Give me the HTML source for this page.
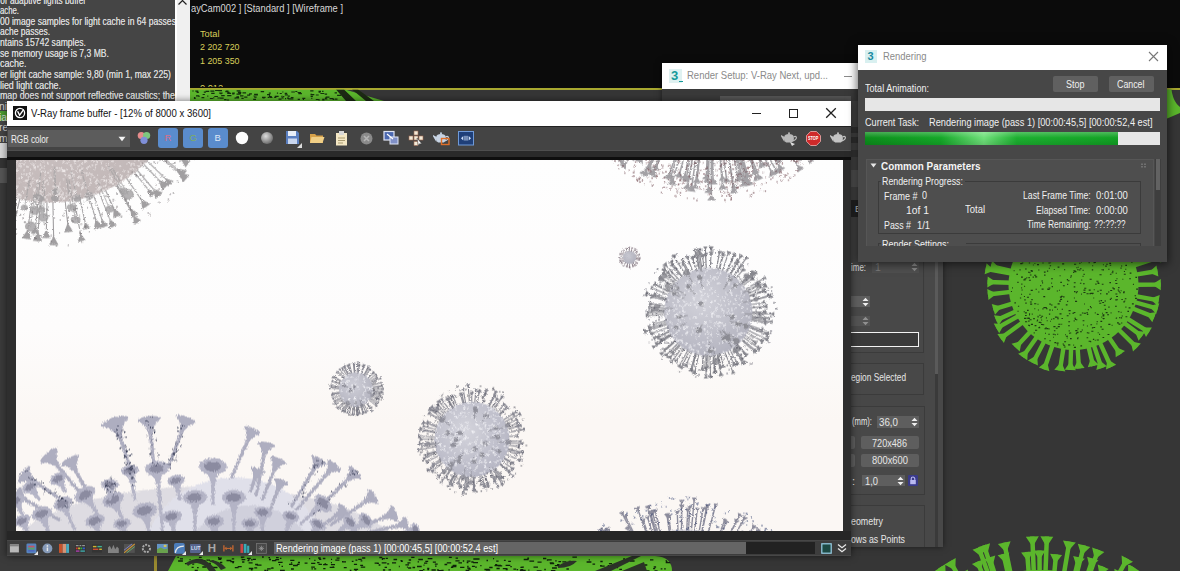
<!DOCTYPE html>
<html><head><meta charset="utf-8"><title>V-Ray frame buffer</title>
<style>
html,body{margin:0;padding:0}
body{width:1180px;height:571px;overflow:hidden;position:relative;background:#363636;font-family:"Liberation Sans",sans-serif}
.r{position:absolute}
.t{position:absolute;white-space:nowrap}
svg{position:absolute;overflow:hidden}
</style></head><body>
<div class="r" style="left:190px;top:0px;width:990px;height:88px;background:#0b0b0b;"></div>
<div class="r" style="left:190px;top:88px;width:990px;height:1.5px;background:#a8a830;"></div>
<div class="r" style="left:190px;top:89.5px;width:990px;height:481.5px;background:#363636;"></div>
<div class="r" style="left:0px;top:100px;width:157px;height:471px;background:#3b3b3b;"></div>
<div class="r" style="left:154px;top:556px;width:2.5px;height:15px;background:#9a8a30;"></div>
<div class="t" style="left:190.5px;top:2.2px;font-size:10px;line-height:13px;color:#d8d8d8;transform:scaleX(0.9333);transform-origin:0 50%;">ayCam002 ] [Standard ] [Wireframe ]</div>
<div class="t" style="left:200.0px;top:28.0px;font-size:9.5px;line-height:12px;color:#d9cf5a;transform:scaleX(0.9718);transform-origin:0 50%;">Total</div>
<div class="t" style="left:200.0px;top:41.3px;font-size:9.5px;line-height:12px;color:#d9cf5a;transform:scaleX(0.9347);transform-origin:0 50%;">2 202 720</div>
<div class="t" style="left:200.0px;top:54.5px;font-size:9.5px;line-height:12px;color:#d9cf5a;transform:scaleX(0.9347);transform-origin:0 50%;">1 205 350</div>
<div class="t" style="left:200.0px;top:82.3px;font-size:9.5px;line-height:12px;color:#d9cf5a;transform:scaleX(0.9675);transform-origin:0 50%;clip-path:inset(0 0 7.3px 0);">0,012</div>
<svg style="left:0;top:0" width="1180" height="571" viewBox="0 0 1180 571"><g><circle cx="1073.5" cy="285" r="65" fill="#5bb62c"/><path d="M1136.5 284.7L1160.8 284.6M1135.5 296.2L1158.7 300.4M1134.2 302.0L1157.7 308.7M1132.0 308.3L1154.3 317.1M1126.9 318.4L1148.9 332.2M1123.9 322.7L1141.9 336.2M1118.3 329.2L1136.9 347.6M1108.8 337.2L1120.4 354.2M1099.8 342.3L1111.1 367.0M1093.7 344.7L1101.6 368.1M1088.4 346.2L1093.2 366.0M1077.6 347.9L1079.0 368.5M1071.1 348.0L1070.3 370.0M1063.6 347.2L1059.9 370.5M1052.8 344.5L1044.1 369.4M1044.4 340.9L1032.9 363.0M1037.2 336.5L1022.7 356.9M1030.7 331.2L1015.6 347.6M1022.7 322.3L1000.6 338.5M1018.6 315.9L996.5 328.3M1016.2 311.2L996.2 320.3M1013.2 303.3L993.3 309.3M1010.9 291.9L987.9 294.5M1010.5 282.8L987.5 282.0M1011.5 273.6L985.6 268.8M1012.1 271.1L990.8 266.2M1016.8 257.6L995.5 247.2M1021.3 249.7L1002.1 236.8M1023.0 247.4L1003.1 232.5M1031.8 237.8L1017.1 221.1M1035.1 235.1L1021.3 217.1M1047.1 227.8L1036.4 204.4M1050.2 226.5L1042.0 206.0M1058.2 223.9L1053.2 203.8M1071.1 222.0L1070.2 200.5M1078.2 222.2L1079.9 198.7M1084.4 223.0L1088.8 197.8M1092.4 224.9L1099.9 201.1M1100.3 228.0L1110.2 206.9M1108.3 232.5L1120.6 214.0M1118.6 241.0L1137.3 222.8M1121.6 244.3L1141.9 227.1M1126.4 250.7L1145.8 238.1M1132.1 262.0L1155.3 252.9M1133.4 265.6L1159.5 257.1M1135.6 274.6L1157.5 271.0" stroke="#5bb62c" stroke-width="4.4" fill="none"/><path d="M1151.9 284.6L1160.8 290.2L1160.8 279.0ZM1149.9 298.8L1157.7 305.9L1159.7 294.9ZM1149.1 306.3L1156.2 314.1L1159.3 303.3ZM1146.0 313.8L1152.3 322.3L1156.4 311.9ZM1141.3 327.5L1146.0 337.0L1151.9 327.5ZM1134.7 330.8L1138.6 340.7L1145.3 331.7ZM1130.6 341.3L1133.0 351.6L1140.9 343.6ZM1115.3 346.8L1115.7 357.3L1125.0 351.0ZM1107.4 358.9L1106.0 369.4L1116.2 364.7ZM1098.7 359.6L1096.3 369.9L1106.9 366.3ZM1091.1 357.3L1087.8 367.3L1098.7 364.7ZM1078.4 359.6L1073.4 368.9L1084.6 368.1ZM1070.7 361.0L1064.7 369.7L1075.9 370.2ZM1061.3 361.7L1054.3 369.7L1065.4 371.4ZM1047.0 360.9L1038.8 367.5L1049.4 371.2ZM1037.1 355.0L1027.9 360.4L1037.9 365.5ZM1027.9 349.6L1018.1 353.7L1027.3 360.2ZM1021.7 341.0L1011.5 343.8L1019.7 351.4ZM1007.8 333.2L997.3 334.0L1003.9 343.0ZM1004.3 323.9L993.7 323.4L999.2 333.2ZM1004.4 316.5L993.9 315.2L998.6 325.4ZM1001.9 306.7L991.7 303.9L995.0 314.7ZM996.8 293.5L987.2 288.9L988.5 300.0ZM996.4 282.3L987.7 276.4L987.3 287.6ZM994.4 270.4L986.6 263.3L984.6 274.3ZM999.6 268.2L992.1 260.8L989.6 271.7ZM1003.6 251.1L997.9 242.2L993.1 252.3ZM1009.6 241.8L1005.3 232.1L999.0 241.4ZM1010.3 237.9L1006.4 228.0L999.7 237.0ZM1023.0 227.8L1021.3 217.4L1012.9 224.8ZM1026.7 224.2L1025.7 213.7L1016.8 220.5ZM1040.1 212.5L1041.5 202.0L1031.3 206.7ZM1045.3 214.3L1047.2 203.9L1036.8 208.1ZM1055.4 212.5L1058.7 202.4L1047.8 205.2ZM1070.6 209.5L1075.8 200.3L1064.6 200.7ZM1079.3 207.7L1085.5 199.2L1074.3 198.3ZM1087.3 206.6L1094.3 198.7L1083.3 196.8ZM1097.2 209.7L1105.2 202.8L1094.5 199.4ZM1106.4 215.0L1115.3 209.3L1105.2 204.5ZM1115.7 221.5L1125.3 217.1L1116.0 210.9ZM1130.9 229.1L1141.2 226.8L1133.4 218.8ZM1135.1 232.9L1145.6 231.3L1138.3 222.8ZM1138.2 243.0L1148.8 242.8L1142.7 233.4ZM1147.0 256.1L1157.4 258.1L1153.3 247.6ZM1151.0 259.9L1161.3 262.5L1157.8 251.8ZM1148.6 272.5L1158.4 276.5L1156.5 265.5Z" fill="#5bb62c"/><path d="M1078.6 249.2h1.2M1090.4 293.4h1.6M1075.6 333.8h1.3M1014.4 302.9h1.5M1021.1 258.5h1.1M1107.5 334.5h1.9M1073.6 312.5h1.8M1099.5 274.8h2.1M1109.7 252.0h1.4M1083.4 292.5h2.1M1077.4 337.8h1.2M1095.3 241.4h1.2M1097.7 332.7h0.9M1079.9 331.7h2.0M1048.4 263.0h2.1M1075.8 292.8h1.2M1058.9 290.2h1.0M1041.1 320.0h1.0M1035.0 330.3h2.2M1044.6 241.3h1.6M1081.0 294.1h0.8M1118.1 256.8h2.1M1123.3 291.7h1.5M1069.1 249.7h2.2M1115.0 306.2h1.8M1117.3 253.2h1.8M1089.7 226.9h1.3M1049.8 230.1h2.0M1024.9 312.9h2.0M1028.8 263.0h1.3M1030.8 260.6h0.9M1033.3 236.7h2.0M1068.1 246.1h1.8M1037.0 264.6h2.0M1120.7 312.4h0.8M1038.3 259.0h1.1M1059.3 242.9h1.7M1101.5 269.7h0.8M1057.1 334.3h1.1M1102.5 337.5h1.7M1017.9 306.2h1.3M1059.3 260.7h1.4M1094.3 228.4h2.0M1037.5 317.0h1.2M1102.6 318.5h2.0M1104.4 241.7h2.1M1069.2 310.6h1.4M1068.9 313.8h1.4M1042.3 253.5h1.2M1106.7 232.1h1.4M1083.5 290.1h2.0M1124.8 298.7h1.6M1053.2 337.3h0.8M1101.4 317.1h0.8M1088.2 258.0h1.0M1121.4 299.5h1.4M1038.6 247.8h1.9M1123.9 271.5h1.1M1047.2 289.1h0.8M1021.0 294.3h1.1M1068.3 321.7h1.8M1024.5 278.7h1.9M1029.5 319.8h2.1M1125.5 316.7h1.8M1102.6 315.9h1.7M1106.2 264.3h1.6M1114.4 246.3h2.1M1023.9 296.5h1.1M1063.5 228.8h1.7M1067.6 256.5h2.1M1135.4 277.4h1.6M1082.5 250.5h2.1M1096.5 255.7h0.9M1029.9 302.0h1.9M1062.9 285.8h1.9M1125.4 307.1h1.0M1045.0 333.2h1.0M1100.4 321.4h1.8M1101.5 240.8h2.1M1012.1 287.9h0.9M1081.7 330.0h1.2M1066.8 235.0h1.5M1099.7 245.7h1.2M1030.9 324.4h2.1M1088.6 341.2h2.2M1026.3 277.8h1.1M1029.9 275.0h1.6M1134.6 295.8h1.5M1027.7 318.0h1.6M1021.2 287.9h0.9M1034.1 275.2h2.1M1102.5 269.9h1.5M1102.5 314.7h1.9M1108.8 259.5h1.2M1091.3 331.2h2.1M1111.7 325.4h0.8M1083.8 313.2h1.8M1057.1 318.8h1.7M1116.1 318.0h1.0M1042.0 282.9h1.1M1032.6 277.1h1.3M1034.3 308.7h1.0M1087.7 333.0h1.7M1016.3 274.2h1.7M1092.4 261.2h1.8M1095.7 229.4h1.2M1049.5 340.6h1.1M1132.9 284.4h1.0M1077.1 338.6h1.2M1120.7 317.9h1.4M1079.1 263.3h1.4M1070.2 277.3h1.1M1048.7 230.2h2.2M1107.1 314.7h1.9M1021.3 284.1h1.1M1092.1 293.8h0.9M1030.6 270.6h1.6M1089.9 306.6h1.1M1107.2 232.1h2.1M1086.5 293.8h2.1M1019.9 298.0h1.3M1029.2 294.3h1.4M1067.7 280.7h1.8M1088.5 262.7h1.4M1070.8 245.0h1.1M1096.5 323.9h0.8M1117.7 249.9h1.8M1105.6 246.6h1.4M1037.2 258.8h2.2M1084.3 254.8h2.1M1071.6 229.4h1.9M1024.0 318.4h2.0M1054.7 233.1h1.9M1029.0 314.9h0.9M1050.0 321.2h0.8M1042.5 324.7h1.7M1080.4 345.9h1.7M1046.7 328.6h1.6M1035.0 276.9h2.2M1040.4 243.8h1.9M1083.0 283.8h1.7M1071.3 253.1h1.4M1100.0 293.7h1.3M1099.2 303.3h2.1M1030.8 271.1h2.2M1016.3 258.9h1.7M1079.9 268.8h1.6M1074.3 271.6h2.1M1096.7 321.6h1.0M1024.2 286.4h0.9M1112.0 271.2h1.5M1042.4 263.0h1.2M1047.0 245.9h1.2M1066.4 251.4h0.8M1073.9 298.0h1.0M1074.6 245.6h2.1M1073.4 270.9h2.2M1089.6 279.2h2.1M1034.1 303.7h2.2M1075.3 330.6h2.1M1066.1 242.5h2.2M1093.4 240.3h1.0M1043.3 255.0h1.1M1116.9 299.7h1.0M1025.3 303.1h1.4M1069.8 333.0h1.4M1081.5 239.8h2.2M1125.2 269.2h1.1M1118.5 324.1h1.9M1046.8 258.3h1.2M1054.7 241.5h1.6M1036.8 244.4h1.1M1073.9 347.4h2.1M1082.6 276.4h0.9M1068.1 325.8h1.7M1110.6 312.9h0.9M1117.9 311.8h1.6M1047.3 256.7h1.5M1082.6 320.8h1.8M1082.6 270.4h1.0M1091.6 238.6h1.9M1082.9 325.0h1.2M1087.6 249.4h1.7M1109.4 282.6h1.6M1072.0 224.5h1.4M1060.1 299.4h2.0M1089.5 293.6h1.6M1021.5 290.0h1.2M1076.3 267.8h1.1M1064.0 269.7h1.2M1065.3 233.1h1.2M1097.0 314.5h1.8M1059.1 301.1h1.8M1018.7 259.5h2.1M1109.2 263.4h1.9M1061.5 318.5h1.4M1128.2 261.2h1.1M1048.9 314.1h1.3M1042.4 308.9h1.1M1021.7 263.0h1.6M1097.9 244.5h1.0M1076.8 225.9h1.2M1118.3 291.3h1.6M1017.0 259.5h1.7M1078.8 270.0h1.6M1077.8 267.2h0.9M1068.6 225.4h0.9M1057.6 267.1h1.8M1055.0 259.8h1.1M1077.9 239.7h1.9M1044.6 307.6h2.2M1052.7 245.9h1.6M1063.9 232.8h2.1M1025.0 315.5h1.7M1107.8 240.0h2.0M1120.7 245.3h1.7M1021.0 277.1h1.9M1037.5 304.3h1.0M1070.0 222.3h1.3M1087.6 309.8h1.4M1057.3 344.9h0.9M1065.8 304.9h1.7M1077.8 258.6h0.9M1026.9 297.3h2.1M1093.7 289.7h1.1M1079.7 315.0h1.8M1048.8 268.3h1.1M1068.4 310.7h1.9M1055.8 328.2h1.9M1041.6 289.1h2.0M1105.2 266.1h1.6M1115.7 273.3h1.1M1131.9 303.9h1.9M1039.2 315.3h1.5M1063.9 347.0h1.7M1074.0 291.6h1.5M1034.6 325.6h1.8M1053.8 269.5h1.0M1059.5 313.9h2.0M1023.4 279.9h2.2M1068.7 330.9h1.0M1073.8 282.7h1.9M1106.0 238.0h0.9M1066.8 338.0h0.9M1030.7 290.4h2.1M1023.6 254.8h1.2M1083.5 245.5h2.1M1121.7 316.0h1.1M1029.5 272.7h1.0M1090.8 254.4h1.2M1104.5 301.0h1.5M1065.3 248.1h1.8M1104.7 309.4h1.4M1129.7 273.1h1.7M1112.1 288.0h1.8M1077.2 332.2h1.4M1136.1 289.1h1.9M1086.8 332.7h1.2M1040.5 317.6h1.2M1052.9 318.7h1.7M1072.4 313.2h1.8M1044.2 338.8h1.6M1067.5 249.2h2.0M1093.3 298.0h0.9M1050.2 237.3h1.1M1026.4 318.2h1.6M1098.8 301.1h1.0M1102.1 313.3h0.9M1109.7 265.3h1.5M1040.3 240.9h1.9M1046.1 308.8h1.4M1113.2 288.9h1.8M1129.2 278.7h1.7M1066.8 279.6h1.3M1045.6 327.6h0.9M1041.2 316.3h1.9M1095.9 241.1h1.0M1079.7 225.4h1.6M1046.7 320.7h1.0M1059.2 224.0h1.5M1061.1 228.7h1.1M1120.5 268.1h1.1M1100.5 300.6h1.6M1061.7 250.8h2.1M1045.9 317.9h1.0M1096.4 281.2h2.1M1028.0 272.3h1.6M1068.1 344.9h2.2M1093.6 240.4h1.0M1088.8 254.8h2.1M1076.2 332.7h2.0M1091.9 327.9h0.9M1099.7 290.3h2.2M1121.0 266.0h1.2M1047.8 237.3h1.3M1026.1 254.1h0.8M1086.9 326.0h1.0M1037.5 316.2h1.0M1041.4 281.0h1.6M1048.6 328.9h0.9M1062.1 263.9h2.1M1038.5 259.6h1.4M1036.2 248.3h1.9M1074.0 241.1h2.2M1104.2 235.4h1.4M1030.1 304.1h2.1M1028.4 277.6h1.4M1102.9 264.8h0.9M1064.4 225.9h1.8M1028.8 253.6h1.2M1059.6 275.8h1.0M1031.3 299.6h1.4M1123.3 301.9h1.5M1075.9 319.8h1.4M1075.0 301.4h2.1M1123.8 274.2h2.0M1023.7 311.8h1.1M1072.5 237.5h2.1M1119.2 317.6h1.0M1013.7 270.6h0.8M1074.8 319.5h1.3M1128.6 307.9h1.9M1043.4 307.6h1.6M1084.2 288.2h2.1M1057.7 326.6h2.1M1116.4 278.8h1.1M1056.5 343.1h2.1M1092.9 339.4h1.3M1047.7 289.5h2.0M1101.8 284.2h1.7M1094.8 340.2h0.9M1115.7 318.2h1.2M1121.1 250.5h1.8M1108.3 324.4h2.1M1056.8 291.0h1.1M1054.8 334.8h1.1M1086.3 312.8h1.7M1083.2 247.8h1.7M1109.7 252.8h1.1M1054.4 342.6h1.7M1065.0 334.7h0.9M1115.1 280.5h1.5M1060.3 282.4h1.6M1066.7 315.8h1.9M1102.2 302.5h1.9M1074.4 318.3h1.6M1096.7 340.0h2.2M1115.4 294.0h1.9M1028.0 325.3h1.5M1093.5 327.5h1.7M1041.0 324.5h1.9M1028.9 280.3h2.0M1055.2 243.3h2.1M1099.1 334.4h1.0M1049.7 265.8h1.4M1081.6 229.7h1.9M1077.4 328.9h1.1M1034.5 263.5h0.8M1029.8 254.5h1.6M1092.2 265.8h1.0M1117.6 290.0h1.4M1043.3 296.6h1.9M1127.4 311.4h1.6M1019.5 269.9h1.1M1094.8 312.9h0.9M1053.9 330.7h1.5M1069.0 333.2h0.9M1084.7 261.4h1.2M1101.6 329.2h2.0M1077.1 269.8h1.4M1054.2 307.1h2.2M1116.1 296.5h1.9M1097.4 282.9h1.4M1073.1 272.5h1.1M1091.8 269.9h1.4M1061.3 324.2h0.9M1135.0 298.4h1.9M1070.5 254.9h1.2M1044.1 275.1h1.4M1108.2 269.3h1.3M1122.4 279.2h0.9M1031.8 314.1h0.9M1044.5 328.8h2.0M1023.5 253.0h1.4M1028.2 321.1h1.3M1079.2 256.3h1.3M1092.4 327.7h1.0M1081.9 313.0h1.5M1058.3 324.3h2.2M1048.3 232.1h1.1M1060.9 296.4h1.8M1052.0 310.1h0.8M1086.9 314.4h1.4M1120.8 260.4h1.2M1057.6 303.9h2.1M1038.4 327.6h1.8M1081.0 280.0h1.3M1059.9 297.1h2.0M1048.3 334.3h1.5M1110.7 298.4h1.1M1097.2 291.2h1.6M1108.0 292.0h1.4M1051.1 278.7h1.8M1070.0 338.6h1.7M1090.7 307.8h1.2M1064.2 246.0h1.3M1093.5 262.6h1.2M1057.0 309.2h0.9M1123.0 292.7h1.6M1096.0 226.9h1.2M1044.5 231.9h1.1M1054.3 237.2h2.1M1094.2 262.5h1.7M1108.3 307.1h1.3M1109.8 299.4h1.3M1040.2 285.6h1.0M1037.9 310.0h1.0M1057.8 258.4h0.9M1051.1 319.3h1.0M1027.7 258.8h1.6M1070.6 275.9h1.3M1063.1 296.9h1.4M1115.3 299.9h1.6M1038.2 292.0h1.2M1110.2 290.5h2.0M1043.9 272.1h1.7M1090.4 324.7h1.7M1109.9 274.3h1.6M1125.3 265.4h1.7M1044.2 257.2h1.4M1064.1 341.7h2.0M1029.2 325.6h0.9M1103.0 318.8h1.2M1033.7 332.9h1.0M1084.2 313.2h1.8M1073.7 286.9h1.6M1049.3 304.1h1.5M1046.1 247.2h1.7M1020.2 263.6h2.2M1054.9 317.1h2.0M1052.8 334.2h1.8M1049.5 228.0h2.0M1100.3 326.9h1.5M1038.2 270.0h1.2M1073.2 238.9h1.1M1073.7 320.9h1.0M1051.2 283.1h0.9M1091.8 293.4h1.8M1105.7 312.6h1.9M1048.3 288.1h2.0M1083.5 274.4h1.2M1017.3 282.4h1.3M1066.8 254.1h1.8M1056.6 317.3h1.9M1105.1 237.1h1.6M1027.0 310.4h1.7M1101.0 235.7h1.0M1036.6 321.0h1.1M1076.4 291.8h1.6M1131.4 262.5h1.0M1057.9 247.3h1.7M1025.0 321.8h2.2M1124.3 301.0h1.0M1106.0 293.9h1.8M1095.3 284.1h1.3M1119.3 292.7h1.5M1049.0 310.0h1.9M1091.3 256.5h1.3M1032.8 247.8h2.2M1033.2 318.6h1.6M1081.0 262.0h1.0M1121.1 323.0h1.2M1051.7 286.6h1.3M1120.6 290.7h1.0M1050.2 261.6h1.1M1035.6 289.3h1.2M1088.7 290.1h2.0M1067.1 301.4h1.1M1010.9 291.5h1.1M1103.0 252.5h1.4M1087.4 247.8h0.9M1025.0 269.0h1.7M1063.1 345.2h2.0M1115.4 283.5h2.0M1069.4 258.9h0.8M1084.1 304.0h0.9M1038.9 327.4h1.2M1067.1 284.4h1.1M1079.9 283.3h1.5M1094.2 232.8h1.8M1027.9 318.4h2.0M1080.5 222.8h0.9M1111.6 272.7h1.8M1073.3 345.1h0.8M1046.9 271.1h1.3M1038.7 322.4h1.9M1040.3 322.8h1.3M1062.6 344.0h1.3M1103.8 305.3h1.8M1086.6 337.8h1.6M1062.2 261.0h0.9M1096.8 314.2h1.4M1118.1 287.6h1.4M1053.4 326.6h2.1M1090.1 341.8h1.2M1074.0 264.3h2.2M1017.5 311.3h1.1M1029.1 313.9h1.0M1065.9 336.3h2.1M1061.7 309.3h1.3M1097.7 283.4h1.7M1037.0 320.1h1.1M1029.3 245.4h2.0M1042.6 252.6h1.6M1117.0 322.9h1.8M1024.3 299.9h1.4M1050.9 305.0h1.6M1032.9 265.0h0.8M1044.1 254.8h1.6M1023.1 250.9h1.0" stroke="#1d3a12" stroke-width="1.1" fill="none"/></g><clipPath id="cbr"><rect x="920" y="530" width="260" height="41"/></clipPath><g clip-path="url(#cbr)"><g><circle cx="1040" cy="716" r="146" fill="#5bb62c"/><path d="M1184.0 717.8L1218.8 718.2M1182.6 735.8L1218.0 740.7M1179.9 750.3L1214.5 758.8M1178.5 755.5L1210.8 764.7M1167.9 782.2L1198.5 798.0M1160.3 795.1L1187.1 812.7M1154.9 802.8L1180.9 822.4M1144.1 815.5L1168.8 839.0M1138.5 821.1L1160.7 844.8M1123.4 833.4L1144.1 862.4M1104.0 845.0L1118.4 873.8M1089.3 851.3L1100.3 881.5M1076.9 855.2L1085.1 886.2M1070.3 856.8L1077.8 891.4M1052.0 859.5L1054.7 891.9M1025.3 859.2L1021.7 894.5M1019.7 858.6L1014.7 894.0M1000.9 854.6L991.6 887.9M990.7 851.3L978.4 884.9M970.1 841.9L952.7 873.3M954.6 831.9L935.1 858.4M948.3 827.0L927.8 851.9M939.0 818.7L916.7 841.3M927.1 805.4L900.3 826.6M920.5 796.3L891.8 815.5M910.3 778.6L880.7 792.9M902.1 757.6L869.9 767.3M900.0 749.5L867.2 757.4M896.6 728.6L864.9 731.4M896.2 709.2L864.6 707.7M897.3 696.9L862.3 692.2M898.0 691.9L863.5 686.0M902.9 671.9L870.5 661.4M906.5 662.0L877.1 650.1M914.3 645.7L883.1 628.3M922.8 632.4L894.4 612.1M939.8 612.6L914.9 586.9M945.1 607.7L923.3 582.8M959.5 596.6L939.9 567.6M967.6 591.5L950.1 561.4M990.7 580.7L978.6 547.5M995.1 579.2L983.9 545.2M1010.9 575.0L1004.2 542.6M1033.8 572.1L1032.3 536.5M1045.5 572.1L1046.9 536.5M1063.9 574.0L1069.4 541.6M1076.0 576.6L1084.0 545.3M1087.6 580.1L1098.2 549.7M1109.8 590.1L1127.3 558.6M1116.7 594.1L1133.6 567.3M1138.5 610.9L1161.6 586.2M1143.6 616.0L1167.0 593.4M1155.5 629.9L1183.7 608.9M1163.1 641.2L1191.6 623.9M1167.9 649.8L1199.5 633.4M1174.2 663.7L1205.6 651.4M1181.6 689.8L1213.2 684.0M1183.5 703.8L1219.1 700.7" stroke="#5bb62c" stroke-width="4.5" fill="none"/><path d="M1208.4 718.1L1218.7 724.7L1218.9 711.7ZM1207.7 739.3L1217.1 747.1L1218.9 734.3ZM1204.4 756.3L1212.9 765.1L1216.0 752.5ZM1200.8 761.9L1209.0 771.0L1212.6 758.5ZM1189.2 793.2L1195.5 803.8L1201.4 792.2ZM1178.4 807.0L1183.5 818.1L1190.6 807.3ZM1172.6 816.2L1177.0 827.6L1184.8 817.3ZM1161.2 831.8L1164.3 843.7L1173.2 834.3ZM1153.5 837.2L1155.9 849.2L1165.4 840.3ZM1138.0 853.9L1138.8 866.2L1149.4 858.6ZM1113.8 864.5L1112.6 876.7L1124.2 870.9ZM1096.7 871.7L1094.2 883.7L1106.4 879.3ZM1082.4 876.1L1078.8 887.9L1091.4 884.5ZM1075.6 881.2L1071.5 892.8L1084.2 890.0ZM1053.8 881.5L1048.2 892.4L1061.1 891.3ZM1022.7 884.1L1015.2 893.8L1028.1 895.2ZM1016.1 883.7L1008.2 893.1L1021.1 894.9ZM994.4 877.8L985.3 886.1L997.8 889.6ZM982.0 875.1L972.3 882.6L984.5 887.1ZM957.8 864.2L947.1 870.1L958.4 876.4ZM941.2 850.0L929.8 854.5L940.3 862.2ZM934.4 843.9L922.8 847.8L932.8 856.0ZM924.0 833.9L912.1 836.8L921.4 845.9ZM908.4 820.2L896.3 821.6L904.3 831.7ZM900.4 809.7L888.1 810.1L895.4 820.9ZM890.0 788.3L877.9 787.0L883.5 798.7ZM879.9 764.3L868.0 761.1L871.8 773.6ZM877.3 755.0L865.7 751.1L868.7 763.7ZM875.3 730.5L864.4 724.9L865.5 737.9ZM875.0 708.2L864.9 701.2L864.3 714.2ZM872.6 693.6L863.2 685.7L861.4 698.6ZM873.7 687.7L864.6 679.6L862.4 692.4ZM880.4 664.6L872.5 655.2L868.5 667.6ZM886.7 654.0L879.5 644.1L874.7 656.2ZM892.1 633.3L886.2 622.6L879.9 633.9ZM902.8 618.1L898.1 606.8L890.6 617.4ZM922.2 594.4L919.6 582.4L910.3 591.4ZM930.1 590.6L928.2 578.5L918.4 587.1ZM945.7 576.2L945.3 564.0L934.5 571.2ZM955.3 570.4L955.7 558.1L944.5 564.6ZM982.2 557.2L984.7 545.2L972.5 549.7ZM987.2 555.1L990.1 543.2L977.8 547.2ZM1006.3 552.8L1010.6 541.3L997.9 543.9ZM1032.7 546.9L1038.8 536.3L1025.8 536.8ZM1046.5 546.9L1053.3 536.7L1040.4 536.2ZM1067.7 551.8L1075.8 542.6L1063.0 540.5ZM1081.4 555.4L1090.3 546.9L1077.8 543.7ZM1094.8 559.6L1104.4 551.9L1092.1 547.6ZM1122.3 567.7L1133.0 561.8L1121.6 555.5ZM1128.1 576.1L1139.1 570.8L1128.1 563.8ZM1154.5 593.8L1166.4 590.6L1156.9 581.7ZM1159.6 600.6L1171.6 598.0L1162.5 588.7ZM1175.3 615.1L1187.6 614.1L1179.8 603.7ZM1182.7 629.3L1195.0 629.4L1188.2 618.3ZM1190.3 638.2L1202.5 639.2L1196.5 627.6ZM1195.9 655.2L1207.9 657.5L1203.2 645.4ZM1202.9 685.9L1214.3 690.4L1212.0 677.6ZM1208.8 701.6L1219.7 707.2L1218.6 694.2Z" fill="#5bb62c"/><path d="" stroke="#1d3a12" stroke-width="1.1" fill="none"/></g><g><circle cx="1040" cy="716" r="146" fill="#5bb62c"/><path d="M1183.5 728.0L1205.5 729.9M1182.1 739.1L1201.2 742.2M1180.5 747.5L1201.3 752.2M1173.9 768.9L1194.2 776.9M1168.1 781.8L1187.5 791.8M1161.0 794.1L1179.5 806.0M1147.6 811.7L1162.6 825.1M1138.6 820.9L1153.3 836.5M1130.6 827.9L1143.7 844.0M1110.4 841.6L1119.9 858.4M1096.5 848.5L1104.9 868.2M1081.3 854.0L1086.9 872.8M1076.7 855.3L1082.2 876.5M1051.2 859.6L1052.8 879.7M1045.8 859.9L1046.6 878.8M1022.5 858.9L1020.1 878.2M1002.7 855.1L997.3 875.3M998.1 853.8L991.9 874.1M981.4 847.5L972.1 868.2M960.8 836.2L949.5 853.4M951.2 829.4L938.0 846.3M937.8 817.5L921.6 833.6M934.8 814.3L920.3 827.8M920.0 795.6L903.7 806.4M912.2 782.3L895.8 790.8M904.3 764.2L884.9 771.1M902.8 759.8L882.5 766.3M898.4 742.0L879.7 745.4M896.2 724.0L877.6 725.1M896.0 712.4L873.7 711.8M898.4 689.9L880.6 686.6M902.4 673.6L885.1 668.3M905.4 664.9L884.3 657.0M913.6 647.0L896.5 637.7M919.8 636.7L903.2 625.7M926.8 626.9L908.8 612.7M936.4 616.0L921.9 602.0M955.7 599.3L944.0 583.0M971.8 589.2L962.7 572.3M985.9 582.6L977.4 561.7M996.3 578.8L989.5 557.4M1008.3 575.5L1003.4 553.9M1028.7 572.4L1027.1 551.9M1039.6 572.0L1039.5 550.5M1054.3 572.7L1056.1 554.4M1074.4 576.2L1079.0 557.4M1085.8 579.5L1092.8 558.7M1096.1 583.4L1103.2 566.7M1109.5 589.9L1119.7 571.6M1125.5 600.2L1137.0 584.7M1138.5 611.0L1154.0 594.5M1147.4 620.1L1162.4 606.8M1162.2 639.8L1180.0 628.6M1165.6 645.6L1183.4 635.7M1173.7 662.4L1191.0 655.5M1178.3 675.8L1197.0 670.3M1182.7 697.0L1202.2 694.5M1183.9 710.5L1206.7 709.6" stroke="#5bb62c" stroke-width="4.5" fill="none"/><path d="M1196.0 729.1L1205.0 735.8L1206.0 723.9ZM1191.7 740.6L1200.2 748.1L1202.2 736.3ZM1191.9 750.1L1200.0 758.1L1202.6 746.4ZM1185.3 773.4L1192.0 782.5L1196.4 771.3ZM1179.0 787.4L1184.8 797.2L1190.2 786.5ZM1171.4 800.8L1176.2 811.1L1182.7 801.0ZM1155.4 818.7L1158.6 829.5L1166.6 820.6ZM1146.7 829.5L1148.9 840.6L1157.7 832.4ZM1137.6 836.6L1139.0 847.8L1148.4 840.3ZM1115.2 850.1L1114.7 861.4L1125.1 855.5ZM1101.1 859.3L1099.4 870.5L1110.4 865.8ZM1084.1 863.6L1081.1 874.5L1092.6 871.1ZM1079.8 867.2L1076.4 878.1L1088.1 875.0ZM1052.0 870.2L1046.8 880.2L1058.8 879.3ZM1046.2 869.3L1040.6 879.1L1052.6 878.6ZM1021.3 868.7L1014.2 877.5L1026.1 879.0ZM999.8 866.0L991.5 873.8L1003.1 876.9ZM994.7 864.9L986.2 872.4L997.7 875.9ZM976.0 859.5L966.7 865.8L977.6 870.7ZM954.7 845.4L944.4 850.1L954.5 856.7ZM943.9 838.7L933.2 842.6L942.7 850.0ZM928.4 826.8L917.4 829.3L925.8 837.9ZM927.3 821.3L916.2 823.4L924.4 832.2ZM911.7 801.1L900.4 801.4L907.1 811.4ZM904.3 786.4L893.0 785.5L898.6 796.1ZM893.9 767.9L882.9 765.4L886.9 776.7ZM891.7 763.4L880.7 760.6L884.4 772.0ZM889.1 743.6L878.6 739.5L880.8 751.3ZM887.2 724.5L877.2 719.1L877.9 731.1ZM883.3 712.1L873.9 705.8L873.6 717.8ZM890.1 688.4L881.7 680.7L879.5 692.5ZM894.3 671.1L886.9 662.6L883.3 674.0ZM893.3 660.4L886.4 651.3L882.2 662.6ZM904.9 642.3L899.3 632.4L893.6 642.9ZM911.2 631.0L906.5 620.7L899.9 630.7ZM916.3 618.6L912.5 608.0L905.1 617.4ZM928.8 608.7L926.1 597.7L917.8 606.3ZM949.6 590.8L948.9 579.5L939.1 586.6ZM967.2 580.7L968.0 569.4L957.4 575.1ZM981.0 570.6L983.0 559.5L971.9 564.0ZM992.5 566.5L995.3 555.6L983.8 559.2ZM1005.5 563.3L1009.3 552.6L997.6 555.2ZM1027.8 561.5L1033.0 551.5L1021.1 552.4ZM1039.5 560.1L1045.5 550.5L1033.5 550.5ZM1055.1 563.9L1062.1 555.0L1050.1 553.8ZM1076.7 566.7L1084.9 558.8L1073.2 556.0ZM1089.7 567.8L1098.5 560.6L1087.1 556.8ZM1099.5 575.6L1108.7 569.1L1097.7 564.4ZM1115.0 580.0L1124.9 574.5L1114.4 568.7ZM1131.3 592.4L1141.8 588.2L1132.2 581.1ZM1147.4 601.5L1158.4 598.6L1149.6 590.4ZM1155.2 613.2L1166.4 611.2L1158.4 602.3ZM1171.9 633.7L1183.2 633.7L1176.9 623.5ZM1175.0 640.4L1186.3 640.9L1180.5 630.4ZM1182.1 659.0L1193.2 661.0L1188.8 649.9ZM1187.8 673.0L1198.7 676.1L1195.3 664.6ZM1192.7 695.7L1203.0 700.4L1201.4 688.5ZM1197.1 710.0L1207.0 715.6L1206.5 703.6Z" fill="#5bb62c"/><path d="" stroke="#1d3a12" stroke-width="1.1" fill="none"/></g></g><clipPath id="ctl"><rect x="190" y="89.5" width="472" height="12"/></clipPath><g clip-path="url(#ctl)"><path d="M190 89.5H345L384 101H190Z" fill="#5bb62c"/><path d="M336 89.5l8 0 12 11.5-10 0zM352 89.5l6 0 16 11.5-8 0z" fill="#1d2a14"/><path d="M227.2 95.7h2.1M281.4 96.4h1.2M193.9 98.5h1.8M226.7 100.0h2.4M315.8 95.0h2.9M214.3 96.5h3.6M269.4 97.5h3.0M201.5 97.7h2.8M236.6 90.8h3.6M262.0 97.3h3.6M297.7 99.3h2.2M310.5 94.7h3.8M322.1 91.4h1.4M224.1 99.7h2.3M284.7 93.4h2.5M249.1 93.8h2.8M278.5 99.1h3.0M329.5 98.6h4.0M291.3 92.0h3.6M334.8 99.1h2.7M297.6 92.5h3.5M276.9 93.2h1.2M318.4 99.9h1.3M310.5 94.4h1.5M235.5 97.8h3.6M198.5 96.3h1.1M298.3 93.6h3.6M337.1 95.3h4.0M237.8 91.2h2.8M196.6 92.4h2.2M282.3 92.0h1.1M320.4 93.5h3.9M324.7 94.1h2.4M269.0 96.6h2.8M274.8 96.4h3.8M267.0 94.6h3.2M227.2 93.4h3.9M269.1 95.7h1.0M253.5 96.0h1.1M283.1 96.5h1.2M284.8 94.9h3.0M244.2 97.2h3.2M195.3 91.1h3.0M334.6 92.9h2.4M279.7 93.5h2.1M238.3 94.0h2.8M236.5 94.1h3.3M196.0 95.9h3.2M237.9 92.6h3.4M227.3 92.3h2.3M295.3 91.5h2.0M241.4 98.4h2.3M318.6 92.1h2.0M288.2 98.9h2.4M225.3 91.6h2.6M220.2 98.2h3.5M219.2 93.1h3.4M287.0 98.2h2.0M211.2 93.3h3.4M232.1 93.8h2.3M254.1 94.4h3.8M215.1 90.5h3.8M322.2 99.9h2.3M332.6 99.3h1.7M302.3 98.4h3.0M268.8 93.2h2.0M225.7 91.1h2.8M234.5 98.2h1.1M325.7 97.1h3.8M324.7 99.0h2.7M193.9 97.6h1.5M236.4 96.8h2.6M253.2 99.4h2.8M242.5 92.9h3.6M262.6 97.9h2.1M221.2 95.6h3.5M217.4 98.0h3.8M311.3 98.3h1.0M285.0 98.7h1.1M232.2 93.1h2.6M254.6 95.0h3.3M192.3 91.0h1.4M210.4 91.1h3.9M318.5 91.3h2.5M238.8 93.5h2.1M287.7 96.1h2.1M220.3 93.6h1.4M274.2 97.3h2.1M203.8 92.2h2.1M281.5 97.9h2.1M310.6 96.4h2.3M247.1 95.2h3.1M254.2 97.1h2.4M228.3 95.6h3.1M202.6 94.5h2.3M322.2 99.4h2.1M324.9 98.0h1.8M260.7 91.7h3.4M290.0 98.9h3.4M290.8 97.5h2.7M207.3 96.1h1.0M213.2 97.9h1.1M205.6 91.4h3.6M218.5 90.7h3.5M209.9 98.5h3.0M315.8 99.5h2.7M310.2 90.8h3.3M267.7 97.3h1.3M302.8 99.4h1.2M240.0 95.9h3.5" stroke="#14300c" stroke-width="1.2" fill="none"/></g><clipPath id="cbl"><rect x="157" y="556" width="530" height="15"/></clipPath><g clip-path="url(#cbl)"><path d="M168 571L176 556H655Q672 557 672 571Z" fill="#5bb62c"/><path d="M269.0 559.5h2.0M412.5 567.5h2.6M317.1 562.6h2.4M336.6 558.2h3.0M549.7 562.8h4.0M237.7 566.7h4.0M434.8 564.2h2.9M422.9 569.6h1.6M212.8 567.5h4.7M374.6 563.2h3.9M247.5 560.7h1.8M400.9 561.4h1.9M441.4 570.3h2.2M446.8 562.8h4.4M400.5 560.7h1.9M184.9 563.7h2.5M242.1 562.0h2.3M473.3 559.0h5.0M360.2 565.4h2.9M496.5 568.5h3.2M360.8 567.1h4.4M329.7 567.3h4.8M355.5 560.2h1.9M451.6 566.5h4.8M503.9 560.4h1.8M275.3 559.6h3.8M505.7 569.6h2.0M508.2 561.4h2.7M455.9 558.2h1.4M496.2 561.1h2.4M398.8 566.5h1.0M304.6 563.1h2.9M256.7 565.2h4.8M326.1 564.6h1.5M281.5 566.3h1.5M516.7 569.7h1.4M537.5 562.2h4.1M466.8 561.1h3.7M427.2 568.3h2.1M465.6 570.5h3.7M381.9 558.6h3.0M311.2 567.1h3.7M393.5 559.5h3.6M418.3 559.5h4.6M427.7 558.7h4.7M230.3 561.6h3.9M405.4 564.8h3.6M351.8 561.4h1.7M202.3 567.0h4.0M384.6 567.4h2.4M278.1 562.4h4.5M192.2 564.1h2.0M471.3 562.0h2.3M330.9 564.6h4.1M311.5 568.9h1.4M279.9 558.4h1.5M475.1 567.2h1.7M248.6 562.8h4.0M489.2 567.5h3.4M232.2 562.6h1.8M378.6 565.0h1.8M272.1 567.9h1.1M484.4 569.5h4.8M323.1 564.7h3.3M419.3 570.7h3.7M291.0 569.0h2.9M406.9 567.2h1.0M471.9 566.3h3.0M377.1 563.4h1.8M379.3 557.5h3.0M424.0 563.2h3.3M544.3 569.5h1.5M480.3 565.7h1.2M314.2 560.3h1.3M382.9 570.0h2.3M510.3 566.7h1.5M505.6 565.4h4.7M450.9 567.4h2.4M485.8 570.0h4.4M343.8 567.6h2.9M217.9 557.6h1.3M252.9 559.3h3.0M444.5 564.5h2.7M425.3 561.3h2.9M466.7 562.6h1.7M521.4 567.1h2.5M318.5 564.4h3.4M262.0 557.0h1.8M476.7 559.0h2.8M251.0 559.9h1.7M331.0 559.4h1.1M218.3 559.4h3.0M198.9 557.3h2.8M332.6 566.8h1.2M330.9 562.6h1.1M546.8 560.1h1.4M358.2 559.3h3.5M309.0 558.7h1.2M455.4 560.9h4.2M354.7 570.1h2.2M272.0 560.7h4.3M417.6 561.8h1.4M438.0 570.6h3.4M177.4 557.4h1.4M241.4 557.5h1.2M427.3 569.6h1.8M550.0 563.7h4.2M528.3 570.2h1.1M293.0 565.5h4.8M209.7 561.1h4.4M220.0 562.5h2.3M437.1 570.0h1.7M460.1 567.3h4.3M388.5 569.9h2.5M335.3 560.2h4.1M360.6 560.8h1.7M452.7 565.5h3.8M324.5 563.8h1.6M448.9 557.3h2.9M467.2 566.5h1.4M267.1 568.8h3.6M513.4 569.2h2.8M520.4 567.3h2.3M318.1 558.0h2.6M543.0 558.5h3.3M218.3 558.1h3.6M268.4 557.7h1.6M423.5 565.2h1.0M264.3 570.5h1.9M392.0 562.9h4.1M408.1 568.0h3.1M248.3 559.5h1.3M493.0 558.6h1.1M547.1 559.8h4.6M208.9 563.5h1.9M494.5 565.6h3.6M468.4 569.2h2.4M407.6 563.2h1.4M496.8 565.3h4.3M255.1 564.5h2.9M455.6 558.1h2.4M362.1 558.0h3.2M458.4 562.9h3.6M408.7 560.0h2.4M558.4 561.7h2.7M208.3 560.1h1.7M533.5 567.2h4.5M554.8 565.6h4.7M381.7 562.9h4.8M522.8 570.3h2.9M473.0 562.7h5.0M529.4 561.1h4.7M246.9 558.3h3.9M289.0 564.3h3.6M191.6 567.4h2.1M342.0 561.8h4.0M462.8 561.0h1.4M290.9 562.8h1.3M234.8 567.7h3.8M550.9 570.7h4.5M319.1 559.3h2.2M353.9 564.4h3.2M314.1 568.9h2.1M353.9 569.4h4.2M290.2 560.4h4.2M179.9 558.8h3.1M381.8 559.3h1.2M254.3 567.8h2.9M552.0 568.0h4.9M189.5 559.6h1.1M342.0 561.7h1.2M385.7 558.3h2.2M270.9 568.2h2.7M276.0 557.6h2.7M417.0 566.5h4.7M486.5 560.5h1.5M467.2 568.1h3.0M495.1 564.7h2.1M240.8 557.2h3.6M520.4 569.7h2.9M431.5 570.0h4.3M407.4 562.8h3.1M241.6 559.6h3.7M557.0 564.7h2.6M311.1 563.4h4.2M349.8 570.4h1.6M296.9 564.3h2.6M502.8 568.6h4.7M411.2 557.4h3.3M387.1 563.8h2.1M448.4 569.8h1.4M432.8 562.2h3.1M519.9 570.4h3.6M250.9 569.9h1.7M323.2 568.6h2.3M280.0 570.3h4.8M297.9 562.5h2.1M226.5 560.5h4.9M206.4 560.2h1.8M206.5 564.4h4.0M497.9 565.8h4.3M178.1 561.0h4.8M202.6 560.7h2.9M278.9 564.6h1.2M266.6 570.4h1.6M523.7 559.5h5.0M435.0 566.1h1.6M197.0 567.6h1.7M248.8 568.5h4.5M194.7 570.5h3.1M322.8 558.5h2.6M555.2 560.9h1.5M231.8 558.8h2.4M527.3 558.1h1.8M536.7 571.0h4.9M586.6 562.0h4.8M612.4 566.8h2.3M562.3 561.8h4.0M644.4 565.0h2.9M618.1 563.2h3.1M650.0 559.8h3.4M660.7 568.9h1.7M664.1 568.8h1.7M588.7 559.8h1.2M665.7 562.7h4.5M572.4 557.2h4.5M645.8 570.9h3.7M616.7 567.7h1.4M618.4 563.2h1.6M624.8 561.5h3.0M600.3 561.5h2.4M624.9 570.7h4.7M653.1 568.7h2.1M665.5 560.8h1.5M614.1 567.3h2.4M629.7 561.0h4.9M608.9 563.7h3.1M654.5 570.8h3.1M607.7 565.6h1.3M606.0 568.9h4.1M566.4 569.0h2.5M666.0 562.1h1.9M619.3 569.4h2.7M653.7 567.0h2.4M592.5 564.1h2.6M600.2 566.1h4.5M623.1 559.0h1.9M600.1 565.6h1.6M568.8 561.5h2.1M563.2 564.5h4.7" stroke="#0f220a" stroke-width="1.3" fill="none"/><path d="M186 563q8-5 16-4q10 4 14 12h-7q-4-7-12-8q-6 0-9 3zM212 560q8 1 14 8l-5 2q-4-6-10-8zM558 566q8-6 19-5q-6 7-19 7zM595 571l37-15h9l-30 15zM622 571l22-9 3 9z" fill="#2c3428"/></g><path d="M1166 89.5h5.500c1 8 4 14 8.500 17.500v6l-14 6z" fill="#5bb62c"/></svg>
<div class="r" style="left:0px;top:0px;width:175px;height:101px;background:#454545;"></div>
<div class="r" style="left:0;top:0;width:175px;height:101px;overflow:hidden"><div class="t" style="left:-2.5px;top:-6.5px;font-size:10.3px;line-height:13px;color:#d6d6d6;transform:scaleX(0.8018);transform-origin:0 50%;text-shadow:0 0 .7px #d6d6d6;">for adaptive lights buffer</div>
<div class="t" style="left:0.0px;top:3.8px;font-size:10.3px;line-height:13px;color:#d6d6d6;transform:scaleX(0.7540);transform-origin:0 50%;text-shadow:0 0 .7px #d6d6d6;">ache.</div>
<div class="t" style="left:0.0px;top:14.5px;font-size:10.3px;line-height:13px;color:#d6d6d6;transform:scaleX(0.8330);transform-origin:0 50%;text-shadow:0 0 .7px #d6d6d6;">00 image samples for light cache in 64 passes</div>
<div class="t" style="left:0.0px;top:25.2px;font-size:10.3px;line-height:13px;color:#d6d6d6;transform:scaleX(0.8238);transform-origin:0 50%;text-shadow:0 0 .7px #d6d6d6;">ache passes.</div>
<div class="t" style="left:0.0px;top:35.9px;font-size:10.3px;line-height:13px;color:#d6d6d6;transform:scaleX(0.8344);transform-origin:0 50%;text-shadow:0 0 .7px #d6d6d6;">ntains 15742 samples.</div>
<div class="t" style="left:0.0px;top:46.5px;font-size:10.3px;line-height:13px;color:#d6d6d6;transform:scaleX(0.8351);transform-origin:0 50%;text-shadow:0 0 .7px #d6d6d6;">se memory usage is 7,3 MB.</div>
<div class="t" style="left:0.0px;top:57.3px;font-size:10.3px;line-height:13px;color:#d6d6d6;transform:scaleX(0.8732);transform-origin:0 50%;text-shadow:0 0 .7px #d6d6d6;"> cache.</div>
<div class="t" style="left:0.0px;top:68.0px;font-size:10.3px;line-height:13px;color:#d6d6d6;transform:scaleX(0.8413);transform-origin:0 50%;text-shadow:0 0 .7px #d6d6d6;">er light cache sample: 9,80 (min 1, max 225)</div>
<div class="t" style="left:0.0px;top:78.7px;font-size:10.3px;line-height:13px;color:#d6d6d6;transform:scaleX(0.8591);transform-origin:0 50%;text-shadow:0 0 .7px #d6d6d6;">lied light cache.</div>
<div class="t" style="left:0.0px;top:89.4px;font-size:10.3px;line-height:13px;color:#d6d6d6;transform:scaleX(0.8586);transform-origin:0 50%;text-shadow:0 0 .7px #d6d6d6;">map does not support reflective caustics; the</div>
</div>
<div class="r" style="left:175px;top:0px;width:15px;height:101px;background:#f0f0f0;border-left:2px solid #fff;box-sizing:border-box;"></div>
<svg style="left:175px;top:0" width="15" height="8" viewBox="0 0 15 8"><path d="M3.5 4.5L7.5 0.5L11.5 4.5" stroke="#222" stroke-width="1.2" fill="none"/></svg><div class="r" style="left:0px;top:101px;width:7px;height:10px;background:#454545;"></div>
<div class="r" style="left:0px;top:111px;width:7px;height:10px;background:#4a9a30;"></div>
<div class="r" style="left:0px;top:121px;width:7px;height:22px;background:#454545;"></div>
<div class="r" style="left:0;top:101px;width:7px;height:42px;overflow:hidden"><div class="t" style="left:-1.0px;top:-1.0px;font-size:10.3px;line-height:13px;color:#d6d6d6;">ni</div>
<div class="t" style="left:-1.0px;top:9.7px;font-size:10.3px;line-height:13px;color:#d6d6d6;">ia</div>
<div class="t" style="left:-1.0px;top:20.4px;font-size:10.3px;line-height:13px;color:#d6d6d6;">re</div>
<div class="t" style="left:-1.0px;top:31.1px;font-size:10.3px;line-height:13px;color:#d6d6d6;">mp</div>
</div><div class="r" style="left:0px;top:143px;width:7px;height:15px;background:#d6d6d6;"></div>
<div class="r" style="left:0px;top:158px;width:7px;height:10px;background:#333;"></div>
<div class="r" style="left:0px;top:168px;width:7px;height:15px;background:#555;"></div>
<div class="r" style="left:0px;top:183px;width:7px;height:373px;background:#3a3a3a;"></div>
<div class="r" style="left:662px;top:63px;width:281px;height:484px;background:#474747;box-shadow:0 0 6px rgba(0,0,0,.5);"></div>
<div class="r" style="left:662px;top:63px;width:196px;height:25.5px;background:#fff;"></div>
<svg style="left:668px;top:68px" width="16" height="16" viewBox="0 0 16 16"><rect x="1" y="1" width="13" height="14" fill="#dff1f1"/></svg><div class="t" style="left:671.0px;top:67.0px;font-size:13px;line-height:17px;color:#149a9a;font-weight:bold;">3</div>
<div class="r" style="left:679px;top:80.5px;width:4px;height:1.5px;background:#149a9a;"></div>
<div class="t" style="left:686.5px;top:68.3px;font-size:11.5px;line-height:15px;color:#8a8a8a;transform:scaleX(0.8261);transform-origin:0 50%;">Render Setup: V-Ray Next, upd...</div>
<div class="r" style="left:843.5px;top:75.5px;width:8.5px;height:1.1px;background:#8a8a8a;"></div>
<div class="r" style="left:662px;top:88.5px;width:196px;height:12.5px;background:#3a3a3a;"></div>
<div class="r" style="left:720px;top:96px;width:131px;height:5px;background:#555;"></div>
<div class="r" style="left:851px;top:101px;width:7px;height:161px;background:#464646;"></div>
<div class="r" style="left:851px;top:127px;width:7px;height:6px;background:#333;"></div>
<div class="r" style="left:851px;top:137px;width:7px;height:6px;background:#333;"></div>
<div class="r" style="left:851px;top:150px;width:7px;height:7px;background:#383838;"></div>
<div class="r" style="left:851px;top:170px;width:7px;height:17px;background:#575757;"></div>
<div class="r" style="left:851px;top:200px;width:7px;height:17px;background:#252525;"></div>
<div class="t" style="left:855.0px;top:202.5px;font-size:9px;line-height:12px;color:#ddd;">E</div>
<div class="r" style="left:851px;top:262px;width:74px;height:285px;background:#474747;"></div>
<div class="r" style="left:925px;top:262px;width:18px;height:285px;background:#484848;"></div>
<div class="r" style="left:934.5px;top:262px;width:3.5px;height:111.5px;background:#5a5a5a;"></div>
<div class="r" style="left:934.5px;top:373.5px;width:3.5px;height:173.5px;background:#3a3a3a;"></div>
<div class="r" style="left:851px;top:262px;width:73px;height:90.5px;background:#484848;border-right:1px solid #3b3b3b;border-bottom:1px solid #3b3b3b;box-sizing:border-box;"></div>
<div class="t" style="left:851.0px;top:260.0px;font-size:11px;line-height:14px;color:#e0e0e0;transform:scaleX(0.7218);transform-origin:0 50%;">ime:</div>
<div class="r" style="left:872px;top:262px;width:47px;height:10.5px;background:#4f4f4f;"></div>
<div class="t" style="left:875.0px;top:260.0px;font-size:10.5px;line-height:14px;color:#7a7a7a;">1</div>
<svg style="left:911px;top:262px" width="7" height="10" viewBox="0 0 7 10"><path d="M0.5 4L3.5 0.8L6.5 4ZM0.5 6L3.5 9.2L6.5 6Z" fill="#888"/></svg><div class="r" style="left:851px;top:296px;width:18.5px;height:11px;background:#5e5e5e;"></div>
<svg style="left:861.5px;top:296.5px" width="7" height="10" viewBox="0 0 7 10"><path d="M0.5 4L3.5 0.8L6.5 4ZM0.5 6L3.5 9.2L6.5 6Z" fill="#eee"/></svg><div class="r" style="left:851px;top:315.5px;width:18.5px;height:10.5px;background:#535353;"></div>
<svg style="left:861.5px;top:316px" width="7" height="10" viewBox="0 0 7 10"><path d="M0.5 4L3.5 0.8L6.5 4ZM0.5 6L3.5 9.2L6.5 6Z" fill="#909090"/></svg><div class="r" style="left:851px;top:332px;width:68px;height:15px;background:#3a3a3a;border:1.5px solid #f2f2f2;border-left:none;box-sizing:border-box;"></div>
<div class="r" style="left:851px;top:362.5px;width:73px;height:32px;background:#484848;border:1px solid #3b3b3b;border-left:none;box-sizing:border-box;"></div>
<div class="t" style="left:851.0px;top:370.4px;font-size:11px;line-height:14px;color:#e6e6e6;transform:scaleX(0.7557);transform-origin:0 50%;">egion Selected</div>
<div class="r" style="left:851px;top:405.5px;width:73.5px;height:89px;background:#484848;border:1px solid #3b3b3b;border-left:none;box-sizing:border-box;"></div>
<div class="t" style="left:851.5px;top:414.4px;font-size:11px;line-height:14px;color:#e6e6e6;transform:scaleX(0.6966);transform-origin:0 50%;">(mm):</div>
<div class="r" style="left:876.5px;top:415.5px;width:42.5px;height:12px;background:#5e5e5e;"></div>
<div class="t" style="left:879.0px;top:414.6px;font-size:11px;line-height:14px;color:#e6e6e6;transform:scaleX(0.8875);transform-origin:0 50%;">36,0</div>
<svg style="left:911px;top:416.5px" width="7" height="10" viewBox="0 0 7 10"><path d="M0.5 4L3.5 0.8L6.5 4ZM0.5 6L3.5 9.2L6.5 6Z" fill="#eee"/></svg><div class="r" style="left:851px;top:436px;width:3.5px;height:13px;background:#5e5e5e;border-radius:0 2px 2px 0;"></div>
<div class="r" style="left:851px;top:453.5px;width:3.5px;height:13px;background:#5e5e5e;border-radius:0 2px 2px 0;"></div>
<div class="r" style="left:860.5px;top:436px;width:58px;height:13px;background:#5e5e5e;border-radius:2px;"></div>
<div class="t" style="left:872.0px;top:435.6px;font-size:11px;line-height:14px;color:#e6e6e6;transform:scaleX(0.8293);transform-origin:0 50%;">720x486</div>
<div class="r" style="left:860.5px;top:453.5px;width:58px;height:13px;background:#5e5e5e;border-radius:2px;"></div>
<div class="t" style="left:871.5px;top:453.2px;font-size:11px;line-height:14px;color:#e6e6e6;transform:scaleX(0.8530);transform-origin:0 50%;">800x600</div>
<div class="t" style="left:852.0px;top:473.5px;font-size:11px;line-height:14px;color:#e6e6e6;">:</div>
<div class="r" style="left:862px;top:475px;width:43px;height:11px;background:#5e5e5e;"></div>
<div class="t" style="left:865.0px;top:473.6px;font-size:11px;line-height:14px;color:#e6e6e6;transform:scaleX(0.8502);transform-origin:0 50%;">1,0</div>
<svg style="left:897px;top:475.5px" width="7" height="10" viewBox="0 0 7 10"><path d="M0.5 4L3.5 0.8L6.5 4ZM0.5 6L3.5 9.2L6.5 6Z" fill="#eee"/></svg><div class="r" style="left:908px;top:475px;width:9.5px;height:11px;background:#3a3a8a;border-radius:1px;"></div>
<svg style="left:908px;top:475px" width="10" height="11" viewBox="0 0 10 11"><rect x="2.2" y="5" width="5.6" height="4.2" fill="#b9b9f0"/><path d="M3.2 5V3.8a1.8 1.8 0 0 1 3.6 0V5" stroke="#b9b9f0" stroke-width="1.1" fill="none"/></svg><div class="r" style="left:851px;top:504.5px;width:73.5px;height:42.5px;background:#484848;border:1px solid #3b3b3b;border-left:none;border-bottom:none;box-sizing:border-box;"></div>
<div class="t" style="left:851.0px;top:514.4px;font-size:11px;line-height:14px;color:#e6e6e6;transform:scaleX(0.8053);transform-origin:0 50%;">eometry</div>
<div class="t" style="left:851.0px;top:531.6px;font-size:11px;line-height:14px;color:#e6e6e6;transform:scaleX(0.7957);transform-origin:0 50%;">ows as Points</div>
<div class="r" style="left:7px;top:101px;width:844px;height:455px;background:#2b2b2b;box-shadow:0 0 7px rgba(0,0,0,.55);"></div>
<div class="r" style="left:7px;top:101px;width:844px;height:25px;background:#fff;"></div>
<svg style="left:13px;top:106px" width="14" height="14" viewBox="0 0 14 14"><rect width="14" height="14" fill="#111"/><circle cx="7" cy="7" r="4.6" stroke="#fff" stroke-width="1.3" fill="none"/><path d="M4.6 5.2L6.6 9.2L10.6 3.6" stroke="#fff" stroke-width="1.4" fill="none"/></svg><div class="t" style="left:31.0px;top:106.3px;font-size:11px;line-height:14px;color:#111;transform:scaleX(0.8744);transform-origin:0 50%;">V-Ray frame buffer - [12% of 8000 x 3600]</div>
<div class="r" style="left:751.5px;top:112.8px;width:9px;height:1.2px;background:#222;"></div>
<div class="r" style="left:788.5px;top:108.5px;width:9px;height:9px;background:transparent;border:1.3px solid #222;box-sizing:border-box;"></div>
<svg style="left:825px;top:107px" width="12" height="12" viewBox="0 0 12 12"><path d="M1.2 1.2L10.8 10.8M10.8 1.2L1.2 10.8" stroke="#222" stroke-width="1.3"/></svg><div class="r" style="left:7px;top:126px;width:844px;height:25px;background:#444;"></div>
<div class="r" style="left:7px;top:125.7px;width:844px;height:1px;background:#222;"></div>
<div class="r" style="left:7px;top:149.5px;width:844px;height:1.5px;background:#4e4e4e;"></div>
<div class="r" style="left:7px;top:151px;width:844px;height:6.3px;background:#2a2a2a;"></div>
<div class="r" style="left:7px;top:157.3px;width:844px;height:2.7px;background:#0e0e0e;"></div>
<div class="r" style="left:7px;top:160px;width:9px;height:378px;background:#2e2e2e;"></div>
<div class="r" style="left:843px;top:160px;width:8px;height:378px;background:#2e2e2e;"></div>
<div class="r" style="left:8px;top:130px;width:122px;height:16.5px;background:#5c5c5c;"></div>
<div class="t" style="left:10.8px;top:131.6px;font-size:10.5px;line-height:14px;color:#f0f0f0;transform:scaleX(0.7743);transform-origin:0 50%;">RGB color</div>
<svg style="left:118px;top:136px" width="8" height="6" viewBox="0 0 8 6"><path d="M0.5 0.8H7.5L4 5.2Z" fill="#f4f4f4"/></svg><svg style="left:136px;top:130px" width="16" height="16" viewBox="0 0 16 16"><circle cx="5.3" cy="5.5" r="3.6" fill="#e58b8b"/><circle cx="10.6" cy="5.5" r="3.6" fill="#7ec77e"/><circle cx="8" cy="10.3" r="3.6" fill="#7f8fd8"/></svg><div class="r" style="left:158px;top:128px;width:19.5px;height:20px;background:#5a8ccd;border-radius:3px;"></div>
<div class="t" style="left:164.4px;top:132.4px;font-size:9.5px;line-height:12px;color:#d8708c;">R</div>
<div class="r" style="left:183px;top:128px;width:19.5px;height:20px;background:#5a8ccd;border-radius:3px;"></div>
<div class="t" style="left:189.4px;top:132.4px;font-size:9.5px;line-height:12px;color:#7fae62;">G</div>
<div class="r" style="left:208px;top:128px;width:19.5px;height:20px;background:#5a8ccd;border-radius:3px;"></div>
<div class="t" style="left:214.4px;top:132.4px;font-size:9.5px;line-height:12px;color:#dfe8f6;">B</div>
<svg style="left:235px;top:131px" width="14" height="14" viewBox="0 0 14 14"><circle cx="7" cy="7" r="6.2" fill="#fdfdfd"/></svg><svg style="left:260px;top:131px" width="14" height="14" viewBox="0 0 14 14"><defs><radialGradient id="gs" cx=".4" cy=".35" r=".7"><stop offset="0" stop-color="#ddd"/><stop offset="1" stop-color="#666"/></radialGradient></defs><circle cx="7" cy="7" r="6" fill="url(#gs)"/></svg><svg style="left:285px;top:130px" width="17" height="18" viewBox="0 0 17 18"><path d="M1 1h11l2 2v11H1z" fill="#5a7fc0"/><rect x="3" y="1" width="8" height="5" fill="#e8eef8"/><rect x="3" y="8.5" width="9" height="5.5" fill="#c9d6ee"/><path d="M17 13v5h-5z" fill="#ddd"/></svg><svg style="left:309px;top:131px" width="16" height="14" viewBox="0 0 16 14"><path d="M1 3h5l1.5 1.5H14V12H1z" fill="#d8a24a"/><path d="M2.5 6H15.5L13.5 12H1z" fill="#f1cf86"/></svg><svg style="left:335px;top:130px" width="13" height="16" viewBox="0 0 13 16"><rect x="1" y="3" width="11" height="12.5" fill="#f4e7c4"/><rect x="4" y="1" width="5" height="4" fill="#d8d8d8"/><path d="M3 8h7M3 10.5h7M3 13h5" stroke="#a89a70" stroke-width="1"/></svg><svg style="left:360px;top:132px" width="13" height="13" viewBox="0 0 13 13"><circle cx="6.5" cy="6.5" r="6" fill="#8a8a8a"/><path d="M4 4l5 5M9 4l-5 5" stroke="#b5b5b5" stroke-width="1.6"/></svg><svg style="left:383px;top:130px" width="16" height="16" viewBox="0 0 16 16"><rect x="1" y="1.5" width="10" height="8.5" fill="#4b68b0" stroke="#dfe5f5" stroke-width="1.2"/><rect x="7" y="7" width="8" height="7" fill="#7f8fc6" stroke="#dfe5f5" stroke-width="1"/><path d="M4 4l6 5" stroke="#fff" stroke-width="1.2"/></svg><svg style="left:408px;top:130px" width="16" height="17" viewBox="0 0 16 17"><g fill="#f2ead8" stroke="#a06a50" stroke-width=".6"><rect x="6" y="1" width="4" height="4"/><rect x="6" y="11.5" width="4" height="4"/><rect x="1" y="6" width="4" height="4"/><rect x="11" y="6" width="4" height="4"/><rect x="6" y="6" width="4" height="4"/></g><path d="M9 8l5 6-2.4-.3-1.2 2z" fill="#fff" stroke="#333" stroke-width=".5"/></svg><svg style="left:433px;top:131px" width="18" height="15" viewBox="0 0 18 15"><path d="M3.2 6.2C3.2 4 5.4 3 8 3s4.8 1 4.8 3.2c.5 2.2-.6 4.4-2 5.3H5.200c-1.400-.9-2.500-3.100-2-5.300z" fill="#c8d4e4"/><path d="M3.400 6.500L.4 4.800 3 9.300zM12.600 6c2.400-1.600 3.600.6 2 2.400-.8.900-1.800 1.300-2.600 1.400" fill="none" stroke="#c8d4e4" stroke-width="1.2"/><circle cx="8" cy="2.300" r="1" fill="#c8d4e4"/><path d="M3.400 6.500L.4 4.800 3 9.300z" fill="#c8d4e4"/><rect x="8.5" y="7.5" width="7.5" height="6" fill="none" stroke="#e0702a" stroke-width="1.4"/></svg><svg style="left:458px;top:131px" width="16" height="14.5" viewBox="0 0 16 14.5"><rect x=".5" y=".5" width="15" height="13.5" fill="#1f3f78" stroke="#6f9ad8" stroke-width="1"/><path d="M5.3 5L3 7.2l2.300 2.200zM10.700 5L13 7.200l-2.300 2.200z" fill="#cfe0f8"/><path d="M7 4.800v4.800M9 4.800v4.800" stroke="#cfe0f8" stroke-width="1"/></svg><svg style="left:781px;top:131px" width="17" height="15" viewBox="0 0 17 15"><path d="M3.2 6.2C3.2 4 5.4 3 8 3s4.8 1 4.8 3.2c.5 2.2-.6 4.4-2 5.3H5.200c-1.400-.9-2.500-3.100-2-5.300z" fill="#b8b8b8"/><path d="M3.400 6.500L.4 4.800 3 9.300zM12.600 6c2.400-1.600 3.600.6 2 2.400-.8.900-1.800 1.300-2.600 1.400" fill="none" stroke="#b8b8b8" stroke-width="1.2"/><circle cx="8" cy="2.300" r="1" fill="#b8b8b8"/><path d="M3.400 6.500L.4 4.800 3 9.300z" fill="#b8b8b8"/><path d="M9 11l5 2-3 2z" fill="#ddd"/></svg><svg style="left:806px;top:131px" width="15" height="15" viewBox="0 0 15 15"><path d="M4.600 .5h5.800l4.100 4.100v5.800l-4.100 4.100H4.600L.5 10.400V4.600z" fill="#cf2a2a" stroke="#f0b0b0" stroke-width=".8"/></svg><div class="t" style="left:808.3px;top:135.6px;font-size:4.6px;line-height:6px;color:#fff;transform:scaleX(0.8360);transform-origin:0 50%;font-weight:bold;">STOP</div>
<svg style="left:830px;top:131px" width="17" height="15" viewBox="0 0 17 15"><path d="M3.2 6.2C3.2 4 5.4 3 8 3s4.8 1 4.8 3.2c.5 2.2-.6 4.4-2 5.3H5.200c-1.400-.9-2.500-3.100-2-5.300z" fill="#c4c4c4"/><path d="M3.400 6.500L.4 4.800 3 9.300zM12.600 6c2.400-1.600 3.600.6 2 2.400-.8.900-1.800 1.300-2.600 1.400" fill="none" stroke="#c4c4c4" stroke-width="1.2"/><circle cx="8" cy="2.300" r="1" fill="#c4c4c4"/><path d="M3.400 6.500L.4 4.800 3 9.300z" fill="#c4c4c4"/></svg><div class="r" style="left:7px;top:531px;width:844px;height:9px;background:#262626;"></div>
<div class="r" style="left:7px;top:540px;width:844px;height:16px;background:#3d3d3d;"></div>
<div class="r" style="left:7px;top:540px;width:844px;height:1.3px;background:#474747;"></div>
<div class="r" style="left:7px;top:554.5px;width:844px;height:1.5px;background:#474747;"></div>
<div class="r" style="left:273.5px;top:542px;width:472.2px;height:12.3px;background:#656565;"></div>
<div class="r" style="left:745.7px;top:542px;width:69.8px;height:12.3px;background:#222;"></div>
<div class="t" style="left:275.5px;top:541.2px;font-size:10.5px;line-height:14px;color:#fff;transform:scaleX(0.8723);transform-origin:0 50%;">Rendering image (pass 1) [00:00:45,5] [00:00:52,4 est]</div>
<svg style="left:820.5px;top:542.5px" width="11" height="11" viewBox="0 0 11 11"><rect x=".8" y=".8" width="9.400" height="9.400" fill="#1d4a44" stroke="#9ad0e8" stroke-width="1.2"/></svg><svg style="left:837px;top:543px" width="10" height="10" viewBox="0 0 10 10"><path d="M1 1.500l4 3.200 4-3.200M1 5.500l4 3.200 4-3.200" stroke="#e8e8e8" stroke-width="1.3" fill="none"/></svg><svg style="left:9.3px;top:543.1px;opacity:.88" width="10.8" height="10.8" viewBox="0 0 12 12"><rect x="1" y="1.500" width="10" height="9" fill="#c9c9c9"/><rect x="1" y="1.500" width="10" height="2.200" fill="#8a8a8a"/></svg><svg style="left:25.75px;top:543.1px;opacity:.88" width="10.8" height="10.8" viewBox="0 0 12 12"><rect x=".5" y=".5" width="11" height="11" rx="1.500" fill="#5b8fd2"/><rect x="2.500" y="3" width="7" height="2" fill="#d05a6a"/><rect x="2.500" y="5.300" width="7" height="2" fill="#5ab070"/><rect x="2.500" y="7.600" width="7" height="2" fill="#5070d0"/></svg><svg style="left:42.2px;top:543.1px;opacity:.88" width="10.8" height="10.8" viewBox="0 0 12 12"><circle cx="6" cy="6" r="5.500" fill="#8fa6c8"/><rect x="5.200" y="5" width="1.600" height="4" fill="#fff"/><circle cx="6" cy="3.300" r="1" fill="#fff"/></svg><svg style="left:58.65px;top:543.1px;opacity:.88" width="10.8" height="10.8" viewBox="0 0 12 12"><rect x="0" y="1" width="4" height="10" fill="#d8552a"/><rect x="4" y="1" width="4" height="10" fill="#e8a080"/><rect x="8" y="1" width="4" height="10" fill="#48b8d0"/></svg><svg style="left:75.1px;top:543.1px;opacity:.88" width="10.8" height="10.8" viewBox="0 0 12 12"><rect x="0" y="1.500" width="12" height="9" fill="#333"/><path d="M1 3h3M5 3h2M8 3h3" stroke="#ccc"/><path d="M1 6h2" stroke="#e03030" stroke-width="2"/><path d="M3.500 6h2" stroke="#e0d030" stroke-width="2"/><path d="M6 6h2" stroke="#30c040" stroke-width="2"/><path d="M8.500 6h2.500" stroke="#3060e0" stroke-width="2"/><path d="M1 9h4" stroke="#c040c0" stroke-width="1.500"/><path d="M6 9h5" stroke="#40c0c0" stroke-width="1.500"/></svg><svg style="left:91.55px;top:543.1px;opacity:.88" width="10.8" height="10.8" viewBox="0 0 12 12"><rect x="0" y="1.500" width="12" height="9" fill="#333"/><path d="M1 4h4" stroke="#e0c030" stroke-width="1.600"/><path d="M6 4h5" stroke="#40c0a0" stroke-width="1.600"/><path d="M1 7h6" stroke="#e05030" stroke-width="1.600"/><path d="M8 7h3" stroke="#e0c030" stroke-width="1.600"/></svg><svg style="left:108px;top:543.1px;opacity:.88" width="10.8" height="10.8" viewBox="0 0 12 12"><path d="M0 11V5l2-2 2 4 2-5 2 5 2-3 2 2v5z" fill="#8c8c8c"/></svg><svg style="left:124.45px;top:543.1px;opacity:.88" width="10.8" height="10.8" viewBox="0 0 12 12"><rect x="0" y="1" width="12" height="10" fill="#555"/><path d="M0 11L12 1" stroke="#e0a030" stroke-width="1.200"/><path d="M0 8L9 1" stroke="#9090e0" stroke-width="1"/><path d="M3 11L12 4" stroke="#70c070" stroke-width="1"/></svg><svg style="left:140.9px;top:543.1px;opacity:.88" width="10.8" height="10.8" viewBox="0 0 12 12"><circle cx="6" cy="6" r="4" fill="none" stroke="#b8b8b8" stroke-width="2.200" stroke-dasharray="2.200 1.200"/></svg><svg style="left:157.35px;top:543.1px;opacity:.88" width="10.8" height="10.8" viewBox="0 0 12 12"><rect x="0" y="1" width="12" height="10" fill="#6aa0d8"/><path d="M0 11V7l4-2 4 2 4-1v5z" fill="#70b050"/><rect x="7.500" y="2" width="3" height="2.500" fill="#e8d860"/></svg><svg style="left:173.8px;top:543.1px;opacity:.88" width="10.8" height="10.8" viewBox="0 0 12 12"><rect x="0" y="0" width="12" height="12" rx="2" fill="#4f86cc"/><path d="M1.500 11C2 6 6 3.500 11 3.500" stroke="#fff" stroke-width="1.400" fill="none"/></svg><svg style="left:190.25px;top:543.1px;opacity:.88" width="10.8" height="10.8" viewBox="0 0 12 12"><rect x="0" y="1" width="12" height="10" rx="1" fill="#5a6a9a"/></svg><svg style="left:223.15px;top:543.1px;opacity:.88" width="10.8" height="10.8" viewBox="0 0 12 12"><path d="M1 2.500v7M11 2.500v7" stroke="#e07030" stroke-width="1.400"/><path d="M2.500 6h7M4 4.300L2.300 6 4 7.700M8 4.300L9.700 6 8 7.700" stroke="#e07030" stroke-width="1.100" fill="none"/></svg><svg style="left:239.6px;top:543.1px;opacity:.88" width="10.8" height="10.8" viewBox="0 0 12 12"><rect x="0.500" y="1" width="3" height="10" fill="#e04848"/><rect x="4.200" y="1" width="3" height="10" fill="#38b8c8"/><rect x="7.900" y="3" width="2.400" height="8" fill="#38b8c8"/></svg><svg style="left:256.05px;top:543.1px;opacity:.88" width="10.8" height="10.8" viewBox="0 0 12 12"><rect x=".5" y=".5" width="11" height="11" fill="#4a4a4a" stroke="#777" stroke-width="1"/><path d="M6 3v6M3 6h6M4 4l4 4M8 4l-4 4" stroke="#aaa" stroke-width=".8"/></svg><div class="t" style="left:190.9px;top:545.0px;font-size:5.5px;line-height:7px;color:#dfe6f5;transform:scaleX(0.8792);transform-origin:0 50%;font-weight:bold;">LUT</div>
<div class="t" style="left:207.7px;top:541.0px;font-size:11.5px;line-height:15px;color:#a8a8a8;font-weight:bold;">H</div>
<svg style="left:34.15px;top:551px" width="4" height="4" viewBox="0 0 4 4"><path d="M4 0v4H0z" fill="#e8e8e8"/></svg><svg style="left:182.2px;top:551px" width="4" height="4" viewBox="0 0 4 4"><path d="M4 0v4H0z" fill="#e8e8e8"/></svg><svg style="left:198.65px;top:551px" width="4" height="4" viewBox="0 0 4 4"><path d="M4 0v4H0z" fill="#e8e8e8"/></svg><svg style="left:248px;top:551px" width="4" height="4" viewBox="0 0 4 4"><path d="M4 0v4H0z" fill="#e8e8e8"/></svg><svg style="left:16px;top:159.500px" width="827" height="371.500" viewBox="16 159.500 827 371.500"><defs><linearGradient id="bgv" x1="0" y1="0" x2="0" y2="1"><stop offset="0" stop-color="#fefefe"/><stop offset=".45" stop-color="#fdfcfc"/><stop offset=".7" stop-color="#fbf7f4"/><stop offset="1" stop-color="#fbf7f4"/></linearGradient><filter id="rough" x="-5%" y="-5%" width="110%" height="110%"><feTurbulence type="fractalNoise" baseFrequency="0.85" numOctaves="1" seed="4" result="n"/><feDisplacementMap in="SourceGraphic" in2="n" scale="3.2" xChannelSelector="R" yChannelSelector="G"/></filter><filter id="rough2" x="-5%" y="-5%" width="110%" height="110%"><feTurbulence type="fractalNoise" baseFrequency="0.7" numOctaves="1" seed="9" result="n"/><feDisplacementMap in="SourceGraphic" in2="n" scale="4.500" xChannelSelector="R" yChannelSelector="G"/></filter></defs><rect x="16" y="159" width="827" height="373" fill="url(#bgv)"/><g filter="url(#rough)"><g><radialGradient id="g21" cx=".42" cy=".38" r=".65"><stop offset="0" stop-color="#d4cbcb"/><stop offset="1" stop-color="#c2b8b8"/></radialGradient><path d="M150.4 149.0L186.3 178.3M143.4 156.9L170.9 183.4M133.9 165.8L159.3 195.6M123.7 173.6L146.2 206.2M113.7 179.9L137.6 222.2M97.5 187.6L112.8 226.4M87.4 191.1L98.4 227.7M73.3 194.5L81.8 240.6M52.8 196.6L53.8 244.7M40.6 196.3L37.4 240.7M32.4 195.4L26.5 238.3M17.9 192.6L6.0 239.6M156.2 141.2L188.1 163.5M151.3 147.8L184.0 173.9M140.1 160.2L165.6 186.6M131.2 168.0L152.8 194.7M114.4 179.5L134.8 215.3M103.4 185.1L117.3 215.9M91.9 189.6L104.4 226.4M78.7 193.4L86.7 228.3M64.6 195.8L68.7 231.6M47.1 196.6L46.2 237.4M38.4 196.1L35.0 233.4M21.0 193.3L11.3 235.5" stroke="#a19fa1" stroke-width="1.1" fill="none"/><path d="M178.7 172.1L183.2 182.1L189.4 174.5ZM164.9 177.6L168.0 186.3L173.7 180.4ZM152.8 188.0L155.4 198.8L163.1 192.3ZM140.8 198.2L142.3 208.9L150.2 203.4ZM133.3 214.7L133.8 224.3L141.3 220.0ZM109.7 218.3L108.8 228.0L116.9 224.8ZM95.6 218.3L93.8 229.1L103.1 226.3ZM80.3 232.8L77.9 241.3L85.7 239.8ZM53.6 235.3L49.1 244.8L58.5 244.6ZM38.1 231.3L32.7 240.3L42.1 241.0ZM27.9 228.8L21.8 237.7L31.3 239.0ZM8.4 230.1L1.2 238.4L10.7 240.8ZM180.8 158.4L185.6 167.1L190.7 159.8ZM176.1 167.7L180.8 177.9L187.1 170.0ZM158.6 179.4L162.0 190.1L169.3 183.1ZM148.0 188.8L149.8 197.1L155.7 192.4ZM130.6 207.8L131.1 217.4L138.6 213.2ZM113.6 207.5L113.2 217.7L121.5 214.0ZM101.7 218.4L100.4 227.7L108.4 225.0ZM85.0 221.0L83.0 229.2L90.3 227.5ZM67.6 222.4L64.1 232.1L73.3 231.1ZM46.4 228.8L41.9 237.4L50.5 237.5ZM35.8 224.7L30.7 233.0L39.3 233.8ZM13.0 228.1L7.6 234.7L15.0 236.4Z" fill="#a19fa1"/><circle cx="50" cy="67" r="135" fill="url(#g21)"/><path d="M112.1 167.7L128.3 193.9M128.3 189.0a4.9 4.8 0 1 0 .1 0M71.3 171.1L76.9 198.2M76.9 194.3a3.9 3.5 0 1 0 .1 0M68.9 179.4L73.8 208.7M73.8 205.4a3.3 2.9 0 1 0 .1 0M108.3 165.7L123.5 191.4M123.5 187.5a3.9 3.1 0 1 0 .1 0M81.1 169.7L89.2 196.4M89.2 192.1a4.3 3.1 0 1 0 .1 0M54.7 166.2L55.9 192.0M55.9 188.6a3.4 2.6 0 1 0 .1 0M97.6 180.0L110.0 209.4M110.0 205.3a4.1 3.1 0 1 0 .1 0M37.8 180.6L34.6 210.3M34.6 205.8a4.5 4.1 0 1 0 .1 0M29.6 178.7L24.3 207.8M24.3 204.6a3.2 2.6 0 1 0 .1 0M40.7 171.7L38.3 199.0M38.3 193.7a5.2 4.5 0 1 0 .1 0M44.7 186.2L43.3 217.3M43.3 212.7a4.6 4.0 0 1 0 .1 0M66.6 178.4L70.9 207.4M70.9 203.8a3.6 3.1 0 1 0 .1 0M43.2 180.2L41.4 209.8M41.4 206.3a3.5 3.0 0 1 0 .1 0M34.6 193.5L30.5 226.5M30.5 221.4a5.1 4.6 0 1 0 .1 0M54.1 171.5L55.1 198.8M55.1 195.1a3.7 2.7 0 1 0 .1 0M70.3 188.5L75.6 220.1M75.6 215.6a4.5 3.4 0 1 0 .1 0" stroke="#a19fa1" stroke-width="1.1" fill="#a19fa1" fill-opacity=".8" stroke-opacity=".7"/><path d="M82.4 184.8h1.1M39.7 164.6h1.7M101.3 168.6h1.4M80.1 175.5h2.1M138.0 159.9h1.7M132.4 171.9h1.3M33.3 165.7h1.1M63.8 198.1h1.4M76.0 183.9h1.7M51.7 164.5h1.5M134.6 169.0h1.3M62.8 161.7h2.1M66.7 195.4h0.8M102.0 189.8h1.5M37.1 179.3h1.3M101.6 166.7h2.1M84.0 159.9h2.2M99.5 181.9h1.3M34.0 188.3h2.1M137.8 165.5h2.2M72.4 179.2h1.8M84.6 181.4h1.0M85.0 187.1h1.8M107.4 167.8h2.2M88.6 166.5h2.0M70.8 172.7h2.2M72.3 182.9h1.1M99.2 159.3h1.5M27.7 176.7h1.4M37.0 198.3h1.7M41.7 191.6h1.9M111.2 180.4h1.6M76.6 168.2h1.1M64.1 188.0h1.0M68.2 160.1h1.0M72.7 174.1h2.1M43.6 201.4h1.3M37.1 185.4h1.8M18.5 177.8h1.5M71.0 166.6h1.5M17.4 192.6h0.8M74.3 183.9h1.3M35.8 191.1h0.8M100.5 186.8h1.7M72.9 190.8h2.0M72.4 190.2h0.9M33.1 164.5h1.6M17.3 196.4h1.1M113.7 158.2h1.3M63.4 169.7h1.4M77.2 183.8h2.1M40.7 160.2h1.3M20.4 167.0h0.9M34.5 179.4h0.9M86.8 195.6h1.5M110.2 180.7h1.4M30.9 162.8h1.2M22.8 192.0h1.4M57.2 170.3h1.9M85.8 161.0h1.5M108.0 186.9h1.7M15.6 186.9h1.8M45.5 180.2h2.1M41.0 167.2h1.6M46.9 162.0h0.9M19.4 193.4h0.9M74.5 191.7h1.6M83.5 172.3h1.1M69.3 189.7h2.1M41.0 171.4h1.9M81.2 188.8h1.4M55.9 194.7h1.8M34.1 197.9h1.0M91.5 176.2h1.3M139.9 162.9h0.9M62.0 194.1h0.8M130.6 163.5h1.0M56.2 167.5h1.5M73.2 196.0h2.1M24.4 197.4h1.9M33.6 167.3h2.2M32.1 178.3h1.4M69.8 198.5h0.8M104.9 185.6h1.1M58.5 198.5h1.7M25.3 179.8h1.8M23.4 173.6h1.3M44.6 174.3h1.6M78.4 176.2h1.5M57.5 187.3h1.8M40.7 191.1h0.9M44.2 172.0h1.4M36.4 180.5h1.7M47.3 201.3h1.1M65.7 192.8h1.1M71.1 168.7h1.6M102.8 189.7h2.0M62.1 196.7h0.8M73.7 190.0h2.1M25.8 173.6h1.8M49.6 170.1h2.1M47.1 172.3h2.1M29.9 183.3h1.6M98.8 186.1h1.8M109.3 179.4h1.3M74.9 184.3h0.9M29.4 175.1h2.0M31.7 181.8h1.6M49.5 175.2h1.9M88.5 193.9h1.8M77.5 160.5h1.2M88.4 174.1h1.3M80.0 177.7h1.7M58.7 167.5h1.5M96.2 179.2h1.7M79.3 171.2h1.1M94.9 166.9h1.2M15.6 195.9h1.9M75.1 162.7h1.0M102.9 185.7h1.6M109.3 181.4h1.7M111.2 178.3h1.6M97.2 174.8h0.9M42.1 182.8h0.8M19.2 165.5h1.7M120.2 178.5h1.6M68.7 177.4h2.1M114.7 163.8h1.0M22.0 190.8h1.4M28.0 178.8h0.8M132.4 158.1h1.3M140.6 163.8h1.1M73.8 192.4h2.0M130.1 165.0h1.9M39.9 177.0h0.9M87.8 166.3h1.1M62.6 178.9h1.7M41.4 194.6h1.7M26.9 166.3h1.9M111.9 183.4h2.1M18.5 193.9h1.0M93.4 177.1h1.9M109.1 158.4h2.0M54.2 186.8h1.6M43.2 184.8h1.8M18.6 194.6h2.0M100.0 162.2h1.7M105.6 164.8h1.3M77.7 166.0h1.2M55.9 186.0h1.1M54.8 173.4h0.8M80.5 183.8h2.0M68.0 175.0h1.9M24.7 187.8h1.7M120.8 175.4h2.0M64.0 197.1h0.8M64.8 174.6h1.5M21.1 177.9h1.1M18.0 194.8h1.3M34.4 159.5h1.7M149.1 158.2h1.6M44.4 171.1h1.6M46.1 199.2h1.8M17.2 191.0h0.9M65.9 183.5h1.1M82.7 182.3h1.8M89.1 185.5h1.4M84.7 162.1h1.5M18.4 165.5h1.4M111.5 175.7h1.2M57.2 185.9h2.1M117.1 182.4h1.1M26.0 166.2h1.1M129.5 168.5h2.0M58.3 193.7h2.1M35.9 200.1h2.0M16.4 161.8h1.2M127.4 174.7h1.3M40.6 171.1h1.6M65.5 196.1h1.4M73.0 181.5h1.8M89.2 183.3h1.1M98.1 188.1h1.2M24.4 187.1h2.2M60.2 195.3h1.4M94.9 164.3h1.4M28.9 172.6h1.8M32.9 193.0h1.0M110.7 177.3h1.5M87.4 166.8h1.0M137.7 165.8h2.1M59.7 191.4h0.9M127.8 171.1h1.6M59.6 196.5h0.9M51.7 193.0h1.4M57.4 194.1h1.0M89.1 179.0h2.2M31.0 185.4h0.9M60.5 168.4h1.7M34.8 163.1h1.3M69.9 191.8h1.0M76.1 170.7h0.8M95.6 180.7h1.7M15.0 171.1h1.6M62.7 197.8h1.3M18.5 197.2h1.0M66.2 188.7h1.0M123.6 178.8h1.2M16.4 161.4h1.4M78.8 159.2h1.7M116.8 178.2h1.2M105.7 179.6h1.5M53.9 176.1h0.8M76.6 194.9h1.8M76.0 183.2h1.1M62.4 161.6h1.9M59.2 169.9h1.4M99.0 187.1h1.5M44.2 188.2h1.7M19.8 195.2h2.0M108.1 163.2h1.2M127.6 171.6h1.6M37.0 166.2h1.8M16.6 185.9h2.0M88.5 173.7h2.0M34.9 200.2h1.8M97.9 159.0h1.1M21.1 173.6h0.9M73.3 193.5h2.2M90.6 173.8h2.1M38.5 196.6h0.9M116.4 171.8h2.0M18.9 181.8h1.1M61.5 170.7h1.9M46.7 179.9h1.2M62.3 192.5h1.4M23.4 163.9h1.5M34.6 158.1h1.6M44.3 181.6h1.6M95.8 160.3h0.9M68.4 194.3h1.9M63.3 170.1h2.2M20.0 160.2h1.8M109.1 181.1h1.1M84.3 194.4h1.6M103.2 169.4h1.0M55.4 159.8h2.1M45.7 158.2h1.8M66.5 162.6h1.6M51.8 190.9h1.0M77.6 177.5h1.7M107.7 187.2h1.5M66.3 168.9h1.8M80.1 193.9h1.1M69.1 184.9h1.8M33.5 189.9h1.2M105.3 181.2h1.8M97.7 188.8h2.0M33.4 198.5h1.5M32.1 173.0h1.1M18.7 181.7h1.5M38.6 181.5h1.3M30.2 199.3h0.9M111.6 160.8h2.2M96.5 162.0h1.5M36.7 201.1h1.5M132.7 168.8h1.6M59.4 188.3h1.3M15.3 188.0h2.0M39.4 169.2h1.6M54.1 186.0h1.1M73.3 174.3h1.0M60.3 196.2h1.8M33.9 188.8h2.0M120.7 177.8h1.5M71.9 194.1h1.5M116.0 173.4h1.1M44.1 196.8h2.0M130.9 163.3h1.6M57.6 189.6h2.1M16.0 169.8h2.0M49.3 177.6h2.0M133.4 172.8h1.3M76.6 181.8h2.1M92.6 193.7h1.0M129.7 175.9h1.5M77.9 185.3h1.7M23.2 170.0h1.8M27.5 187.4h1.2M110.1 182.1h1.8M55.0 169.2h0.8M101.5 159.9h1.8M57.2 190.0h1.7M59.4 181.7h1.0M123.3 170.9h1.6M31.7 164.0h1.0M132.9 162.6h1.0M131.7 167.9h0.9M52.4 185.9h2.0M125.0 178.4h1.0M60.7 190.1h1.0M73.4 160.1h2.1M58.6 192.2h1.2M62.8 171.0h2.1M62.1 169.9h1.8M119.3 165.6h1.2M90.0 182.2h1.5M39.5 193.5h2.2M73.4 158.2h2.2M100.8 163.0h1.3M81.1 168.1h2.2M103.1 179.5h1.9M63.4 171.7h2.0M115.1 184.8h1.6M100.7 179.6h1.4M113.8 158.0h1.7M95.4 191.9h1.4M85.5 172.6h2.1M129.1 176.4h2.2M69.8 198.5h1.6M61.7 194.1h2.1M103.8 180.3h1.4M89.2 178.5h1.7M47.0 163.0h1.8M52.7 180.2h1.6M69.2 175.5h1.9M120.1 176.8h2.1M97.7 180.7h1.2M43.7 167.6h1.0M86.1 175.2h1.2M96.7 183.4h1.2M71.9 176.4h0.9M87.5 191.6h1.7M91.6 164.9h1.7M79.0 169.6h1.7M108.6 173.7h0.8M14.7 170.7h1.6M67.1 162.6h1.5M48.5 193.5h2.1M72.5 176.2h0.9M123.7 170.9h1.0M144.5 163.0h1.8M48.4 177.5h1.0M128.2 162.3h1.9M105.2 188.5h1.2M142.1 165.1h2.0M120.5 165.5h0.9M69.4 164.9h1.7M134.4 160.5h1.0M79.3 169.6h2.1M39.4 190.8h1.4M73.0 199.2h1.1M102.7 176.5h2.1M105.4 184.5h1.3M95.2 182.8h1.8M52.7 191.3h1.0M40.8 171.3h0.8M74.3 161.7h1.8M115.2 181.6h1.5M17.5 193.5h1.0M81.6 163.3h1.6M109.4 176.7h1.3M55.9 167.3h2.1M70.9 164.5h0.9M81.0 187.4h1.6M24.3 160.7h1.8M47.1 194.9h1.2M96.5 188.9h1.6M74.6 189.4h1.6M34.8 169.1h0.8M122.1 179.6h1.2M42.2 201.3h1.8M92.5 195.0h1.4M115.4 176.3h1.0M42.7 178.2h2.2M110.5 167.3h2.1M101.5 160.2h1.1M66.9 158.9h1.3M84.3 161.7h0.8M29.3 160.4h1.8M94.1 161.3h0.9M119.6 174.9h1.4M34.4 166.8h1.3M91.4 160.3h1.8M58.7 201.5h2.2M63.4 198.5h1.2M56.1 195.6h1.4M126.0 163.0h1.5M62.4 199.6h1.7M47.1 183.7h1.7M39.0 180.3h1.9M109.2 175.9h1.1M43.8 165.8h1.3M49.8 194.1h0.9M43.1 188.7h2.2M19.6 163.5h2.2M30.0 168.8h0.9M82.1 187.1h1.9M43.4 161.3h1.0M85.9 167.9h1.7M94.2 169.0h1.3M59.0 184.0h1.6M55.3 159.3h1.5M26.0 180.9h1.6M133.5 164.5h1.8M95.5 186.5h1.3M26.4 179.8h1.9M21.2 176.8h0.9M93.0 161.1h0.9M96.7 161.7h1.0M32.8 188.2h0.9M24.6 180.7h1.5M37.1 181.7h0.9M143.4 162.4h0.9M79.1 164.9h1.2M42.2 194.9h0.9M19.8 196.9h1.5M29.0 187.7h1.0M56.4 191.6h2.0M73.5 192.4h2.1" stroke="#f4f0f0" stroke-width="1.2" fill="none" opacity=".85"/><path d="M129.5 209.3h2.0M160.3 176.4h1.0M47.9 215.4h1.8M144.0 184.4h0.8M116.2 193.5h1.8M194.7 159.0h0.8M156.9 162.2h1.8M14.8 202.9h1.3M129.6 179.5h1.2M149.4 214.3h1.4M93.0 217.8h2.0M80.4 223.8h1.9M15.3 212.1h1.1M88.7 201.0h1.4M135.3 175.4h1.8M149.3 192.4h1.1M116.1 206.3h1.8M67.7 245.0h1.1M31.7 211.6h1.4M50.6 235.1h1.5M62.6 215.2h1.9M158.3 202.0h1.5M157.0 188.8h1.7M131.6 171.7h1.6M153.4 161.7h1.7M132.9 195.1h1.2M159.0 188.5h0.8M39.9 205.7h1.0M71.5 220.5h1.8M55.7 245.4h1.6M34.2 237.6h1.9M106.2 195.8h1.7M129.8 206.0h1.3M108.2 212.3h1.4M50.5 240.8h1.6M25.5 208.2h1.1M86.3 199.7h2.0M16.4 233.4h0.8M172.7 192.5h1.7M73.8 209.0h1.8M46.5 209.1h1.8M15.6 212.0h1.9M139.4 174.5h1.1M23.2 213.6h1.3M43.4 224.1h1.1M129.4 190.1h0.8M174.0 162.4h1.6M147.5 212.5h1.4M176.6 180.7h1.7M81.2 241.8h1.1M20.0 214.4h1.2M88.7 231.0h1.3M165.1 161.4h2.0M112.4 199.2h1.9M63.7 213.3h1.1M82.9 202.2h1.4M125.1 199.0h2.0M167.4 201.1h1.0M79.0 232.8h1.9M159.5 159.5h1.2M141.9 165.7h1.3M22.1 217.9h1.9M120.4 216.0h2.0M67.5 220.6h1.4M84.6 226.1h1.8M15.5 228.9h1.4M40.7 236.2h1.2M142.3 162.8h1.4M23.9 221.6h2.0M143.2 175.2h1.8M67.4 217.5h1.3M167.7 198.7h1.4M68.1 210.5h1.7M155.2 184.2h1.4M54.2 217.5h0.9M79.1 215.0h1.1M140.0 198.1h0.9M179.3 160.8h1.9M44.0 223.0h1.5M125.9 210.2h1.3M166.0 159.3h1.3M59.1 232.5h1.0M107.6 214.0h1.4M32.8 234.3h0.8M135.0 173.3h1.8M87.0 207.2h1.1M147.2 191.4h1.9M101.2 213.9h1.7M169.4 193.7h1.7M59.7 219.5h1.1" stroke="#6a6468" stroke-width="1.1" fill="none" opacity=".8"/></g><g><radialGradient id="g22" cx=".42" cy=".38" r=".65"><stop offset="0" stop-color="#cfcfd6"/><stop offset="1" stop-color="#b4b4c0"/></radialGradient><path d="M780.9 126.5L812.3 160.8M783.3 124.3L813.9 155.9M773.4 132.8L801.1 169.4M760.4 141.1L777.7 172.9M747.7 147.0L759.8 179.0M745.9 147.6L757.4 179.6M739.5 149.7L749.6 184.9M732.6 151.4L738.8 180.8M728.1 152.3L734.2 188.3M711.3 153.7L711.4 200.1M712.6 153.7L713.1 183.9M709.0 153.7L708.3 192.4M699.1 153.0L695.0 187.9M696.5 152.7L691.1 190.8M679.5 148.8L669.7 179.5M681.8 149.5L671.6 184.2M661.7 141.2L644.0 173.8M661.3 141.0L643.0 174.6M648.3 132.6L622.6 166.4M645.9 130.7L620.4 162.3M639.6 125.2L609.4 157.0M777.9 129.2L802.7 158.5M763.4 139.4L781.0 169.5M765.1 138.4L779.4 161.8M764.0 139.1L782.0 169.4M746.4 147.5L755.7 173.2M740.4 149.4L748.6 177.4M738.7 149.9L748.3 184.6M737.4 150.3L745.6 181.7M727.7 152.3L734.3 192.5M720.3 153.3L722.7 180.1M707.7 153.6L706.8 181.8M699.9 153.1L696.7 182.4M693.4 152.2L687.2 188.4M689.7 151.5L684.0 179.1M685.4 150.5L678.7 176.9M666.4 143.6L651.7 174.4M662.7 141.8L648.4 169.0M654.8 137.1L639.1 161.6M653.1 136.0L638.6 157.6M757.3 142.8L773.2 174.8M753.8 144.4L763.7 166.2M752.9 144.8L762.3 166.1M734.4 151.0L740.4 176.8M735.8 150.7L744.3 185.3M719.7 153.3L722.8 189.1M723.4 152.9L726.9 182.1M707.3 153.6L706.4 179.0M707.2 153.6L706.3 178.3M691.3 151.8L685.6 181.1M693.4 152.2L688.8 179.0M685.4 150.5L678.9 176.2M678.0 148.3L667.9 178.2M666.0 143.4L650.8 175.0M666.8 143.8L654.9 168.9M651.6 134.9L634.6 159.2M649.2 133.2L630.5 158.4" stroke="#a3a1a5" stroke-width="1.5" fill="none"/><path d="M808.1 156.3L809.1 163.8L815.5 157.9ZM809.7 151.5L810.8 159.0L817.1 152.8ZM797.5 164.8L797.7 172.0L804.4 166.9ZM774.7 167.5L773.8 175.0L781.5 170.8ZM757.8 173.7L756.1 180.4L763.6 177.5ZM755.4 174.0L753.4 181.1L761.5 178.2ZM747.9 178.9L745.4 186.1L753.8 183.7ZM737.4 174.2L734.1 181.8L743.6 179.8ZM733.2 182.7L730.2 189.0L738.2 187.7ZM711.4 194.2L707.2 200.1L715.6 200.1ZM713.0 177.3L708.4 184.0L717.8 183.8ZM708.4 186.8L704.3 192.3L712.3 192.5ZM695.6 182.7L691.3 187.5L698.8 188.4ZM692.0 184.5L686.6 190.2L695.7 191.5ZM671.5 173.5L665.4 178.1L673.9 180.8ZM673.5 178.0L667.2 182.9L676.1 185.5ZM647.1 168.1L639.9 171.6L648.1 176.0ZM645.9 169.4L639.2 172.6L646.7 176.7ZM626.1 161.7L619.3 163.9L625.9 168.9ZM623.9 157.9L617.3 159.8L623.5 164.8ZM613.5 152.6L606.2 154.1L612.5 160.0ZM799.1 154.2L799.6 161.1L805.8 155.9ZM778.3 164.9L777.7 171.4L784.3 167.6ZM776.1 156.4L775.6 164.1L783.2 159.5ZM779.2 164.6L778.7 171.4L785.4 167.4ZM753.6 167.4L751.6 174.7L759.9 171.7ZM747.1 172.4L745.1 178.4L752.1 176.3ZM746.8 179.3L744.6 185.6L752.0 183.5ZM744.0 175.5L741.2 182.9L750.1 180.6ZM733.3 186.8L730.1 193.2L738.4 191.9ZM722.2 174.5L718.7 180.4L726.7 179.7ZM707.0 176.7L703.2 181.7L710.4 181.9ZM697.4 176.6L692.7 181.9L700.8 182.8ZM688.2 182.5L682.9 187.7L691.4 189.1ZM685.3 172.7L679.4 178.2L688.5 180.1ZM679.9 172.0L675.2 176.0L682.2 177.8ZM654.5 168.4L647.4 172.4L655.9 176.5ZM651.1 163.9L644.8 167.1L652.0 170.9ZM642.5 156.2L635.2 159.1L642.9 164.1ZM641.8 153.0L635.3 155.4L641.9 159.8ZM770.4 169.1L769.2 176.8L777.2 172.8ZM761.1 160.4L759.6 168.1L767.9 164.4ZM759.9 160.7L758.5 167.8L766.1 164.4ZM738.9 170.5L735.8 177.9L744.9 175.8ZM742.8 179.2L739.9 186.4L748.6 184.2ZM722.2 182.7L718.2 189.5L727.4 188.7ZM726.2 176.2L722.7 182.6L731.1 181.6ZM706.6 173.0L702.1 178.8L710.7 179.1ZM706.5 172.6L702.2 178.2L710.4 178.5ZM686.7 175.7L681.7 180.4L689.5 181.9ZM689.8 173.4L684.8 178.3L692.8 179.6ZM680.2 171.0L675.2 175.2L682.6 177.1ZM669.9 172.4L663.8 176.8L672.1 179.6ZM653.5 169.5L646.9 173.1L654.8 176.9ZM657.4 163.6L651.1 167.1L658.7 170.7ZM637.5 155.0L631.6 157.1L637.6 161.3ZM634.3 153.3L626.9 155.7L634.2 161.1Z" fill="#a3a1a5"/><circle cx="711" cy="50" r="108" fill="url(#g22)"/><path d="M808.5 158.4h1.9M784.4 174.5h2.0M699.7 188.5h1.1M647.4 177.3h1.0M756.6 165.0h1.2M753.9 185.0h1.7M647.7 169.4h1.8M647.6 167.8h1.0M769.6 164.6h1.4M673.3 171.6h1.1M754.2 177.2h1.0M633.6 169.7h0.8M687.4 160.0h1.7M732.2 186.2h0.9M614.2 160.6h1.6M726.8 191.7h1.5M797.6 160.0h1.8M676.5 177.7h1.2M693.1 198.0h1.5M698.6 170.0h1.0M614.2 158.8h1.4M667.8 165.8h1.5M660.8 192.1h1.7M751.3 159.6h1.4M793.5 160.6h2.0M775.8 166.8h1.3M699.9 169.7h1.6M725.5 182.8h2.0M685.2 190.3h1.8M641.7 180.4h1.5M681.5 187.7h1.6M712.3 159.5h1.6M678.5 172.1h1.4M655.8 174.9h1.8M697.4 175.6h0.9M643.9 183.8h1.1M627.9 159.2h1.1M787.8 179.7h1.4M719.4 183.7h0.9M693.6 163.3h1.5M638.3 178.1h1.9M698.8 172.6h1.0M737.3 186.6h1.6M645.2 159.5h1.8M737.3 180.1h0.9M775.2 160.1h1.9M774.7 159.4h1.3M655.2 166.5h1.0M746.7 170.5h1.8M748.4 173.1h1.2M763.5 162.6h1.8M663.9 181.9h1.4M730.7 198.0h1.3M636.9 180.6h1.3M796.5 160.1h1.2M727.9 193.6h2.0M780.1 179.8h0.9M746.2 167.8h1.8M708.6 193.9h1.0M665.1 171.4h1.7M683.1 182.3h1.0M662.4 172.5h1.8M704.9 185.8h1.6M741.6 179.8h0.9M678.3 169.2h1.0M713.7 163.4h0.8M709.9 188.6h1.8M796.2 170.4h2.0M734.3 160.9h0.9M755.8 162.7h1.8M731.9 164.3h1.6M662.4 167.4h0.9M752.8 192.4h1.7M743.9 169.1h0.9M769.9 173.1h1.0M725.7 186.5h1.2M700.6 181.0h1.6M698.9 186.5h1.3M681.8 183.0h1.4M704.0 158.5h1.4M651.6 185.4h1.4M787.1 173.0h1.6M752.1 170.9h0.8M793.1 160.4h1.3M734.2 164.0h1.0M677.6 184.3h1.4M624.3 172.6h1.2M776.3 163.6h1.1M670.2 188.4h1.4M779.6 170.8h2.0M647.8 161.7h1.5M618.1 168.5h1.2M719.6 165.6h1.9M679.7 174.6h1.5M677.9 162.4h1.3M742.5 171.2h1.6M765.4 162.6h1.8M724.2 199.3h1.3M725.3 162.8h1.5M752.7 182.9h2.0M708.9 181.5h1.2M735.5 175.0h1.2M716.7 170.0h0.9M653.0 184.2h0.9M748.8 172.2h1.4M744.5 176.0h1.1M634.9 161.6h1.4M670.0 170.3h0.9M676.3 191.3h1.9M622.0 165.6h1.4M674.8 195.3h1.7M709.7 181.4h1.9M677.4 160.4h1.4M714.2 187.7h1.1M741.0 175.7h1.2M695.8 162.3h0.9M767.2 164.8h1.6M686.8 197.7h1.0M751.8 166.4h1.4M800.5 163.5h1.9M737.2 175.3h1.0M673.9 158.2h1.3M632.7 175.8h1.4M810.5 160.5h1.0M639.8 177.0h1.6M652.7 165.0h1.8M678.4 188.2h0.9M732.0 183.7h1.1M790.7 159.9h1.3M658.7 173.1h1.0M793.7 174.7h1.8M648.9 159.7h1.6M649.6 181.2h1.6M674.1 196.0h1.0M748.4 184.0h1.2M635.7 158.7h1.2M700.1 181.2h1.8M655.0 169.5h1.3M679.7 192.4h1.5M781.7 163.4h1.4M706.6 166.9h1.2M692.4 163.3h1.3M666.4 187.4h0.9M638.4 179.0h1.7M707.9 175.8h1.2M779.4 175.8h1.6M789.3 177.4h1.9M662.1 187.3h1.8M668.7 164.3h1.8M679.3 180.1h1.6M661.0 164.8h1.4M765.8 182.1h1.1M667.9 179.1h1.5M639.2 181.8h1.8M758.0 169.0h1.7M698.4 159.3h1.6M647.9 170.0h1.7M732.0 159.7h0.9M725.3 170.6h0.9M762.5 171.7h1.7M745.2 171.5h1.4M751.5 162.6h1.8M730.6 181.6h1.4M686.0 167.7h1.2M655.2 176.3h1.9M659.1 169.6h1.7M632.7 172.1h1.9M747.1 158.7h1.4M663.4 187.1h1.8M676.2 188.7h1.0M618.6 160.6h1.6M734.7 181.6h0.9M730.1 177.0h1.4M718.7 168.5h1.3M651.4 177.6h1.5M736.4 183.0h1.9M748.1 159.1h1.2M725.4 179.6h1.5M683.7 180.4h1.9M796.6 158.7h1.5M714.1 164.8h1.4M686.7 165.4h1.3M765.9 165.5h1.0M716.8 162.3h0.8M729.6 183.7h1.3M759.2 189.6h0.9M697.5 158.9h1.9M636.0 179.1h1.9M749.2 165.8h1.8M760.8 183.8h1.9M778.9 172.4h1.0M731.2 180.5h1.3M709.4 193.5h2.0M655.6 160.0h1.0M735.8 178.7h0.9M728.4 172.1h1.9M721.9 159.0h1.9M764.8 190.6h1.3M645.7 162.9h1.1M687.7 158.7h1.1M766.4 159.0h1.4M720.0 191.4h1.5M796.1 160.6h1.8M679.3 179.3h1.1M723.3 163.3h1.7M649.6 171.0h1.9M721.3 195.1h1.6M703.1 188.9h1.1M739.5 185.1h0.9M709.1 187.9h0.8M784.3 176.2h1.9M729.1 166.9h1.9M696.6 174.1h1.0M724.3 192.1h1.0M674.0 181.7h1.5M775.6 163.0h1.7M715.4 169.3h1.5M704.5 168.4h1.9M679.1 195.1h0.9M705.8 168.7h1.2M780.4 172.1h1.9M765.2 176.9h0.9M710.3 180.0h1.3M698.9 159.1h1.1M726.6 187.0h1.6M754.0 158.1h1.6M671.8 176.2h1.1M722.7 161.2h1.0M679.6 179.4h1.8M747.3 167.8h1.1M639.3 181.2h0.9M746.2 190.1h1.7M730.2 195.6h1.1M695.4 158.9h1.9M699.5 188.5h1.1M781.8 179.7h1.8M744.4 158.2h1.9M749.4 179.4h1.3M703.0 173.5h2.0M749.4 196.0h1.4M772.0 177.3h1.5M663.1 165.8h0.9M730.3 199.1h1.6M696.0 200.0h1.8M617.8 164.6h0.9M750.6 194.4h1.7M720.9 163.9h1.1M634.1 164.8h1.1M727.6 175.4h0.9M736.7 187.6h1.8M774.9 170.7h1.7M722.3 163.3h1.7M778.6 161.2h1.7M707.2 179.2h0.9M678.1 183.6h1.4M733.1 168.6h1.1M795.7 161.4h1.8M677.1 190.9h1.0M745.7 162.0h1.2M724.5 199.9h1.1M730.9 173.8h1.1M690.1 184.1h2.0M656.1 172.7h0.9M742.9 159.2h1.8M670.0 166.0h0.9M770.2 178.6h1.4M726.1 160.2h0.8M657.5 162.4h1.4M807.4 158.7h1.9M702.8 162.3h0.9M633.4 166.2h1.5M776.5 181.4h1.1M759.4 159.7h1.6M671.4 186.0h1.5M798.2 162.2h0.9M740.9 162.8h1.2M744.4 182.2h1.4M678.5 161.0h2.0M699.5 161.3h1.2M702.0 181.7h0.9M678.3 158.3h1.1M732.7 176.9h1.3M747.5 166.6h1.5M716.3 175.0h1.7M690.4 165.4h1.8M628.5 169.9h1.2M694.1 162.6h1.5M751.9 161.3h0.8M710.8 187.3h1.0M691.1 158.9h1.5M726.0 195.5h1.3M737.9 174.0h1.5M764.1 163.2h1.6M663.4 177.4h1.9M728.7 195.3h1.8M725.7 159.5h1.1M750.2 175.1h1.8M739.6 173.2h1.5M739.6 163.6h1.2M688.4 175.9h1.6" stroke="#6e464e" stroke-width="1.1" fill="none" opacity=".8"/></g><g><radialGradient id="g23" cx=".42" cy=".38" r=".65"><stop offset="0" stop-color="#c9c9d2"/><stop offset="1" stop-color="#b0b0bc"/></radialGradient><path d="M635.7 257.4L640.4 257.7M635.5 258.5L639.7 259.6M634.5 260.7L637.5 262.9M633.2 262.0L635.5 265.1M631.9 262.8L633.3 266.2M629.6 263.2L629.6 267.4M627.7 263.0L626.7 266.5M625.8 262.0L623.2 265.5M624.2 260.3L620.8 262.4M623.6 259.1L619.6 260.5M623.3 257.2L619.6 257.3M623.6 254.9L619.6 253.4M624.5 253.2L621.5 250.9M625.7 252.1L622.9 248.5M627.2 251.2L625.9 247.8M629.3 250.8L629.1 246.5M631.3 251.0L632.4 247.2M633.0 251.8L635.5 248.1M634.4 253.1L637.3 250.9M635.5 255.3L639.9 254.0" stroke="#8b7f88" stroke-width="1" fill="none"/><path d="M638.2 257.6L640.3 259.1L640.5 256.4ZM637.8 259.1L639.4 260.7L640.0 258.4ZM636.1 261.8L636.9 263.8L638.2 262.0ZM634.3 263.5L634.5 265.8L636.5 264.4ZM632.5 264.2L632.1 266.7L634.5 265.7ZM629.6 265.3L628.3 267.4L631.0 267.4ZM627.3 264.4L625.4 266.1L627.9 266.9ZM624.4 263.8L622.1 264.7L624.2 266.2ZM622.6 261.3L620.1 261.2L621.5 263.5ZM621.6 259.8L619.2 259.2L620.0 261.7ZM621.5 257.2L619.6 256.1L619.6 258.5ZM621.4 254.1L620.0 252.3L619.2 254.5ZM622.9 252.0L622.2 250.0L620.9 251.8ZM624.0 249.9L623.8 247.8L622.0 249.1ZM626.5 249.3L626.8 247.4L624.9 248.2ZM629.2 248.7L630.5 246.5L627.8 246.6ZM631.9 248.9L633.5 247.5L631.3 246.8ZM634.4 249.8L636.6 248.8L634.5 247.4ZM635.6 252.2L638.1 251.9L636.5 249.8ZM638.1 254.5L640.2 255.1L639.6 252.9Z" fill="#8b7f88"/><circle cx="629.5" cy="257" r="6.5" fill="url(#g23)"/></g><g><radialGradient id="g24" cx=".42" cy=".38" r=".65"><stop offset="0" stop-color="#d2d2da"/><stop offset="1" stop-color="#b4b4c0"/></radialGradient><path d="M750.6 312.7L774.2 313.5M749.9 319.4L766.5 322.6M750.1 318.0L772.6 321.6M747.8 326.6L768.7 334.7M746.6 329.3L768.2 339.4M745.5 331.5L763.3 341.2M740.4 338.9L755.2 351.6M736.0 343.3L746.4 355.2M732.9 345.7L742.5 359.2M732.0 346.3L743.4 363.4M724.3 350.4L733.5 373.1M719.8 352.0L724.0 367.0M716.7 352.7L721.3 375.4M709.8 353.5L710.6 377.3M706.8 353.5L705.8 378.0M703.7 353.3L701.9 369.7M699.1 352.5L694.3 373.8M696.8 351.9L691.3 371.3M688.5 348.5L678.8 366.6M685.2 346.6L675.5 361.3M681.3 343.7L669.1 358.2M679.0 341.6L665.2 355.8M676.5 338.9L663.7 349.9M672.9 334.1L652.7 347.1M670.7 330.4L656.9 337.4M669.0 326.4L650.7 333.5M668.0 323.7L644.0 331.1M666.2 313.9L645.8 315.2M666.2 311.9L647.2 312.2M666.3 307.9L648.4 306.4M667.9 299.2L645.7 292.6M667.6 300.5L650.5 295.9M670.9 291.8L653.8 282.9M674.2 286.6L659.8 276.2M676.5 283.6L662.7 271.7M678.0 281.9L667.2 271.4M679.8 280.2L664.3 263.2M686.1 275.4L673.3 254.9M689.7 273.4L682.4 258.4M696.5 270.8L692.2 255.9M699.4 270.0L694.6 248.4M706.4 269.1L705.3 246.0M706.3 269.1L705.4 252.8M710.3 269.1L711.3 245.9M719.1 270.4L723.6 253.5M722.1 271.3L729.0 250.9M729.7 274.8L741.6 254.3M730.0 275.0L738.6 260.4M732.7 276.8L747.1 256.4M740.0 283.3L752.9 271.8M740.3 283.7L754.0 271.8M744.5 289.5L765.7 276.7M745.8 291.6L759.5 284.3M749.2 300.5L769.3 295.1M749.3 300.9L771.4 295.2M750.1 304.3L765.2 301.7M750.4 315.8L770.1 317.9M750.3 316.6L766.2 318.6M748.5 324.6L763.1 329.4M748.1 325.8L768.5 333.3M743.8 334.3L756.8 342.7M742.6 336.1L760.1 348.8M741.1 338.1L757.0 351.1M736.5 342.8L747.3 354.9M733.1 345.5L745.8 363.0M729.1 348.1L738.1 364.0M727.0 349.2L734.8 365.3M717.7 352.5L721.1 368.1M713.3 353.3L715.4 371.6M712.8 353.3L714.9 372.7M708.0 353.5L707.8 368.0M699.1 352.5L694.5 373.2M696.0 351.7L690.2 370.4M692.1 350.3L685.5 366.2M690.0 349.3L680.9 368.1M683.4 345.3L670.8 362.4M680.3 342.9L671.5 352.8M677.0 339.5L660.7 354.1M672.4 333.4L655.6 343.8M671.9 332.6L659.8 339.7M670.5 329.9L653.5 338.1M667.6 322.3L648.2 327.6M667.1 320.4L652.7 323.5M666.2 310.5L650.7 310.2M666.2 309.7L652.4 309.2M666.6 305.5L649.3 303.1M668.1 298.5L653.4 293.9M669.5 294.9L651.0 287.1M670.7 292.2L653.6 283.5M674.0 286.8L659.3 276.4M678.0 282.0L663.1 267.6M682.4 278.0L671.0 263.6M683.2 277.4L670.8 260.5M688.7 273.9L682.0 261.2M693.2 271.9L687.1 256.0M699.8 269.9L696.7 255.0M702.1 269.5L698.9 248.0M704.0 269.3L702.4 254.1M710.3 269.1L711.1 251.4M716.2 269.8L719.8 250.4M718.6 270.3L723.4 251.2M726.0 272.9L734.4 254.4M725.8 272.8L734.7 253.3M733.0 277.0L742.2 264.1M735.3 278.7L744.1 268.0M741.1 284.5L756.8 271.7M742.1 285.9L753.4 277.4M746.8 293.7L766.6 284.7M747.7 295.8L764.2 289.4M748.0 296.6L765.6 290.1M750.5 307.4L767.4 305.9M750.6 311.5L766.4 311.6" stroke="#88888f" stroke-width="1.1" fill="none"/><path d="M770.5 313.4L774.1 315.8L774.3 311.2ZM762.2 321.8L766.0 325.2L767.0 319.9ZM769.0 321.0L772.2 323.8L772.9 319.3ZM764.5 333.1L767.7 337.3L769.7 332.1ZM763.9 337.4L767.0 342.1L769.5 336.7ZM759.1 339.0L761.9 343.8L764.7 338.7ZM752.3 349.1L753.6 353.4L756.7 349.8ZM743.5 351.8L744.3 357.0L748.5 353.4ZM740.2 356.0L740.5 360.6L744.5 357.8ZM741.2 360.1L741.4 364.8L745.5 362.0ZM732.1 369.5L731.3 374.0L735.7 372.2ZM723.1 363.6L721.9 367.6L726.2 366.4ZM720.4 371.0L718.5 376.0L724.0 374.9ZM710.5 373.5L708.2 377.4L713.0 377.2ZM705.9 374.4L703.6 377.9L708.0 378.1ZM702.3 366.1L699.6 369.4L704.1 369.9ZM695.4 369.2L691.5 373.2L697.2 374.5ZM692.6 366.7L688.4 370.5L694.2 372.1ZM680.6 363.2L676.8 365.4L680.9 367.7ZM677.9 357.7L673.3 359.8L677.7 362.8ZM672.0 354.8L667.0 356.4L671.3 360.0ZM668.4 352.6L663.2 353.8L667.3 357.8ZM666.9 347.2L662.0 348.0L665.4 351.9ZM655.9 345.1L651.4 345.1L654.0 349.1ZM660.5 335.6L655.7 335.2L658.0 339.7ZM654.9 331.9L649.7 330.9L651.7 336.0ZM648.2 329.8L643.2 328.5L644.8 333.7ZM650.0 314.9L645.6 312.6L646.0 317.8ZM650.9 312.1L647.1 309.8L647.2 314.5ZM652.3 306.8L648.6 304.0L648.2 308.9ZM649.8 293.8L646.5 290.1L644.9 295.2ZM654.6 297.0L651.2 293.4L649.9 298.5ZM657.6 284.9L655.1 280.6L652.6 285.3ZM663.0 278.5L661.3 274.2L658.4 278.2ZM666.1 274.6L664.5 269.6L660.9 273.7ZM670.1 274.2L668.9 269.6L665.4 273.2ZM667.4 266.6L666.4 261.3L662.2 265.1ZM675.3 258.0L675.3 253.6L671.3 256.1ZM683.9 261.5L684.3 257.4L680.4 259.4ZM693.5 260.4L695.0 255.1L689.4 256.7ZM695.4 251.8L696.8 247.9L692.5 248.9ZM705.5 249.6L707.6 245.9L703.1 246.1ZM705.6 256.9L708.0 252.6L702.9 252.9ZM711.1 250.0L713.9 246.1L708.8 245.8ZM722.5 257.6L726.2 254.2L721.0 252.8ZM727.8 254.6L731.4 251.7L726.7 250.1ZM739.3 258.3L744.0 255.8L739.1 252.9ZM736.7 263.6L740.5 261.6L736.6 259.3ZM744.9 259.5L749.1 257.8L745.2 255.0ZM749.8 274.6L754.7 273.7L751.2 269.8ZM750.7 274.7L755.8 273.9L752.2 269.7ZM762.5 278.6L766.9 278.7L764.5 274.7ZM756.2 286.1L760.6 286.4L758.4 282.3ZM765.3 296.2L769.9 297.6L768.6 292.7ZM767.2 296.3L772.1 297.9L770.7 292.6ZM761.6 302.3L765.6 304.0L764.9 299.4ZM766.4 317.5L769.8 320.2L770.3 315.6ZM761.9 318.1L765.8 321.3L766.5 315.9ZM759.4 328.2L762.3 331.7L763.8 327.1ZM764.5 331.8L767.6 335.7L769.4 330.8ZM753.2 340.3L755.3 344.9L758.2 340.4ZM756.9 346.5L758.6 350.8L761.5 346.8ZM753.4 348.1L755.1 353.3L758.9 348.8ZM744.9 352.3L745.6 356.4L748.9 353.4ZM743.5 359.8L743.8 364.4L747.7 361.5ZM736.3 360.8L736.1 365.2L740.2 362.9ZM732.8 361.1L732.2 366.6L737.5 364.0ZM720.2 363.7L718.4 368.7L723.9 367.4ZM714.9 367.7L712.9 371.9L717.8 371.3ZM714.4 368.4L712.2 373.0L717.6 372.5ZM707.9 364.4L705.6 368.0L710.1 368.0ZM695.4 369.1L692.0 372.6L697.0 373.7ZM691.3 366.9L688.1 369.7L692.4 371.1ZM687.2 362.0L682.8 365.1L688.1 367.3ZM682.5 364.8L678.9 367.1L683.0 369.1ZM672.9 359.5L669.0 361.1L672.6 363.7ZM674.3 349.7L669.6 351.1L673.5 354.5ZM663.8 351.4L659.0 352.2L662.4 356.0ZM659.5 341.4L654.1 341.4L657.1 346.2ZM663.5 337.6L658.4 337.4L661.1 342.0ZM656.8 336.5L652.5 336.1L654.5 340.2ZM652.8 326.3L647.4 324.7L649.0 330.4ZM656.6 322.7L652.2 321.1L653.2 326.0ZM654.7 310.2L650.7 307.6L650.6 312.7ZM656.6 309.4L652.5 306.6L652.3 311.8ZM653.7 303.7L649.7 300.4L648.9 305.9ZM657.5 295.2L654.3 291.3L652.6 296.4ZM654.1 288.5L651.8 285.1L650.1 289.1ZM657.3 285.3L654.7 281.1L652.4 285.8ZM662.8 278.9L660.9 274.3L657.8 278.6ZM666.3 270.7L665.0 265.6L661.1 269.6ZM673.3 266.5L672.8 262.1L669.2 265.0ZM673.4 264.1L673.0 258.9L668.5 262.2ZM683.7 264.5L684.0 260.2L680.0 262.3ZM688.4 259.5L689.3 255.2L684.9 256.8ZM697.6 259.5L699.5 254.4L693.8 255.6ZM699.6 252.4L701.7 247.6L696.1 248.4ZM702.9 258.7L705.3 253.8L699.6 254.4ZM710.9 255.8L713.9 251.5L708.4 251.3ZM719.0 254.5L722.3 250.9L717.2 250.0ZM722.5 254.7L725.6 251.8L721.2 250.7ZM732.9 257.7L736.5 255.3L732.3 253.4ZM733.1 256.7L736.8 254.3L732.6 252.3ZM740.1 267.1L744.1 265.5L740.4 262.8ZM741.2 271.6L746.3 269.9L741.9 266.2ZM753.9 274.0L758.2 273.5L755.3 269.9ZM749.8 280.2L755.1 279.7L751.7 275.1ZM762.5 286.6L767.8 287.3L765.4 282.1ZM760.8 290.7L765.0 291.5L763.3 287.3ZM761.2 291.7L766.6 292.8L764.6 287.3ZM763.2 306.3L767.6 308.5L767.1 303.3ZM762.0 311.6L766.4 314.3L766.4 308.8Z" fill="#88888f"/><circle cx="708.4" cy="311.3" r="44" fill="url(#g24)"/><path d="M686.1 295.1L676.6 288.2M676.6 285.9a2.4 1.8 0 1 0 .1 0M722.2 329.4L728.1 337.2M728.1 334.1a3.1 2.9 0 1 0 .1 0M744.7 313.3L760.2 314.1M760.2 312.1a2.1 1.8 0 1 0 .1 0M743.3 292.2L758.2 284.1M758.2 281.1a3.0 3.0 0 1 0 .1 0M703.4 305.9L701.2 303.5M701.2 301.3a2.2 2.0 0 1 0 .1 0M675.5 288.7L661.4 279.1M661.4 277.0a2.1 2.0 0 1 0 .1 0M680.0 296.2L667.8 289.8M667.8 287.7a2.0 1.6 0 1 0 .1 0M672.2 308.0L656.8 306.7M656.8 303.9a2.7 2.4 0 1 0 .1 0M702.3 287.2L699.7 276.9M699.7 274.7a2.3 2.3 0 1 0 .1 0M693.4 283.8L687.0 272.1M687.0 269.1a3.1 2.9 0 1 0 .1 0M700.9 270.6L697.7 253.3M697.7 250.9a2.4 2.3 0 1 0 .1 0M684.2 298.6L673.9 293.2M673.9 290.8a2.4 1.7 0 1 0 .1 0M739.7 284.4L753.0 272.9M753.0 270.6a2.3 2.3 0 1 0 .1 0M727.8 332.1L736.0 340.9M736.0 337.8a3.1 2.8 0 1 0 .1 0M726.8 339.1L734.7 350.9M734.7 349.0a1.9 1.8 0 1 0 .1 0M679.8 293.8L667.6 286.3M667.6 283.6a2.7 2.0 0 1 0 .1 0M735.4 286.7L746.9 276.2M746.9 273.2a3.0 2.3 0 1 0 .1 0M713.4 346.5L715.5 361.5M715.5 358.5a3.0 2.6 0 1 0 .1 0M709.6 339.0L710.1 350.9M710.1 348.7a2.2 1.8 0 1 0 .1 0M741.7 302.5L755.9 298.8M755.9 296.6a2.1 2.1 0 1 0 .1 0M727.4 292.8L735.5 284.9M735.5 283.0a1.9 1.7 0 1 0 .1 0M701.7 324.6L698.8 330.3M698.8 327.3a3.0 2.5 0 1 0 .1 0M719.8 330.4L724.7 338.6M724.7 335.5a3.1 2.5 0 1 0 .1 0M687.8 315.0L678.9 316.6M678.9 314.6a2.0 1.5 0 1 0 .1 0M734.7 321.6L745.9 325.9M745.9 323.5a2.4 2.2 0 1 0 .1 0M727.9 277.5L736.3 263.0M736.3 260.9a2.1 1.8 0 1 0 .1 0M722.6 329.1L728.6 336.7M728.6 334.3a2.4 1.9 0 1 0 .1 0M723.5 288.6L730.0 279.0M730.0 276.9a2.1 1.8 0 1 0 .1 0M705.9 351.0L704.8 368.0M704.8 365.9a2.0 1.5 0 1 0 .1 0M729.3 320.4L738.2 324.3M738.2 321.4a2.8 2.1 0 1 0 .1 0M677.7 286.4L664.5 275.7M664.5 273.5a2.2 2.0 0 1 0 .1 0M701.6 270.9L698.6 253.6M698.6 250.6a2.9 2.6 0 1 0 .1 0M685.8 322.8L676.1 327.7M676.1 325.6a2.0 1.5 0 1 0 .1 0M694.7 293.8L688.8 286.3M688.8 284.2a2.1 1.8 0 1 0 .1 0M728.8 337.7L737.5 348.9M737.5 345.9a3.0 2.5 0 1 0 .1 0M725.1 314.8L732.3 316.3M732.3 314.1a2.3 2.2 0 1 0 .1 0" stroke="#88888f" stroke-width="1.1" fill="#88888f" fill-opacity=".8" stroke-opacity=".7"/><path d="M740.7 299.8h1.4M741.7 334.0h0.8M706.0 348.9h1.8M725.6 351.5h1.7M700.4 291.6h1.9M742.1 316.9h0.8M716.1 278.4h1.6M681.5 339.4h0.8M711.1 315.2h1.7M711.8 312.7h2.0M697.9 335.7h2.0M680.8 340.7h2.2M725.1 324.6h0.8M705.5 345.1h2.2M718.9 275.5h1.0M734.4 298.5h1.9M723.2 352.1h1.3M697.5 350.7h1.7M684.4 328.5h1.8M685.0 333.1h1.5M687.4 326.7h1.2M717.9 276.9h1.0M722.3 335.1h1.6M673.0 310.2h1.8M705.2 322.2h1.7M683.7 305.0h2.0M717.6 323.2h1.7M681.8 334.9h0.9M674.1 314.5h1.4M716.0 321.1h1.2M697.7 351.2h0.9M708.0 268.3h1.5M725.5 341.2h2.1M676.6 331.2h1.1M706.8 337.4h1.7M724.8 304.8h0.9M707.4 346.6h1.8M672.0 302.7h1.5M732.2 347.2h1.3M726.5 312.1h1.2M703.4 287.7h1.0M694.8 278.3h1.7M703.8 352.9h1.7M667.1 319.4h1.1M698.2 343.2h1.6M695.7 306.6h1.9M734.5 307.6h2.0M718.6 321.7h1.6M738.7 298.0h1.1M733.3 345.2h1.8M731.0 310.0h1.9M716.0 325.0h1.4M686.0 342.6h1.4M690.9 348.8h2.0M671.7 323.7h0.9M693.0 349.5h1.5M724.1 324.7h2.0M675.2 340.0h2.2M673.2 290.9h1.3M711.1 301.1h1.5M731.1 313.8h2.1M701.8 304.4h2.0M738.7 280.8h1.4M732.4 341.6h1.6M737.9 320.5h1.7M713.4 276.9h1.2M716.6 316.3h1.0M685.4 326.2h2.1M668.4 310.7h1.8M696.6 272.7h2.0M697.7 282.3h2.0M708.3 333.7h1.0M713.8 325.2h1.1M693.3 345.0h2.2M684.9 282.6h1.6M730.9 341.3h1.6M669.4 321.8h2.1M711.3 316.5h1.3M680.7 297.1h1.2M707.1 340.6h0.9M666.8 313.7h2.0M711.6 292.8h1.4M722.8 324.6h0.9M742.8 326.0h1.2M694.2 283.9h1.2M692.2 285.1h1.1M704.2 342.2h1.1M681.9 314.1h2.1M730.9 343.2h1.0M747.1 322.0h1.9M674.5 335.6h1.2M679.3 339.7h1.9M732.7 303.3h1.8M740.8 293.2h1.3M744.2 294.5h0.9M665.3 315.5h1.9M704.6 299.9h2.0M706.6 331.7h1.8M665.0 317.8h2.0M716.4 315.9h1.1M729.2 321.4h1.3M745.6 315.6h1.9M686.1 332.8h1.6M746.7 308.3h1.1M685.6 303.1h2.1M729.1 289.6h2.1M717.1 272.4h1.3M716.6 295.6h2.0M677.7 339.9h1.5M704.8 333.7h1.3M729.9 290.3h1.3M746.6 303.2h0.9M665.7 310.1h1.4M741.6 312.1h1.8M709.8 275.9h1.4M694.9 317.4h2.1M723.5 310.3h1.0M734.6 315.9h1.9M693.0 327.5h1.4M684.7 288.1h1.5M683.1 326.4h1.7M692.8 352.1h1.7M728.0 281.8h2.2M732.1 313.1h1.6M735.1 299.5h1.1M673.6 284.7h0.8M738.9 327.8h1.0M715.0 308.1h1.8M697.3 343.4h1.7M682.4 311.3h2.1M689.5 318.1h0.8M693.8 296.8h1.6M708.9 326.0h1.5M691.1 289.0h2.2M734.7 287.2h1.8M730.3 292.5h2.1M709.4 354.0h2.0M710.9 313.2h1.6M686.7 331.0h0.9M676.5 324.4h1.9M676.2 293.5h1.4M728.2 303.7h1.5M682.0 342.4h1.3M736.4 336.4h1.7M697.5 352.2h0.8M704.6 352.5h2.0M685.3 304.7h0.9M706.9 296.1h2.2M717.4 330.3h0.9M686.4 331.8h1.9M714.6 322.7h1.2M729.9 301.2h1.3M747.1 300.4h1.4M707.4 283.8h1.6M703.0 288.8h0.9M700.0 275.3h2.0M735.9 326.8h1.5M710.4 340.0h1.6M721.1 304.5h1.0M739.0 304.6h1.4M730.3 274.2h1.3M741.5 307.4h1.4M698.1 280.8h1.8M741.6 332.7h1.1M698.8 344.4h1.6M690.2 304.5h1.2M688.8 290.1h0.9M702.1 341.9h1.6M741.9 307.1h2.0M719.9 299.9h0.8M729.8 292.4h1.7M713.3 310.9h1.4M706.6 284.7h1.8M703.7 351.7h1.7M736.7 330.5h1.2M722.7 351.2h1.0M683.6 301.3h1.6M681.4 318.2h1.8M722.0 341.8h1.6M703.6 323.2h1.8M673.8 287.6h2.0M731.4 348.1h1.3M683.9 311.3h1.6M701.7 289.0h1.2M683.7 292.1h1.6M740.5 339.2h2.0M725.0 328.2h0.9M714.1 314.0h1.1M673.0 287.7h1.5M732.9 343.4h1.0M688.6 290.7h1.4M718.9 322.2h1.7M695.2 284.8h1.3M707.7 282.2h2.0M701.9 304.2h1.0M706.2 315.1h1.7M736.6 282.8h1.6M671.1 292.2h1.3M720.2 305.5h0.9M704.9 271.6h1.0M684.8 344.2h2.1M735.8 295.1h1.6M746.8 292.2h1.1M739.6 282.5h1.6M708.9 340.1h1.8M716.7 283.2h0.9M723.2 326.1h1.2M690.6 334.0h1.4M696.2 339.5h0.8M689.2 344.8h2.0M738.1 322.7h1.7M732.5 326.4h1.6M711.1 333.2h0.8M676.3 313.5h1.1M682.8 299.2h0.9M675.6 286.3h1.7M739.8 295.1h1.0M728.1 301.6h1.1M718.7 342.8h1.4M707.2 325.9h1.0M697.4 326.5h0.9M678.7 326.2h1.6M723.2 300.3h1.8M683.7 319.4h1.0M718.1 316.1h1.1M731.7 285.4h1.0M686.7 280.6h1.6M692.3 349.6h1.6M677.1 340.8h1.9M706.7 280.1h2.2M691.3 327.0h0.9M720.2 272.9h1.3M735.0 299.6h0.8M718.1 303.5h2.1M677.2 300.7h1.5M664.7 306.4h1.8M699.7 290.6h1.2M731.2 293.0h0.9M668.3 326.5h0.8M727.5 299.5h1.4M680.8 296.4h1.5M689.8 305.5h1.0M721.3 309.2h2.0M710.5 334.9h1.8M670.8 293.9h1.3M703.2 303.3h1.5M677.9 330.1h2.0M711.0 302.1h1.2M703.5 288.4h1.1M740.9 286.9h1.5M668.5 309.2h1.5M682.2 309.8h1.1M727.9 283.8h1.8M704.3 293.3h1.6M729.2 312.5h1.6M735.8 283.0h1.9M734.7 326.4h1.6M676.1 338.0h1.3M727.1 278.0h1.6M677.7 315.1h2.1M704.7 321.6h1.3M692.4 332.1h1.2M693.2 299.2h1.7M710.2 327.5h1.9M742.4 288.9h1.8M676.2 314.7h2.0M717.1 334.3h2.2M695.2 336.9h1.1M679.7 321.3h1.4M688.4 347.0h2.2M700.7 294.8h2.1M704.0 274.7h1.4M708.0 353.9h1.3M696.2 323.6h2.1M713.9 300.5h1.1M699.0 326.1h1.0M737.0 321.1h1.7M682.2 309.7h1.4M679.4 297.5h1.8M675.0 291.3h1.4M675.3 308.4h2.2M722.9 311.1h1.5M675.7 332.7h2.0M700.3 298.0h2.1M693.8 316.4h1.3M709.6 268.4h1.6M709.8 306.3h1.2M707.2 293.6h0.9M699.5 313.6h0.8M737.7 325.8h1.7M710.9 287.8h1.7M751.5 305.4h1.7M695.3 292.8h1.1M717.6 282.9h2.1M744.7 288.6h1.2M705.8 269.9h2.2M692.5 297.3h1.3M678.5 326.7h1.8M694.9 322.9h1.5M726.9 272.6h1.4M700.2 347.2h2.0M698.8 333.2h2.2M737.6 333.6h1.6M711.9 278.1h1.8M711.6 313.5h1.8M703.9 309.6h1.7M748.3 316.9h1.9M682.2 306.9h1.9M733.5 323.1h2.0M742.3 301.8h0.8M695.8 316.9h1.4M714.1 279.4h1.0M679.2 311.6h1.2M677.6 319.1h1.7M692.2 316.9h2.0M698.5 353.2h0.9M734.5 276.6h1.0M686.2 327.2h1.3M683.1 327.8h1.3M699.3 280.1h1.3M714.3 291.3h1.8M724.1 339.7h1.9M682.5 346.8h0.8M750.1 310.4h1.1M726.8 279.7h1.4M741.9 287.2h1.2M719.5 273.4h1.8M725.7 293.6h0.8M679.2 305.4h1.4M666.4 312.8h2.0M679.0 292.7h1.4M727.4 293.3h1.0M703.2 307.9h1.5M711.1 348.6h1.6M695.6 328.0h1.3M732.4 334.9h1.8M692.1 283.3h1.8M728.2 309.7h1.3M692.5 291.7h0.9M736.8 283.0h1.4M730.3 315.4h1.7M676.3 313.0h2.1M734.9 303.0h1.6M720.2 271.2h0.8M693.0 282.1h1.5M730.9 294.8h1.6M737.6 303.7h1.6M733.6 318.5h1.9M691.9 330.4h0.8M683.3 329.4h1.9M707.6 344.5h1.6M696.9 301.9h1.0M719.4 316.0h2.0M704.4 330.1h0.9M672.9 335.7h2.0M671.9 315.6h0.9M740.5 332.3h1.5M672.7 334.7h1.2M736.9 328.8h0.9M709.3 289.6h1.2M730.2 336.9h1.5M674.7 288.1h2.1M741.4 340.2h0.9M739.4 334.5h1.9M730.7 323.5h1.9M726.0 276.5h1.8M709.3 321.0h2.1M695.4 333.5h1.7M716.7 327.5h1.3M696.4 329.5h2.1M677.6 300.1h1.4M738.6 333.2h2.0M749.1 321.1h1.9M690.1 301.6h1.2M703.4 279.5h1.2M713.9 349.4h2.1M689.9 271.6h1.6M673.5 297.9h1.5M670.9 327.1h1.6M675.4 304.9h1.3M673.3 305.1h1.8M681.6 305.8h0.9M742.4 295.8h1.9M743.6 332.7h1.8M675.1 328.2h1.6M683.5 292.8h1.4M725.4 291.9h0.9M723.5 315.3h1.9M721.2 322.6h1.9M714.3 276.6h1.9M667.9 299.7h1.4M722.3 340.3h1.4M690.4 346.7h1.5M721.7 297.0h1.2M702.3 268.2h1.5M740.4 290.8h1.6M706.7 342.0h0.9M703.4 301.4h0.9M729.7 278.2h1.8M730.9 308.0h1.7M670.5 332.6h1.3M703.5 328.7h2.1M695.9 349.7h1.3M710.3 287.9h1.8M673.8 316.2h1.5M716.8 307.0h1.2M689.9 286.8h1.0M679.2 304.8h0.9M672.8 329.7h1.0M714.7 300.4h1.5M688.4 304.2h1.6M696.6 293.1h0.9M729.6 289.9h0.8M715.6 310.1h1.3M718.2 325.6h2.1M701.1 313.3h1.9M693.8 304.2h2.1M724.3 296.8h1.7M710.1 280.1h1.4M689.6 349.3h1.0" stroke="#f4f4f8" stroke-width="1.2" fill="none" opacity=".85"/><path d="M754.6 291.3h1.3M758.6 304.3h1.6M658.8 343.0h1.7M750.4 336.3h1.2M661.7 358.4h1.2M698.3 369.5h1.6M670.2 336.2h2.0M649.2 324.3h1.0M769.5 312.5h1.5M770.1 330.5h2.0M645.3 310.8h1.5M695.9 265.2h2.0M675.0 254.5h0.8M701.9 358.0h1.8M717.5 267.6h0.8M773.1 302.3h2.0M678.9 371.3h1.3M746.2 349.2h1.9M735.3 363.9h1.3M733.8 276.2h1.2M665.3 319.1h1.8M753.8 276.2h1.1M648.3 319.0h1.5M656.1 291.9h1.6M749.6 363.3h1.5M681.7 357.3h1.2M666.7 282.9h1.5M649.3 294.9h1.8M693.4 255.1h1.7M737.8 271.1h1.3M703.6 355.9h1.3M768.2 341.6h1.2M694.1 365.6h1.3M666.4 301.2h0.9M671.4 272.9h1.4M710.2 376.9h1.9M764.9 289.1h0.8M663.7 339.7h1.7M688.6 363.3h0.9M761.6 333.6h1.6M705.0 367.7h1.5M726.5 364.9h1.6M648.6 310.4h0.8M670.8 341.8h1.4M710.2 367.0h0.9M682.4 349.2h1.9M645.9 293.0h1.9M673.3 280.3h1.3M723.1 353.9h1.2M710.9 262.6h0.9M728.7 360.9h1.1M769.9 332.6h1.5M698.1 374.2h1.9M670.6 271.3h2.0M663.4 299.7h1.5M659.3 284.1h0.9M763.7 283.1h1.1M694.3 353.8h1.3M662.4 293.7h0.9M649.1 309.0h0.9M730.7 258.2h1.5M751.1 363.1h1.5M656.0 313.4h1.3M701.5 249.8h1.3M673.6 357.4h1.6M688.2 263.0h1.7M761.6 327.3h0.9M744.0 345.7h1.6M752.9 306.2h1.8M645.9 333.2h0.9M651.4 339.2h1.4M656.6 268.9h1.9M705.5 370.2h1.8M715.0 252.4h1.0M723.1 358.2h1.8M705.6 253.2h2.0M767.9 335.8h1.7M729.9 253.1h1.2M709.2 374.0h1.0M695.6 269.5h1.2M754.0 283.3h1.4M648.0 282.6h1.5M753.5 295.3h1.6M757.2 283.1h1.6M767.3 289.5h1.9M728.4 369.2h1.4M741.6 358.0h1.5M671.3 260.3h1.9M738.8 276.8h1.3M674.1 256.0h1.1M659.1 325.6h1.8M675.5 260.4h1.4M758.2 350.4h1.4M747.5 291.7h1.7M747.0 337.5h1.3M676.0 253.6h1.9M702.7 361.5h1.9M772.1 296.1h1.3M658.5 317.0h1.7M711.2 362.6h1.4M661.0 316.8h1.4M659.6 305.5h0.9M703.2 364.1h1.2M665.1 298.5h1.6M770.0 315.7h1.7M757.6 345.9h1.5M675.9 267.6h1.6M746.0 279.7h1.7M731.5 265.7h1.7M693.5 261.7h1.7M658.5 315.9h1.0M755.0 313.7h1.2M643.0 294.7h1.7M736.3 344.2h1.8M738.8 348.0h1.8M664.0 342.2h1.1M739.5 278.8h2.0M667.2 326.7h1.6M681.6 265.0h1.6M658.0 319.2h2.0M709.2 356.5h1.6M654.1 272.5h1.2M693.8 357.0h0.8M653.6 327.0h0.9M714.0 371.8h1.7M652.2 313.5h0.9M662.8 291.2h1.5M658.1 333.9h1.6M718.6 359.5h1.6M730.1 357.0h2.0M748.1 289.6h1.9M736.1 347.4h1.6M759.0 307.6h1.8M762.5 310.8h1.5M715.8 358.3h1.1M687.8 261.1h1.5M667.7 342.5h1.4M682.1 347.8h0.9M746.4 275.6h1.1M676.6 281.3h1.5M659.7 282.6h1.6M775.5 308.1h1.8M660.8 339.4h1.1M762.7 279.5h1.2M729.0 268.6h1.4M672.1 254.8h1.4M739.0 268.0h1.2M718.8 353.6h1.2M740.3 353.9h1.8M733.9 251.7h1.0M660.0 349.8h1.3M711.7 250.0h2.0M731.7 260.1h1.2M673.5 354.2h1.7M645.7 295.4h1.8M706.6 375.0h1.4M761.9 333.2h1.0M767.2 293.9h1.8M736.3 259.4h1.8M751.9 277.5h1.8M710.0 248.4h1.4M681.3 259.0h1.5M772.8 316.4h1.3M669.0 277.0h1.9M709.5 248.2h1.3M672.4 284.0h1.9M763.1 314.4h1.1M658.3 310.1h1.2M737.9 266.0h1.6M743.7 340.2h1.1M661.8 341.5h1.0M701.4 355.6h1.1M770.8 286.8h1.9M677.1 273.8h1.1M747.3 263.7h1.2M694.9 376.1h1.5M731.0 258.8h0.9M713.3 367.5h1.2M752.5 295.6h1.1M755.3 292.0h1.1M668.3 262.3h0.9M649.0 330.4h1.6M660.1 341.6h0.9M764.9 291.2h1.9M648.7 342.2h1.4M757.9 297.3h1.9M766.8 322.2h1.9M671.2 257.4h1.1M726.3 373.0h1.9M755.1 309.7h1.8M665.6 342.1h1.8M758.8 313.7h1.2M671.2 287.6h1.4M672.5 263.9h1.3M686.9 256.4h1.5M760.1 286.5h1.1M660.6 324.4h1.0M691.3 370.1h0.9M759.4 292.0h1.4M655.1 289.2h1.7M661.6 329.9h1.8M674.4 268.0h2.0M718.6 268.7h1.0M659.4 278.7h0.9M725.8 355.2h1.1M752.1 337.2h1.5M698.5 249.0h1.9M756.4 279.0h1.2M754.9 316.9h1.5M771.0 290.5h1.2M669.0 275.2h1.6M675.2 347.0h0.9M656.0 320.2h0.9M686.0 255.0h1.2M667.9 329.1h1.2M661.1 285.9h1.1M669.4 350.0h1.7M673.6 341.0h1.5M661.1 347.8h1.4M658.4 294.4h1.8M740.4 355.0h1.4M752.7 340.7h1.7M658.0 280.3h1.2M771.4 293.2h1.6M653.8 307.5h1.5M645.2 288.7h1.6M649.7 306.5h0.9M698.6 262.0h1.0M749.4 291.9h1.5M664.3 335.0h1.5" stroke="#4a4a58" stroke-width="1.1" fill="none" opacity=".8"/></g><g><radialGradient id="g25" cx=".42" cy=".38" r=".65"><stop offset="0" stop-color="#cfcfd8"/><stop offset="1" stop-color="#b4b4c0"/></radialGradient><path d="M372.3 388.7L383.8 388.5M372.2 391.3L383.4 392.8M371.6 393.8L382.6 397.1M370.1 397.2L378.8 402.2M368.7 399.3L377.1 406.0M365.8 402.0L372.5 410.9M362.5 404.0L366.2 412.5M360.5 404.7L363.1 413.4M357.2 405.3L357.8 414.3M354.7 405.3L354.0 414.6M351.6 404.7L349.2 413.4M348.7 403.6L344.6 411.8M347.1 402.7L342.1 410.5M344.4 400.5L337.4 407.6M342.2 397.7L333.6 403.2M340.8 394.9L332.5 398.2M340.1 392.6L331.4 394.5M339.7 388.2L329.1 387.6M339.9 386.1L330.7 384.4M340.6 383.5L332.2 380.4M341.6 381.3L332.1 376.3M344.4 377.5L337.7 370.9M347.1 375.3L341.8 367.0M348.9 374.3L344.3 364.8M351.4 373.3L348.7 364.1M354.4 372.8L353.3 362.1M357.1 372.7L357.9 361.1M361.1 373.5L364.2 364.0M363.8 374.6L368.7 365.5M365.3 375.6L370.3 368.3M367.6 377.5L374.1 371.2M370.0 380.6L377.6 376.1M370.9 382.3L381.2 377.7M372.2 387.1L382.7 385.9M372.3 390.3L382.4 391.1M371.9 392.6L380.4 394.5M371.1 395.3L379.6 398.9M369.5 398.2L377.0 403.4M366.2 401.7L371.3 408.1M363.7 403.4L367.7 411.0M361.2 404.5L363.8 412.4M358.5 405.1L359.8 413.5M356.5 405.3L356.9 415.1M353.6 405.1L352.1 414.9M350.3 404.3L347.1 412.7M347.9 403.2L343.1 411.5M345.3 401.3L339.5 408.1M343.0 398.9L336.1 404.1M341.6 396.7L334.1 400.8M340.1 392.8L331.7 394.8M339.9 391.7L332.0 393.0M339.8 387.3L330.8 386.3M340.6 383.6L331.7 380.5M341.9 380.8L334.5 376.5M343.8 378.2L336.2 371.6M345.7 376.3L339.3 368.4M348.2 374.6L343.6 366.0M350.6 373.6L347.4 364.5M351.9 373.2L349.3 363.4M354.9 372.7L354.2 362.6M358.2 372.8L359.3 364.2M361.3 373.6L364.6 364.1M364.3 375.0L368.8 367.5M367.9 377.8L374.1 372.0M369.1 379.2L376.4 373.8M370.6 381.7L377.8 378.2M371.8 384.8L381.5 382.2M372.2 386.7L381.8 385.3" stroke="#85858f" stroke-width="1" fill="none"/><path d="M381.1 388.5L383.8 390.1L383.7 386.8ZM380.8 392.5L383.1 394.4L383.6 391.3ZM380.5 396.5L382.2 398.5L383.1 395.8ZM376.6 400.9L378.0 403.5L379.6 400.8ZM375.0 404.3L376.0 407.3L378.1 404.7ZM371.0 408.9L371.2 411.9L373.7 410.0ZM365.3 410.4L364.9 413.1L367.5 411.9ZM362.3 410.7L361.4 413.9L364.7 412.9ZM357.6 411.8L356.2 414.4L359.3 414.2ZM354.2 412.4L352.6 414.5L355.3 414.7ZM349.9 411.0L347.7 413.0L350.7 413.8ZM345.8 409.3L343.1 411.0L346.1 412.5ZM343.6 408.3L340.7 409.6L343.5 411.4ZM339.1 405.8L336.3 406.5L338.4 408.7ZM335.6 401.9L332.8 401.9L334.4 404.5ZM335.0 397.2L331.9 396.6L333.1 399.7ZM333.7 394.0L331.0 393.1L331.7 395.9ZM331.5 387.8L329.2 386.1L329.0 389.1ZM333.2 384.8L331.0 382.8L330.4 385.9ZM334.2 381.2L332.7 379.2L331.8 381.7ZM334.5 377.6L332.9 374.8L331.3 377.8ZM339.2 372.4L338.7 369.9L336.8 371.9ZM343.0 368.9L342.9 366.3L340.6 367.8ZM345.4 367.0L345.7 364.1L342.9 365.5ZM349.4 366.4L350.2 363.6L347.2 364.5ZM353.6 364.4L354.8 361.9L351.8 362.2ZM357.8 363.2L359.3 361.2L356.6 361.0ZM363.4 366.5L365.8 364.5L362.6 363.5ZM367.5 367.7L370.1 366.2L367.3 364.7ZM368.8 370.5L371.6 369.2L368.9 367.4ZM372.2 373.0L375.3 372.4L372.9 370.0ZM375.5 377.3L378.4 377.4L376.8 374.7ZM379.1 378.6L381.7 378.9L380.6 376.4ZM380.6 386.2L382.8 387.2L382.5 384.6ZM379.8 390.9L382.3 392.7L382.5 389.4ZM378.2 394.0L380.0 395.9L380.7 393.1ZM377.2 397.9L378.9 400.4L380.2 397.4ZM374.7 401.9L376.0 404.8L377.9 402.0ZM370.0 406.4L370.3 408.9L372.3 407.3ZM366.6 409.0L366.5 411.6L368.9 410.3ZM363.0 410.0L362.3 413.0L365.4 411.9ZM359.4 411.1L358.3 413.7L361.3 413.3ZM356.8 412.8L355.5 415.1L358.3 415.0ZM352.5 412.7L350.7 414.7L353.5 415.1ZM347.8 410.8L345.9 412.3L348.3 413.2ZM344.5 409.1L341.6 410.6L344.6 412.4ZM340.8 406.5L338.5 407.2L340.5 408.9ZM338.1 402.6L335.2 402.9L337.0 405.3ZM336.6 399.5L333.3 399.3L335.0 402.3ZM333.8 394.3L331.4 393.5L332.0 396.0ZM334.2 392.6L331.8 391.6L332.3 394.3ZM332.9 386.6L330.9 385.0L330.6 387.7ZM334.2 381.3L332.3 378.9L331.2 382.0ZM336.9 377.9L335.4 375.1L333.7 378.0ZM337.8 373.0L337.1 370.6L335.4 372.5ZM340.6 370.1L340.3 367.6L338.2 369.3ZM344.6 367.9L344.7 365.4L342.4 366.7ZM348.3 367.0L349.0 364.0L345.9 365.0ZM349.8 365.4L350.6 363.0L348.0 363.7ZM354.4 365.0L355.8 362.5L352.7 362.7ZM359.0 366.7L360.9 364.4L357.8 364.0ZM363.8 366.5L366.1 364.6L363.1 363.6ZM367.7 369.4L369.9 368.2L367.6 366.9ZM372.1 373.9L375.3 373.3L372.9 370.8ZM374.6 375.1L377.2 374.9L375.6 372.7ZM375.6 379.2L378.4 379.5L377.1 376.8ZM379.4 382.8L381.9 383.6L381.1 380.9ZM379.6 385.6L382.0 386.6L381.6 384.0Z" fill="#85858f"/><circle cx="356" cy="389" r="17" fill="url(#g25)"/><path d="M359.8 399.5L361.8 404.9M361.8 403.5a1.4 1.4 0 1 0 .1 0M369.8 395.0L377.0 398.1M377.0 396.7a1.5 1.1 0 1 0 .1 0M357.1 404.4L357.7 412.3M357.7 411.1a1.2 1.0 0 1 0 .1 0M366.9 391.7L372.6 393.1M372.6 391.5a1.6 1.5 0 1 0 .1 0M350.3 397.9L347.4 402.5M347.4 400.8a1.7 1.7 0 1 0 .1 0M350.6 389.1a1.8 1.4 0 1 0 .1 0M350.8 388.7a1.1 0.8 0 1 0 .1 0M348.1 386.7L344.0 385.6M344.0 383.9a1.7 1.3 0 1 0 .1 0M354.0 384.7a1.4 1.4 0 1 0 .1 0M355.6 398.0L355.4 402.7M355.4 401.6a1.1 1.1 0 1 0 .1 0" stroke="#85858f" stroke-width="1" fill="#85858f" fill-opacity=".8" stroke-opacity=".7"/><path d="M347.5 389.4h1.6M354.3 404.9h1.4M363.2 392.3h0.9M356.5 383.6h1.5M351.7 386.1h1.7M344.6 377.2h2.1M368.2 387.3h1.5M350.4 391.6h1.6M368.1 388.9h2.0M355.1 399.4h1.4M366.2 387.1h1.9M364.8 400.9h1.5M358.2 388.9h1.2M364.6 381.6h1.2M363.6 380.9h2.0M352.0 387.8h0.9M366.9 377.0h1.0M371.6 388.4h1.5M357.7 376.7h0.8M353.3 398.5h2.1M353.9 403.0h1.7M364.5 396.8h1.6M354.5 379.0h2.2M356.9 386.5h2.0M343.3 378.5h1.1M358.1 374.8h1.4M347.9 399.4h2.2M350.7 376.5h1.8M363.1 378.1h1.8M371.4 392.7h2.1M344.6 383.0h2.1M341.3 382.6h1.6M341.3 382.1h2.1M345.7 381.9h1.6M345.9 391.0h1.1M354.1 396.8h2.1M342.7 397.8h1.5M369.1 388.7h1.3M348.2 393.0h1.3M354.0 397.7h1.3M372.3 391.6h1.9M347.6 402.1h0.9M346.3 380.3h2.0M369.2 387.3h2.0M354.4 384.1h1.0M367.2 398.7h1.5M348.8 398.6h2.1M340.6 390.7h1.3M347.5 376.6h1.1M362.4 385.0h1.0M364.1 387.4h1.4M363.2 386.1h1.7M355.0 384.4h1.0M371.4 387.2h1.7M347.9 380.2h2.1M365.0 390.4h1.2M345.6 376.2h1.1M362.4 394.3h2.0M351.3 384.6h1.8M352.6 391.2h1.2M366.1 375.8h1.3M359.1 372.9h0.9M359.6 398.2h1.3M345.2 376.0h1.1M353.9 401.0h1.8M363.6 399.3h1.7M357.3 379.0h1.2M346.8 384.2h1.4M358.9 372.5h2.2M361.7 400.1h1.6" stroke="#f4f4f8" stroke-width="1.2" fill="none" opacity=".85"/><path d="M338.1 383.0h1.2M341.1 400.5h1.4M376.2 375.8h1.0M355.9 409.8h1.8M373.3 392.5h1.8M343.6 403.1h1.5M379.9 395.2h1.9M377.1 397.2h1.9M348.3 407.5h1.9M373.2 389.1h1.5M366.7 368.5h1.6M332.4 403.2h1.2M338.8 381.9h1.2M343.0 377.3h1.7M357.5 414.6h1.0M340.6 372.9h1.1M361.6 365.2h1.3M335.6 382.3h1.7M372.9 392.7h1.5M380.6 399.3h1.9M357.9 407.6h1.8M376.4 398.2h0.9M377.4 387.9h1.6M349.6 414.8h1.7M373.6 389.6h1.2M348.3 404.1h1.5M378.5 392.6h1.7M352.2 408.7h1.8M359.2 363.9h0.9M355.3 409.8h1.4M357.3 362.2h1.5M371.4 396.3h1.3M372.4 382.9h2.0M372.9 390.5h1.4M374.5 397.8h2.0M381.2 384.6h1.6M342.9 405.7h1.4M343.2 409.1h1.0M334.9 386.5h1.0M366.9 407.9h1.2M335.6 406.9h1.1M341.1 403.7h1.9M381.0 387.0h0.8M328.9 384.7h1.1M358.0 364.7h1.4M374.5 382.1h2.0M348.2 414.1h1.6M336.3 379.9h1.0M341.0 411.0h1.5M371.1 406.8h1.4" stroke="#55555f" stroke-width="1.1" fill="none" opacity=".8"/></g><g><radialGradient id="g26" cx=".42" cy=".38" r=".65"><stop offset="0" stop-color="#d4d4dc"/><stop offset="1" stop-color="#b6b6c4"/></radialGradient><path d="M508.0 440.4L521.5 441.0M507.6 444.5L519.8 446.4M506.2 450.2L517.8 454.0M505.0 453.4L520.6 460.1M501.2 460.0L513.5 468.9M498.9 463.0L513.6 476.1M494.7 467.0L503.3 477.6M492.3 468.7L502.8 484.2M489.3 470.6L498.2 486.9M481.5 473.7L485.2 487.5M481.4 473.7L484.6 485.5M473.9 475.0L474.7 491.4M467.5 474.7L465.6 489.9M466.4 474.6L463.4 493.4M457.6 472.0L451.6 485.7M455.3 470.9L449.6 481.9M451.0 468.3L440.7 482.6M447.8 465.7L437.8 476.7M442.4 459.5L432.0 466.6M442.5 459.6L427.5 470.1M438.5 452.2L423.1 458.3M438.0 450.9L425.0 455.5M436.7 446.0L417.4 449.8M436.1 436.7L418.1 435.5M436.7 431.8L419.6 428.2M437.3 429.5L422.8 425.5M438.0 427.1L422.5 421.7M442.7 418.0L429.0 408.2M444.0 416.4L431.1 406.0M445.5 414.6L436.7 406.4M450.3 410.3L441.0 398.1M453.8 408.0L447.4 397.0M457.4 406.1L452.6 395.1M464.2 403.8L461.6 392.1M469.5 403.1L468.1 383.6M474.7 403.1L475.9 388.1M481.9 404.4L486.2 389.6M482.1 404.4L486.8 388.4M488.1 406.8L496.3 390.3M492.8 409.6L502.8 395.6M498.3 414.4L507.2 406.1M499.0 415.1L508.3 406.9M502.6 420.0L514.1 412.8M503.8 422.1L520.8 413.0M506.0 427.1L518.8 422.6M507.3 432.1L524.8 428.6M507.9 442.2L523.1 443.5M506.9 448.0L523.5 452.3M506.7 448.6L520.1 452.3M503.3 456.8L513.7 462.7M502.8 457.6L511.9 463.1M499.5 462.3L510.3 471.4M493.7 467.7L501.4 477.9M489.3 470.6L495.3 481.5M483.8 473.0L488.6 486.8M484.2 472.9L488.4 484.5M479.4 474.2L481.7 484.9M473.1 475.0L473.6 489.7M468.7 474.8L467.6 487.1M461.2 473.3L458.0 483.6M456.3 471.4L450.2 483.8M455.7 471.1L447.9 486.7M451.6 468.6L445.4 477.7M443.8 461.4L431.4 471.3M441.6 458.3L432.3 464.2M439.7 454.8L425.9 461.6M437.7 450.0L426.9 453.5M436.3 443.8L421.4 445.8M436.1 441.9L418.9 443.3M436.0 438.8L419.7 438.8M436.6 432.4L423.0 429.9M438.5 425.9L426.7 421.3M441.2 420.3L428.3 412.4M441.4 420.0L429.5 412.6M446.8 413.3L437.1 403.4M448.4 411.8L438.2 400.1M453.0 408.4L446.7 398.2M455.5 407.0L449.9 396.2M463.2 404.1L460.3 392.6M465.8 403.5L463.1 388.4M471.8 403.0L471.7 391.6M477.3 403.4L479.4 389.9M481.8 404.3L485.1 392.4M488.7 407.1L495.6 393.9M491.0 408.4L497.6 397.7M492.7 409.6L502.8 395.3M496.4 412.5L505.0 403.2M502.5 419.9L517.0 410.9M504.9 424.5L517.9 418.8M506.6 429.0L521.5 424.6M506.6 429.0L519.0 425.4M507.9 436.1L518.5 435.2" stroke="#8a8a94" stroke-width="1.1" fill="none"/><path d="M518.2 440.8L521.4 443.0L521.6 438.9ZM515.8 445.7L519.4 448.8L520.1 443.9ZM514.2 452.8L517.1 456.2L518.6 451.7ZM516.8 458.5L519.6 462.5L521.7 457.8ZM510.3 466.6L512.1 471.0L515.0 466.9ZM511.3 474.1L512.3 477.6L514.9 474.7ZM501.2 475.1L501.7 478.9L504.8 476.3ZM500.5 480.7L500.7 485.6L505.0 482.7ZM496.7 484.2L496.5 487.9L499.9 486.0ZM484.3 483.9L483.0 488.1L487.5 486.9ZM483.8 482.6L482.8 486.0L486.5 485.0ZM474.5 487.3L472.2 491.5L477.2 491.2ZM466.1 485.9L463.1 489.6L468.1 490.2ZM463.9 490.0L461.3 493.0L465.5 493.7ZM453.0 482.5L449.5 484.8L453.6 486.6ZM451.1 479.1L447.9 480.9L451.4 482.8ZM442.6 480.1L439.1 481.5L442.3 483.8ZM440.5 473.7L436.0 475.0L439.7 478.4ZM435.1 464.5L430.7 464.7L433.3 468.5ZM430.9 467.7L426.0 467.9L429.0 472.2ZM426.0 457.2L422.4 456.5L423.8 460.2ZM428.0 454.5L424.3 453.6L425.7 457.4ZM420.8 449.1L417.0 447.7L417.8 451.9ZM422.0 435.7L418.2 433.0L417.9 438.0ZM423.0 428.9L420.0 426.1L419.1 430.4ZM425.8 426.3L423.3 423.6L422.3 427.3ZM425.9 422.9L423.2 419.5L421.7 423.8ZM432.3 410.5L430.5 406.1L427.5 410.2ZM434.2 408.5L432.6 404.0L429.5 407.9ZM439.3 408.9L438.2 404.8L435.2 408.1ZM442.9 400.6L442.6 396.9L439.4 399.2ZM449.3 400.3L449.4 395.8L445.3 398.2ZM454.1 398.6L454.8 394.1L450.4 396.0ZM462.5 396.1L464.2 391.5L459.1 392.6ZM468.4 387.5L470.5 383.5L465.7 383.8ZM475.6 391.2L477.9 388.2L473.9 387.9ZM485.2 392.8L488.2 390.1L484.1 389.0ZM485.6 392.4L489.3 389.2L484.3 387.7ZM494.5 393.8L498.4 391.4L494.1 389.2ZM500.5 398.8L504.8 397.0L500.8 394.2ZM504.9 408.3L508.6 407.6L505.9 404.6ZM505.7 409.2L509.7 408.5L506.9 405.3ZM511.0 414.7L515.3 414.7L512.9 410.8ZM517.4 414.9L522.0 415.2L519.7 410.9ZM515.1 423.9L519.6 424.9L518.0 420.3ZM521.8 429.2L525.2 430.5L524.5 426.7ZM519.5 443.2L522.9 445.8L523.3 441.2ZM519.4 451.2L522.8 454.8L524.1 449.7ZM517.0 451.5L519.6 454.3L520.7 450.4ZM510.9 461.1L512.7 464.5L514.7 460.9ZM509.0 461.4L510.8 464.9L513.0 461.3ZM507.3 468.9L508.7 473.4L512.0 469.5ZM499.4 475.2L499.8 479.2L503.1 476.7ZM493.5 478.1L493.2 482.6L497.4 480.3ZM487.4 483.4L486.5 487.6L490.8 486.1ZM487.0 480.6L485.9 485.4L490.8 483.6ZM480.9 481.2L479.4 485.4L484.0 484.4ZM473.5 486.4L471.5 489.8L475.6 489.7ZM467.9 483.2L465.2 486.9L470.0 487.3ZM459.2 479.9L455.7 482.8L460.3 484.3ZM451.6 481.0L448.5 483.0L452.0 484.7ZM449.3 483.8L446.1 485.8L449.6 487.6ZM447.7 474.3L443.3 476.2L447.5 479.1ZM434.6 468.7L429.8 469.3L433.0 473.3ZM435.3 462.3L431.1 462.3L433.5 466.0ZM429.4 459.9L424.8 459.4L426.9 463.8ZM430.3 452.4L426.2 451.4L427.6 455.6ZM424.6 445.4L421.1 443.8L421.7 447.8ZM422.3 443.1L418.7 441.2L419.1 445.4ZM423.6 438.8L419.8 436.4L419.7 441.2ZM426.3 430.5L423.4 427.8L422.6 432.0ZM430.1 422.7L427.5 419.2L425.8 423.5ZM431.2 414.2L429.4 410.6L427.1 414.3ZM432.2 414.2L430.5 410.9L428.5 414.2ZM439.6 406.0L438.7 401.9L435.5 405.0ZM440.6 402.8L439.9 398.7L436.5 401.6ZM448.4 400.9L448.4 397.2L445.0 399.3ZM451.7 399.7L452.0 395.1L447.7 397.4ZM461.0 395.6L462.2 392.1L458.4 393.0ZM463.7 391.7L465.2 388.1L461.1 388.8ZM471.7 395.6L474.2 391.6L469.2 391.7ZM478.7 394.1L482.0 390.3L476.8 389.5ZM484.1 396.1L487.5 393.0L482.8 391.7ZM493.7 397.5L497.9 395.1L493.3 392.7ZM495.6 400.9L499.6 398.9L495.6 396.4ZM500.7 398.3L504.7 396.6L500.9 394.0ZM502.4 406.0L506.7 404.8L503.2 401.6ZM514.0 412.8L518.1 412.8L515.8 409.1ZM514.4 420.3L518.8 420.9L516.9 416.7ZM518.0 425.7L522.2 426.9L520.9 422.4ZM515.2 426.5L519.7 427.7L518.3 423.0ZM514.5 435.5L518.8 437.7L518.3 432.7Z" fill="#8a8a94"/><circle cx="472" cy="439" r="37.5" fill="url(#g26)"/><path d="M452.1 462.2L444.2 471.4M444.2 469.3a2.1 1.7 0 1 0 .1 0M450.5 425.2L442.0 419.8M442.0 417.1a2.7 2.3 0 1 0 .1 0M455.9 460.1L449.5 468.4M449.5 465.9a2.5 2.3 0 1 0 .1 0M497.6 441.4L507.7 442.3M507.7 439.7a2.6 2.2 0 1 0 .1 0M479.2 450.4L482.1 454.8M482.1 452.6a2.3 2.1 0 1 0 .1 0M474.2 416.8L475.0 408.0M475.0 406.3a1.7 1.4 0 1 0 .1 0M451.0 425.4L442.7 420.0M442.7 417.9a2.1 1.6 0 1 0 .1 0M458.4 443.3L453.0 444.9M453.0 442.6a2.4 1.8 0 1 0 .1 0M492.1 467.0L500.0 478.0M500.0 476.3a1.7 1.4 0 1 0 .1 0M460.5 439.3L456.0 439.4M456.0 437.3a2.1 2.0 0 1 0 .1 0M474.4 418.6L475.4 410.5M475.4 408.4a2.1 1.6 0 1 0 .1 0M482.2 421.8L486.2 415.0M486.2 412.5a2.5 2.5 0 1 0 .1 0M465.6 466.6L463.1 477.5M463.1 474.9a2.6 2.2 0 1 0 .1 0M489.0 430.8L495.7 427.6M495.7 425.4a2.2 1.8 0 1 0 .1 0M463.6 472.8L460.3 486.1M460.3 484.3a1.7 1.4 0 1 0 .1 0M490.3 437.2L497.5 436.5M497.5 434.1a2.4 2.3 0 1 0 .1 0M473.5 455.4L474.1 461.8M474.1 459.4a2.4 1.7 0 1 0 .1 0M445.9 417.8L435.7 409.4M435.7 406.8a2.7 2.6 0 1 0 .1 0M440.0 442.6L427.4 444.0M427.4 441.3a2.7 2.5 0 1 0 .1 0M471.1 470.1L470.8 482.3M470.8 480.1a2.2 1.9 0 1 0 .1 0M488.6 466.7L495.2 477.7M495.2 475.3a2.4 1.7 0 1 0 .1 0M474.1 445.8L475.0 448.5M475.0 446.3a2.3 2.1 0 1 0 .1 0M463.5 452.0L460.2 457.1M460.2 455.0a2.1 1.9 0 1 0 .1 0M481.6 442.0L485.4 443.2M485.4 440.8a2.4 2.3 0 1 0 .1 0M463.2 434.7L459.7 432.9M459.7 430.7a2.2 1.7 0 1 0 .1 0M454.4 434.3L447.4 432.4M447.4 430.4a2.0 1.9 0 1 0 .1 0M456.8 457.2L450.7 464.4M450.7 461.7a2.8 2.3 0 1 0 .1 0M462.7 454.7L459.0 461.0M459.0 459.1a1.9 1.8 0 1 0 .1 0M497.7 429.2L507.8 425.3M507.8 423.0a2.4 1.7 0 1 0 .1 0M491.7 447.7L499.5 451.2M499.5 449.4a1.7 1.6 0 1 0 .1 0" stroke="#8a8a94" stroke-width="1.1" fill="#8a8a94" fill-opacity=".8" stroke-opacity=".7"/><path d="M463.5 405.5h1.3M462.8 439.1h1.4M486.8 429.4h1.6M454.6 434.1h1.2M499.5 459.5h2.0M491.4 409.2h0.8M488.3 451.1h1.0M459.9 412.6h1.3M476.7 438.8h1.1M475.8 446.6h1.2M454.2 406.4h1.6M476.5 465.6h1.6M484.5 467.1h2.0M466.4 427.8h1.6M503.2 432.5h1.3M469.9 472.2h1.2M508.0 432.1h1.6M489.8 462.3h1.5M480.8 439.6h1.5M459.1 443.1h1.9M460.0 424.0h1.9M452.1 428.3h1.7M477.8 445.0h1.8M449.4 437.3h1.4M463.6 428.3h1.7M494.3 467.4h1.2M449.9 419.5h0.9M494.9 467.0h2.2M492.7 411.0h2.1M463.8 453.7h1.0M464.3 450.7h1.3M468.2 412.5h0.9M483.0 422.7h2.0M475.7 440.9h1.2M449.1 411.1h1.6M473.9 431.4h1.2M455.3 444.9h0.9M487.4 443.5h1.1M469.0 443.4h1.6M487.4 412.3h1.2M437.8 440.9h1.2M451.7 427.7h1.2M443.4 457.8h1.9M498.0 456.1h1.9M461.8 430.0h2.1M454.2 457.9h1.7M472.6 448.5h2.1M463.7 430.2h0.8M471.4 430.7h2.2M441.8 449.4h1.7M494.7 430.5h2.0M450.3 442.2h1.5M470.1 458.9h1.8M480.9 428.6h1.6M459.9 413.1h1.8M467.6 413.4h0.9M475.9 421.5h1.0M498.4 415.7h1.4M449.9 440.9h1.9M435.9 437.6h2.0M474.5 470.4h1.6M458.1 436.5h0.9M484.3 461.4h1.5M495.9 419.0h1.1M442.6 461.3h1.0M477.9 462.0h2.1M462.7 472.0h1.7M484.3 442.0h1.8M455.2 432.8h1.4M459.8 427.1h2.1M458.1 438.7h1.1M492.9 448.9h1.4M439.6 443.3h1.3M494.0 454.6h2.2M489.4 461.4h1.5M486.7 436.1h2.2M469.7 442.4h1.7M444.7 461.4h2.1M482.0 405.0h1.4M460.8 459.8h2.0M492.7 452.6h1.3M454.9 406.4h1.3M455.3 426.9h1.8M461.7 463.0h1.9M479.1 460.2h1.9M466.6 402.8h2.0M443.4 446.2h1.6M448.0 457.7h2.1M444.4 450.4h1.2M467.7 444.1h1.0M486.5 413.4h2.1M481.1 472.4h1.7M467.1 422.0h2.0M449.4 467.6h1.1M485.2 424.0h1.4M507.1 445.4h1.3M493.2 424.9h1.7M473.8 441.7h1.5M448.8 428.7h0.9M478.8 427.9h2.1M456.5 444.6h2.2M463.1 408.4h1.9M443.2 448.9h1.3M460.1 450.4h1.8M483.9 444.5h2.2M492.8 414.5h1.2M497.0 433.3h1.9M442.4 461.8h1.0M472.1 432.2h2.0M453.5 411.9h1.0M491.5 430.4h0.9M454.9 462.6h1.7M503.6 445.7h2.0M467.0 437.5h1.7M449.0 432.7h2.0M487.2 431.1h1.1M439.5 444.6h1.5M504.0 442.3h2.2M500.8 418.4h0.8M472.8 458.7h1.8M487.7 455.5h1.1M490.4 468.3h2.0M479.3 450.7h1.2M450.6 430.7h1.6M492.0 434.8h1.8M484.6 433.7h1.2M473.1 413.2h1.1M495.8 462.1h1.2M455.7 417.4h1.9M494.5 461.7h1.1M484.5 425.1h1.6M458.7 435.7h1.6M438.0 425.1h1.6M486.3 461.9h0.9M467.2 408.1h1.8M489.1 441.3h1.3M476.6 436.5h1.7M448.6 462.2h1.4M499.9 434.4h0.9M452.5 457.0h1.5M457.1 442.2h1.6M483.5 462.0h1.0M459.6 444.5h1.1M495.8 426.5h1.8M490.8 424.5h1.7M493.4 431.4h2.2M435.8 438.8h1.1M483.0 416.7h1.5M444.6 432.1h2.1M453.6 436.9h1.9M490.6 416.0h1.2M489.0 416.3h1.1M499.6 431.9h0.8M484.3 454.4h1.9M440.1 448.8h1.4M489.3 471.7h1.7M484.8 417.6h1.0M466.2 452.9h1.6M487.0 454.1h2.1M470.3 451.6h2.0M484.5 445.6h1.6M464.1 407.2h1.6M466.8 425.1h2.1M485.9 453.6h1.4M436.5 431.9h1.3M477.1 406.3h1.7M436.5 438.6h1.1M438.0 436.4h1.6M480.3 453.6h1.6M471.9 431.7h1.1M490.4 449.8h1.9M507.2 431.5h1.3M464.5 437.6h1.9M454.5 464.8h2.2M492.7 408.5h1.7M475.0 456.9h1.0M448.7 467.2h1.7M494.7 425.7h1.1M471.3 449.4h1.2M459.5 441.6h2.0M498.2 442.5h1.0M467.6 429.0h1.2M488.2 428.2h1.9M454.0 452.9h1.1M449.7 464.4h1.1M464.3 449.0h2.2M492.4 446.1h1.7M487.4 407.2h1.6M443.9 449.3h0.9M464.3 465.6h2.2M482.4 422.9h1.5M453.8 413.3h1.0M493.5 420.7h1.4M455.6 463.5h1.4M495.0 448.0h1.4M464.6 416.2h1.2M444.5 413.7h1.5M488.1 432.1h0.9M472.2 476.0h1.6M480.1 421.7h0.9M448.3 420.3h1.2M505.3 449.0h2.1M475.1 423.4h2.0M446.8 452.0h1.9M468.2 462.8h2.1M484.7 411.6h1.5M451.4 412.5h1.0M502.4 439.3h2.1M490.4 408.0h1.2M465.6 475.0h0.9M466.4 462.0h1.0M475.7 424.7h1.9M448.1 421.7h1.4M475.2 443.3h1.7M487.6 467.8h1.5M440.9 423.9h1.7M480.3 441.6h2.1M484.9 445.7h0.9M492.8 426.2h1.6M475.0 419.5h1.8M485.0 465.8h0.8M490.6 427.0h1.1M502.6 426.9h2.1M493.0 442.2h0.9M494.8 421.0h1.7M481.3 443.8h2.1M481.5 462.0h1.2M464.5 438.7h1.7M484.1 413.1h1.4M484.7 426.6h1.0M447.3 465.8h1.5M451.3 422.3h1.0M479.3 450.8h1.1M491.7 423.7h1.2M486.0 442.7h2.1M492.5 418.3h2.1M477.1 463.7h0.8M455.4 446.5h1.9M443.9 421.8h0.9M482.4 431.5h1.9M457.5 429.3h1.6M450.6 457.6h1.5M460.8 458.3h1.2M473.6 458.7h1.6M464.9 435.1h1.0M480.4 448.1h1.8M461.3 425.3h1.5M501.0 461.1h1.9M497.1 460.4h1.6M443.7 445.6h2.1M496.3 446.9h2.1M465.5 436.4h1.6M480.8 461.7h1.0M442.4 436.3h2.1M467.0 449.8h0.9M455.8 432.3h1.1M477.9 425.0h1.9M469.3 467.2h1.8M497.7 435.7h1.0M489.7 409.4h1.7M446.1 432.0h1.2M450.6 449.8h1.5M464.3 412.4h1.1M440.0 426.9h1.1M454.7 416.1h1.9M475.6 461.3h1.3M461.8 412.0h1.1M448.9 447.4h1.5M465.1 426.9h1.0M488.2 425.4h1.5M494.0 454.5h1.3M440.1 444.7h1.1M488.1 409.8h1.8M459.8 440.7h1.9M498.4 430.7h2.2M486.4 438.4h1.1M462.3 416.0h1.3M483.9 465.1h2.1M483.6 470.8h1.8M471.4 416.9h1.2M464.4 450.8h1.5M450.8 421.6h1.5M480.1 457.1h1.8M494.8 415.4h0.8M455.5 409.1h1.4M488.5 443.1h1.2M475.3 467.5h2.1M472.1 451.5h1.5M465.1 422.2h1.8M467.1 467.5h1.1M497.5 423.2h1.7M438.9 443.9h0.9M493.8 433.5h1.4M473.4 404.7h1.0M440.3 446.2h1.1M451.7 439.1h2.1M452.7 457.4h1.3M484.4 459.7h1.9M465.6 452.1h1.8M476.7 453.9h1.0M498.6 422.5h1.3M445.8 464.7h1.5M468.4 402.7h1.7M458.5 415.5h1.4M485.9 416.7h1.6M445.5 437.0h1.4M481.1 443.0h1.4M503.6 426.9h1.1M472.9 403.3h1.4M461.4 456.5h1.7M474.8 458.4h1.4M479.4 472.5h2.0M453.2 424.8h1.9M500.5 452.7h1.0M447.9 459.8h1.8M485.2 461.8h1.3M501.1 420.7h1.4M442.4 433.5h1.9M496.3 411.7h1.2M492.6 451.7h2.2" stroke="#f4f4f8" stroke-width="1.2" fill="none" opacity=".85"/><path d="M504.3 413.4h1.3M499.7 472.1h1.9M452.5 406.6h1.2M445.4 396.8h1.3M454.1 491.7h1.3M450.9 400.3h2.0M508.9 426.1h1.9M509.6 451.4h1.2M467.4 482.2h1.8M483.9 400.2h1.8M480.6 490.6h1.5M500.4 410.7h1.9M496.4 405.2h1.9M447.0 479.1h1.4M474.5 485.3h1.4M459.2 389.7h2.0M435.0 442.1h1.0M426.9 425.6h1.7M507.2 479.0h1.3M510.5 428.3h1.6M457.3 478.3h1.4M431.8 446.3h1.8M471.9 391.2h1.1M426.3 460.8h1.6M501.8 477.9h1.8M496.3 409.6h1.0M508.6 474.4h1.3M419.5 454.3h1.1M447.4 395.9h1.4M484.8 393.3h1.7M471.5 476.1h1.8M437.3 404.6h1.7M506.6 462.3h1.5M421.2 423.5h1.1M420.4 448.0h1.7M506.0 467.1h1.6M478.8 389.4h1.7M423.4 423.0h1.0M491.9 389.2h2.0M438.3 404.3h0.9M466.9 394.7h1.3M430.8 438.3h1.5M502.8 411.0h1.1M521.6 459.4h1.2M504.0 481.1h1.1M474.3 477.1h1.6M465.3 493.4h1.6M455.4 479.3h1.1M454.5 476.6h2.0M443.6 472.9h1.5M499.1 391.2h1.4M492.6 387.2h1.6M423.9 415.5h1.3M461.5 478.7h1.5M483.2 401.4h1.3M417.1 444.2h0.9M476.2 482.1h1.2M457.9 385.8h1.1M433.6 452.3h1.2M455.2 389.0h0.8M433.2 409.5h1.2M490.1 476.4h0.8M438.8 458.3h1.8M426.9 470.6h1.3M434.3 472.0h2.0M523.1 442.3h1.0M490.6 475.4h1.1M426.6 433.2h2.0M479.4 480.4h1.4M481.8 395.7h1.6M520.1 429.2h1.3M495.2 408.0h1.1M450.1 488.9h0.8M450.5 397.0h0.8M519.7 448.7h1.1M437.1 421.6h1.2M460.3 486.9h1.7M491.4 488.5h1.7M517.9 431.6h1.7M519.9 456.1h1.7M510.4 463.1h1.3M433.8 432.2h1.6M419.7 427.8h1.9M436.9 401.0h0.8M517.8 446.9h1.3M486.1 490.0h1.1M465.0 385.2h0.8M507.0 422.2h1.5M513.1 415.0h1.7M419.2 436.9h1.2M494.7 468.2h1.2M453.2 475.6h0.8M525.4 445.0h1.9M436.0 478.4h2.0M429.1 439.6h0.9M491.0 475.5h1.6M431.8 434.8h1.3M436.3 403.3h1.3M419.1 430.9h1.4M440.9 466.3h1.2M427.3 450.6h1.0M515.1 473.1h1.0M419.9 451.9h2.0M429.5 415.7h1.6M511.4 448.2h1.5M422.1 460.4h1.8M486.5 472.9h1.6M450.1 474.7h1.8M433.4 453.8h1.6M520.5 465.3h1.7M490.2 471.4h1.2M481.6 397.1h2.0M456.3 386.4h1.6M462.3 494.1h1.3M513.6 406.9h1.9M451.1 394.8h1.6M448.9 390.7h0.9M472.5 481.9h1.6M442.2 393.7h1.1M441.1 478.8h1.5M476.1 491.2h1.9M503.9 477.0h0.8M492.4 388.5h1.5M422.0 450.3h1.2M434.0 421.2h1.7M455.9 396.4h1.3M502.5 483.9h1.1M469.2 395.0h1.4M423.8 458.0h1.5M503.2 460.5h0.9M511.1 419.4h1.6M433.9 403.7h1.1M502.2 391.9h1.8M455.9 476.8h1.6M497.3 485.1h1.5M484.8 479.1h1.2M512.0 425.4h0.8M449.2 401.6h0.9M435.3 446.1h1.2M465.7 388.6h1.1M438.6 464.9h1.6M431.7 409.5h1.7M496.1 475.9h1.3M508.1 456.4h0.8M472.3 476.0h1.1M440.1 462.0h1.0M440.8 395.2h1.8M435.2 411.4h1.9M481.3 477.5h1.3M522.5 451.2h1.5M517.9 446.6h1.2M513.4 464.2h1.5M432.6 449.3h1.0M478.4 479.7h1.5M431.2 439.8h1.4M518.0 444.2h1.8M485.2 478.6h1.5M426.1 448.9h0.9M423.3 454.7h2.0M440.3 460.0h0.9M453.0 402.4h1.5M434.5 444.9h1.6M493.4 403.9h1.4M451.1 395.4h1.4M449.2 404.4h1.4M521.8 419.1h1.9M479.6 385.8h1.9M436.3 472.5h1.0M517.7 428.3h1.1M430.0 467.0h1.1" stroke="#50505c" stroke-width="1.1" fill="none" opacity=".8"/></g><g><radialGradient id="g27" cx=".42" cy=".38" r=".65"><stop offset="0" stop-color="#cfcfd8"/><stop offset="1" stop-color="#b4b4c0"/></radialGradient><path d="M621.5 554.7L603.2 531.8M622.7 553.8L603.8 529.3M621.7 554.5L600.6 527.9M638.0 544.1L621.4 511.3M639.2 543.5L625.0 514.7M648.9 539.4L637.0 506.6M656.4 537.0L647.7 505.2M658.6 536.4L652.1 509.8M660.9 535.9L654.9 509.0M681.6 533.5L681.5 499.4M686.6 533.7L687.8 507.9M691.0 534.0L694.4 497.3M694.1 534.3L697.5 507.5M698.5 535.0L703.3 507.0M707.0 536.8L716.0 503.4M716.9 540.0L725.2 518.5M728.9 545.6L745.3 515.9M725.2 543.7L740.2 513.4M740.3 553.0L758.7 528.4M743.9 555.9L760.7 535.6M623.4 553.3L604.7 528.6M624.7 552.3L606.7 527.8M636.6 544.8L626.8 526.4M649.9 539.0L642.7 518.6M653.9 537.7L647.2 515.5M657.2 536.8L650.6 511.9M671.0 534.2L668.7 514.1M669.6 534.3L666.8 512.9M681.8 533.5L681.7 503.9M678.1 533.6L677.2 509.9M688.2 533.7L690.0 505.2M700.9 535.4L706.6 506.6M701.3 535.5L707.8 503.8M718.4 540.6L726.6 520.4M724.9 543.6L737.0 519.1M733.5 548.3L744.2 531.2M737.0 550.7L754.7 525.1M741.4 553.9L759.8 530.2" stroke="#8c8c9c" stroke-width="1.4" fill="none"/><path d="M605.6 534.9L605.1 530.3L601.3 533.3ZM606.8 533.2L606.2 527.4L601.3 531.1ZM603.1 531.0L602.5 526.3L598.6 529.4ZM623.5 515.4L624.0 510.0L618.8 512.6ZM626.8 518.3L627.3 513.6L622.8 515.8ZM638.7 511.5L640.0 505.5L633.9 507.7ZM649.1 510.2L650.9 504.3L644.6 506.1ZM653.3 514.9L655.2 509.0L648.9 510.6ZM656.0 513.8L657.9 508.3L651.9 509.7ZM681.5 503.5L684.0 499.4L678.9 499.4ZM687.6 512.5L690.7 508.1L685.0 507.8ZM694.0 501.5L697.0 497.6L691.8 497.1ZM697.0 511.7L700.2 507.9L694.9 507.2ZM702.6 511.2L705.9 507.4L700.7 506.5ZM714.9 507.2L718.4 504.0L713.6 502.7ZM723.8 522.1L727.5 519.3L722.9 517.6ZM742.8 520.5L748.1 517.5L742.4 514.4ZM738.3 517.2L742.6 514.6L737.8 512.2ZM756.1 532.0L761.0 530.1L756.5 526.8ZM757.7 539.2L762.9 537.5L758.4 533.8ZM607.2 531.9L606.8 527.1L602.6 530.2ZM609.6 531.8L609.2 526.0L604.2 529.7ZM628.9 530.4L629.3 525.1L624.3 527.7ZM644.2 522.8L645.4 517.7L640.1 519.5ZM648.4 519.6L649.8 514.7L644.6 516.3ZM651.8 516.5L653.5 511.1L647.7 512.7ZM669.3 519.0L671.8 513.8L665.7 514.5ZM667.4 517.7L669.8 512.5L663.8 513.3ZM681.7 508.6L684.6 503.9L678.8 503.9ZM677.4 514.8L680.2 509.8L674.1 510.0ZM689.7 509.5L692.7 505.4L687.3 505.0ZM705.8 510.8L709.3 507.1L704.0 506.1ZM706.9 508.2L710.5 504.4L705.0 503.3ZM724.8 524.9L729.4 521.5L723.9 519.3ZM734.9 523.5L739.7 520.5L734.3 517.8ZM741.7 535.2L746.7 532.8L741.7 529.7ZM752.0 529.0L757.1 526.8L752.2 523.4ZM757.3 533.4L761.8 531.8L757.8 528.7Z" fill="#8c8c9c"/><circle cx="682" cy="630.5" r="101" fill="url(#g27)"/><path d="M665.7 506.4h0.9M750.7 517.3h1.4M651.5 513.7h1.6M714.0 516.7h1.7M657.7 520.1h0.8M696.1 530.9h1.9M626.2 513.4h1.3M711.6 520.7h1.6M671.2 513.7h1.3M705.8 512.4h1.4M688.2 515.2h0.8M672.9 531.5h1.7M764.0 530.4h1.9M641.3 518.5h1.1M689.1 513.8h1.4M717.4 526.7h1.9M696.0 503.4h0.9M631.6 523.2h1.8M626.6 512.3h0.9M636.0 511.5h1.7M686.3 496.8h0.9M713.8 508.0h0.8M605.3 528.2h1.3M711.3 509.1h1.9M689.1 514.3h1.4M685.9 528.6h1.4M650.0 524.0h0.9M712.4 512.7h0.9M668.9 497.5h1.6M680.5 528.4h1.3M724.9 523.8h1.2M708.4 503.8h1.9M743.4 512.8h1.0M761.3 525.1h1.3M598.0 530.0h1.0M652.7 532.4h1.0M655.3 504.3h1.9M752.1 520.8h1.9M695.0 522.8h1.1M683.3 500.1h1.0M716.2 526.4h1.8M650.5 520.2h1.3M673.0 498.5h1.3M667.8 522.4h1.3M642.0 516.0h1.9M696.9 503.1h1.7M706.0 504.6h1.7M685.5 508.3h1.5M671.1 498.3h1.5M728.4 510.5h1.6M679.3 521.0h1.9M670.2 510.1h1.6M747.3 532.8h1.0M681.2 520.1h1.2M653.5 509.6h1.1M679.3 516.3h1.6M696.2 508.3h1.1M640.3 518.6h1.2M756.0 525.8h1.3M687.4 498.9h0.9M724.9 512.9h0.9M657.6 523.2h1.7M679.5 508.6h1.8M633.6 517.1h1.6M687.5 527.4h1.4M714.5 506.2h1.1M620.5 519.9h1.8M690.7 504.8h1.3M764.7 528.4h2.0M746.6 520.5h1.5M770.9 530.5h1.3M661.2 501.8h0.8M723.0 528.0h1.8M745.7 513.1h1.8M744.3 522.0h0.8M742.1 522.9h1.6M603.2 524.9h1.6M635.4 531.5h1.6M714.1 520.8h1.4M600.9 529.9h1.2M661.4 506.4h0.8M688.8 497.4h1.7M649.6 505.4h1.7M746.3 524.5h0.9M701.1 531.6h1.4M680.7 508.7h1.4M676.0 529.7h2.0M700.0 511.8h1.3M645.5 510.3h1.8M650.6 514.3h1.4" stroke="#2a3a6a" stroke-width="1.1" fill="none" opacity=".8"/></g></g><g filter="url(#rough2)"><ellipse cx="205" cy="566" rx="205" ry="80" fill="#c2c2d0" opacity=".5"/><ellipse cx="235" cy="560" rx="92" ry="83" fill="#e0e0ea"/><ellipse cx="250" cy="575" rx="70" ry="70" fill="#d0d0dc"/><path d="M136.3 481.6 L123.0 439.4 L119.4 440.5 L133.7 482.4 Z" fill="#aeaec0"/><path d="M123.0 439.4 Q119.5 427.5 128.1 416.7 L101.9 425.3 Q115.2 428.9 119.4 440.5 Z" fill="#aeaec0"/><ellipse cx="115.0" cy="421.0" rx="4.1" ry="13.8" transform="rotate(-108.2 115.0 421.0)" fill="#aeaec0"/><path d="M155.4 464.8 L152.7 435.0 L148.9 435.4 L152.6 465.2 Z" fill="#aeaec0"/><path d="M152.7 435.0 Q151.9 424.9 160.2 417.8 L137.8 420.2 Q147.4 425.4 148.9 435.4 Z" fill="#aeaec0"/><ellipse cx="149.0" cy="419.0" rx="3.4" ry="11.2" transform="rotate(-96.2 149.0 419.0)" fill="#aeaec0"/><path d="M169.3 468.5 L182.8 433.3 L179.2 432.0 L166.7 467.5 Z" fill="#aeaec0"/><path d="M182.8 433.3 Q186.2 424.9 195.4 422.4 L176.6 415.6 Q182.0 423.4 179.2 432.0 Z" fill="#aeaec0"/><ellipse cx="186.0" cy="419.0" rx="3.0" ry="10.0" transform="rotate(-69.8 186.0 419.0)" fill="#aeaec0"/><path d="M232.3 478.6 L248.7 442.4 L245.2 440.9 L229.7 477.4 Z" fill="#aeaec0"/><path d="M248.7 442.4 Q252.2 435.3 260.0 433.5 L244.0 426.5 Q248.0 433.5 245.2 440.9 Z" fill="#aeaec0"/><ellipse cx="252.0" cy="430.0" rx="2.6" ry="8.8" transform="rotate(-66.4 252.0 430.0)" fill="#aeaec0"/><path d="M257.4 496.3 L265.5 456.8 L261.7 456.1 L254.6 495.7 Z" fill="#aeaec0"/><path d="M265.5 456.8 Q267.3 449.2 274.6 445.7 L257.4 442.3 Q262.9 448.3 261.7 456.1 Z" fill="#aeaec0"/><ellipse cx="266.0" cy="444.0" rx="2.6" ry="8.8" transform="rotate(-79.1 266.0 444.0)" fill="#aeaec0"/><path d="M263.3 500.5 L275.1 472.5 L271.5 471.1 L260.7 499.5 Z" fill="#aeaec0"/><path d="M275.1 472.5 Q278.3 465.3 286.1 463.2 L269.9 456.8 Q274.1 463.6 271.5 471.1 Z" fill="#aeaec0"/><ellipse cx="278.0" cy="460.0" rx="2.6" ry="8.8" transform="rotate(-68.2 278.0 460.0)" fill="#aeaec0"/><path d="M251.3 492.5 L256.1 480.9 L252.5 479.6 L248.7 491.5 Z" fill="#aeaec0"/><path d="M256.1 480.9 Q258.7 474.7 265.0 472.6 L251.0 467.4 Q254.4 473.1 252.5 479.6 Z" fill="#aeaec0"/><ellipse cx="258.0" cy="470.0" rx="2.2" ry="7.5" transform="rotate(-70.0 258.0 470.0)" fill="#aeaec0"/><path d="M271.3 510.5 L278.9 491.8 L275.4 490.5 L268.7 509.5 Z" fill="#aeaec0"/><path d="M278.9 491.8 Q281.7 485.7 288.0 483.7 L274.0 478.3 Q277.4 484.0 275.4 490.5 Z" fill="#aeaec0"/><ellipse cx="281.0" cy="481.0" rx="2.2" ry="7.5" transform="rotate(-69.2 281.0 481.0)" fill="#aeaec0"/><path d="M292.2 507.7 L314.1 471.9 L310.9 469.9 L289.8 506.3 Z" fill="#aeaec0"/><path d="M314.1 471.9 Q318.5 465.3 326.5 464.5 L311.5 455.5 Q314.6 463.0 310.9 469.9 Z" fill="#aeaec0"/><ellipse cx="319.0" cy="460.0" rx="2.6" ry="8.8" transform="rotate(-59.2 319.0 460.0)" fill="#aeaec0"/><path d="M297.1 510.9 L327.3 475.9 L324.4 473.5 L294.9 509.1 Z" fill="#aeaec0"/><path d="M327.3 475.9 Q332.6 470.1 340.7 470.6 L327.3 459.4 Q329.2 467.2 324.4 473.5 Z" fill="#aeaec0"/><ellipse cx="334.0" cy="465.0" rx="2.6" ry="8.8" transform="rotate(-49.8 334.0 465.0)" fill="#aeaec0"/><path d="M313.0 515.0 L347.3 482.2 L344.6 479.5 L311.0 513.0 Z" fill="#aeaec0"/><path d="M347.3 482.2 Q353.2 477.0 361.1 478.3 L348.9 465.7 Q350.0 473.7 344.6 479.5 Z" fill="#aeaec0"/><ellipse cx="355.0" cy="472.0" rx="2.6" ry="8.8" transform="rotate(-44.3 355.0 472.0)" fill="#aeaec0"/><path d="M330.8 526.2 L363.5 504.7 L361.4 501.5 L329.2 523.8 Z" fill="#aeaec0"/><path d="M363.5 504.7 Q370.3 500.6 377.9 503.3 L368.1 488.7 Q367.7 496.8 361.4 501.5 Z" fill="#aeaec0"/><ellipse cx="373.0" cy="496.0" rx="2.6" ry="8.8" transform="rotate(-34.0 373.0 496.0)" fill="#aeaec0"/><path d="M350.5 532.3 L383.0 519.6 L381.5 516.0 L349.5 529.7 Z" fill="#aeaec0"/><path d="M383.0 519.6 Q390.4 516.9 397.3 521.1 L390.7 504.9 Q388.7 512.7 381.5 516.0 Z" fill="#aeaec0"/><ellipse cx="394.0" cy="513.0" rx="2.6" ry="8.8" transform="rotate(-22.2 394.0 513.0)" fill="#aeaec0"/><path d="M365.3 534.4 L395.9 527.4 L395.0 523.7 L364.7 531.6 Z" fill="#aeaec0"/><path d="M395.9 527.4 Q402.5 526.2 407.8 530.3 L404.2 515.7 Q401.5 521.8 395.0 523.7 Z" fill="#aeaec0"/><ellipse cx="406.0" cy="523.0" rx="2.2" ry="7.5" transform="rotate(-13.7 406.0 523.0)" fill="#aeaec0"/><path d="M86.1 497.1 L60.9 466.3 L58.0 468.7 L83.9 498.9 Z" fill="#aeaec0"/><path d="M60.9 466.3 Q54.7 458.3 57.6 447.8 L40.4 462.2 Q51.2 461.2 58.0 468.7 Z" fill="#aeaec0"/><ellipse cx="49.0" cy="455.0" rx="3.4" ry="11.2" transform="rotate(-129.9 49.0 455.0)" fill="#aeaec0"/><path d="M93.2 499.3 L78.7 471.8 L75.3 473.6 L90.8 500.7 Z" fill="#aeaec0"/><path d="M78.7 471.8 Q74.6 463.7 78.8 455.2 L61.2 464.8 Q70.7 465.9 75.3 473.6 Z" fill="#aeaec0"/><ellipse cx="70.0" cy="460.0" rx="3.0" ry="10.0" transform="rotate(-118.8 70.0 460.0)" fill="#aeaec0"/><path d="M70.8 503.8 L37.1 480.5 L35.0 483.7 L69.2 506.2 Z" fill="#aeaec0"/><path d="M37.1 480.5 Q29.8 475.2 29.6 465.7 L18.4 482.3 Q27.3 479.0 35.0 483.7 Z" fill="#aeaec0"/><ellipse cx="24.0" cy="474.0" rx="3.0" ry="10.0" transform="rotate(-146.0 24.0 474.0)" fill="#aeaec0"/><path d="M60.7 518.8 L28.8 498.9 L26.9 502.2 L59.3 521.2 Z" fill="#aeaec0"/><path d="M28.8 498.9 Q22.3 494.5 21.5 486.5 L12.5 501.5 Q19.9 498.4 26.9 502.2 Z" fill="#aeaec0"/><ellipse cx="17.0" cy="494.0" rx="2.6" ry="8.8" transform="rotate(-148.8 17.0 494.0)" fill="#aeaec0"/><path d="M318.8 529.2 L334.6 518.8 L332.5 515.7 L317.2 526.8 Z" fill="#aeaec0"/><path d="M334.6 518.8 Q341.3 514.6 349.0 517.2 L339.0 502.8 Q338.7 510.9 332.5 515.7 Z" fill="#aeaec0"/><ellipse cx="344.0" cy="510.0" rx="2.6" ry="8.8" transform="rotate(-34.7 344.0 510.0)" fill="#aeaec0"/><path d="M101.2 517.3 L95.3 506.8 L92.0 508.8 L98.8 518.7 Z" fill="#b4b4c6"/><path d="M95.3 506.8 Q90.2 498.0 94.5 488.0 L75.5 500.0 Q86.3 500.5 92.0 508.8 Z" fill="#b4b4c6"/><ellipse cx="85.0" cy="494.0" rx="7.0" ry="11.2" transform="rotate(-122.0 85.0 494.0)" fill="#b4b4c6"/><ellipse cx="84.7" cy="493.6" rx="4.0" ry="7.0" transform="rotate(-122.0 85.0 494.0)" fill="#8b8ba0"/><path d="M126.3 523.4 L121.8 512.9 L118.3 514.5 L123.7 524.6 Z" fill="#b4b4c6"/><path d="M121.8 512.9 Q117.7 503.6 123.1 494.1 L102.9 503.9 Q113.6 505.6 118.3 514.5 Z" fill="#b4b4c6"/><ellipse cx="113.0" cy="499.0" rx="7.0" ry="11.2" transform="rotate(-115.6 113.0 499.0)" fill="#b4b4c6"/><ellipse cx="112.8" cy="498.5" rx="4.0" ry="7.0" transform="rotate(-115.6 113.0 499.0)" fill="#8b8ba0"/><path d="M151.4 535.7 L150.3 527.4 L146.6 528.2 L148.6 536.3 Z" fill="#b4b4c6"/><path d="M150.3 527.4 Q148.5 516.3 157.3 507.6 L132.7 512.4 Q144.1 517.2 146.6 528.2 Z" fill="#b4b4c6"/><ellipse cx="145.0" cy="510.0" rx="7.8" ry="12.5" transform="rotate(-100.9 145.0 510.0)" fill="#b4b4c6"/><ellipse cx="144.9" cy="509.5" rx="4.5" ry="7.8" transform="rotate(-100.9 145.0 510.0)" fill="#8b8ba0"/><path d="M164.4 535.9 L160.4 485.0 L156.6 485.3 L161.6 536.1 Z" fill="#b4b4c6"/><path d="M160.4 485.0 Q159.8 474.3 168.8 467.0 L145.2 469.0 Q155.3 474.7 156.6 485.3 Z" fill="#b4b4c6"/><ellipse cx="157.0" cy="468.0" rx="7.4" ry="11.9" transform="rotate(-95.0 157.0 468.0)" fill="#b4b4c6"/><ellipse cx="157.0" cy="467.5" rx="4.3" ry="7.4" transform="rotate(-95.0 157.0 468.0)" fill="#8b8ba0"/><path d="M214.4 505.0 L214.9 485.9 L211.1 485.9 L211.6 505.0 Z" fill="#b4b4c6"/><path d="M214.9 485.9 Q215.3 473.6 226.8 466.0 L199.2 466.0 Q210.7 473.6 211.1 485.9 Z" fill="#b4b4c6"/><ellipse cx="213.0" cy="466.0" rx="8.5" ry="13.8" transform="rotate(-90.0 213.0 466.0)" fill="#b4b4c6"/><ellipse cx="213.0" cy="465.5" rx="5.0" ry="8.5" transform="rotate(-90.0 213.0 466.0)" fill="#8b8ba0"/><path d="M196.4 536.0 L196.9 514.2 L193.1 514.2 L193.6 536.0 Z" fill="#b4b4c6"/><path d="M196.9 514.2 Q197.3 503.5 206.9 497.0 L183.1 497.0 Q192.7 503.5 193.1 514.2 Z" fill="#b4b4c6"/><ellipse cx="195.0" cy="497.0" rx="7.4" ry="11.9" transform="rotate(-90.0 195.0 497.0)" fill="#b4b4c6"/><ellipse cx="195.0" cy="496.5" rx="4.3" ry="7.4" transform="rotate(-90.0 195.0 497.0)" fill="#8b8ba0"/><path d="M235.4 536.0 L235.9 514.2 L232.1 514.2 L232.6 536.0 Z" fill="#b4b4c6"/><path d="M235.9 514.2 Q236.3 503.5 245.9 497.0 L222.1 497.0 Q231.7 503.5 232.1 514.2 Z" fill="#b4b4c6"/><ellipse cx="234.0" cy="497.0" rx="7.4" ry="11.9" transform="rotate(-90.0 234.0 497.0)" fill="#b4b4c6"/><ellipse cx="234.0" cy="496.5" rx="4.3" ry="7.4" transform="rotate(-90.0 234.0 497.0)" fill="#8b8ba0"/><path d="M300.9 525.0 L312.9 514.8 L310.3 512.0 L299.1 523.0 Z" fill="#b4b4c6"/><path d="M312.9 514.8 Q320.2 508.6 330.2 510.8 L315.8 495.2 Q317.1 505.3 310.3 512.0 Z" fill="#b4b4c6"/><ellipse cx="323.0" cy="503.0" rx="6.6" ry="10.6" transform="rotate(-42.4 323.0 503.0)" fill="#b4b4c6"/><ellipse cx="323.4" cy="502.7" rx="3.8" ry="6.6" transform="rotate(-42.4 323.0 503.0)" fill="#8b8ba0"/><path d="M51.3 535.5 L48.9 526.9 L45.3 528.2 L48.7 536.5 Z" fill="#b4b4c6"/><path d="M48.9 526.9 Q46.1 517.8 52.0 509.5 L32.0 516.5 Q41.8 519.3 45.3 528.2 Z" fill="#b4b4c6"/><ellipse cx="42.0" cy="513.0" rx="6.6" ry="10.6" transform="rotate(-109.2 42.0 513.0)" fill="#b4b4c6"/><ellipse cx="41.8" cy="512.5" rx="3.8" ry="6.6" transform="rotate(-109.2 42.0 513.0)" fill="#8b8ba0"/><path d="M76.3 529.4 L70.6 515.5 L67.2 517.0 L73.7 530.6 Z" fill="#b4b4c6"/><path d="M70.6 515.5 Q67.3 507.1 72.1 498.9 L53.9 507.1 Q63.2 509.0 67.2 517.0 Z" fill="#b4b4c6"/><ellipse cx="63.0" cy="503.0" rx="6.2" ry="10.0" transform="rotate(-114.0 63.0 503.0)" fill="#b4b4c6"/><ellipse cx="62.8" cy="502.5" rx="3.6" ry="6.2" transform="rotate(-114.0 63.0 503.0)" fill="#8b8ba0"/><path d="M31.3 535.4 L29.4 530.5 L26.0 532.2 L28.7 536.6 Z" fill="#b4b4c6"/><path d="M29.4 530.5 Q26.2 523.3 29.8 516.1 L14.2 523.9 Q22.1 525.3 26.0 532.2 Z" fill="#b4b4c6"/><ellipse cx="22.0" cy="520.0" rx="5.4" ry="8.8" transform="rotate(-116.6 22.0 520.0)" fill="#b4b4c6"/><ellipse cx="21.8" cy="519.6" rx="3.1" ry="5.4" transform="rotate(-116.6 22.0 520.0)" fill="#8b8ba0"/><path d="M263.4 536.1 L264.3 525.7 L260.5 525.5 L260.6 535.9 Z" fill="#b4b4c6"/><path d="M264.3 525.7 Q265.1 517.2 272.4 512.4 L253.6 511.6 Q260.5 517.1 260.5 525.5 Z" fill="#b4b4c6"/><ellipse cx="263.0" cy="512.0" rx="5.8" ry="9.4" transform="rotate(-87.6 263.0 512.0)" fill="#b4b4c6"/><ellipse cx="263.0" cy="511.5" rx="3.4" ry="5.8" transform="rotate(-87.6 263.0 512.0)" fill="#8b8ba0"/><path d="M286.3 536.4 L289.2 528.7 L285.5 527.6 L283.7 535.6 Z" fill="#b4b4c6"/><path d="M289.2 528.7 Q291.8 521.3 299.4 518.5 L282.6 513.5 Q287.4 520.0 285.5 527.6 Z" fill="#b4b4c6"/><ellipse cx="291.0" cy="516.0" rx="5.4" ry="8.8" transform="rotate(-73.3 291.0 516.0)" fill="#b4b4c6"/><ellipse cx="291.1" cy="515.5" rx="3.1" ry="5.4" transform="rotate(-73.3 291.0 516.0)" fill="#8b8ba0"/><path d="M111.4 500.0 L111.9 496.7 L108.1 496.7 L108.6 500.0 Z" fill="#b4b4c6"/><path d="M111.9 496.7 Q112.3 488.8 118.8 484.0 L101.2 484.0 Q107.7 488.8 108.1 496.7 Z" fill="#b4b4c6"/><ellipse cx="110.0" cy="484.0" rx="5.4" ry="8.8" transform="rotate(-90.0 110.0 484.0)" fill="#b4b4c6"/><ellipse cx="110.0" cy="483.5" rx="3.1" ry="5.4" transform="rotate(-90.0 110.0 484.0)" fill="#8b8ba0"/><path d="M136.4 499.8 L134.0 482.2 L130.2 482.8 L133.6 500.2 Z" fill="#b4b4c6"/><path d="M134.0 482.2 Q133.0 474.4 138.6 468.6 L121.4 471.4 Q128.5 475.1 130.2 482.8 Z" fill="#b4b4c6"/><ellipse cx="130.0" cy="470.0" rx="5.4" ry="8.8" transform="rotate(-99.5 130.0 470.0)" fill="#b4b4c6"/><ellipse cx="129.9" cy="469.5" rx="3.1" ry="5.4" transform="rotate(-99.5 130.0 470.0)" fill="#8b8ba0"/><path d="M181.4 499.7 L180.4 492.1 L176.6 492.8 L178.6 500.3 Z" fill="#b4b4c6"/><path d="M180.4 492.1 Q179.2 484.3 184.6 478.3 L167.4 481.7 Q174.7 485.2 176.6 492.8 Z" fill="#b4b4c6"/><ellipse cx="176.0" cy="480.0" rx="5.4" ry="8.8" transform="rotate(-101.3 176.0 480.0)" fill="#b4b4c6"/><ellipse cx="175.9" cy="479.5" rx="3.1" ry="5.4" transform="rotate(-101.3 176.0 480.0)" fill="#8b8ba0"/><path d="M345.8 537.1 L357.1 529.2 L354.8 526.2 L344.2 534.9 Z" fill="#b4b4c6"/><path d="M357.1 529.2 Q363.6 524.7 371.3 527.0 L360.7 513.0 Q360.8 521.1 354.8 526.2 Z" fill="#b4b4c6"/><ellipse cx="366.0" cy="520.0" rx="5.4" ry="8.8" transform="rotate(-37.3 366.0 520.0)" fill="#b4b4c6"/><ellipse cx="366.4" cy="519.7" rx="3.1" ry="5.4" transform="rotate(-37.3 366.0 520.0)" fill="#8b8ba0"/><path d="M385.3 537.4 L404.7 534.0 L404.0 530.3 L384.7 534.6 Z" fill="#b4b4c6"/><path d="M404.7 534.0 Q411.4 533.0 416.5 537.4 L413.5 522.6 Q410.5 528.6 404.0 530.3 Z" fill="#b4b4c6"/><ellipse cx="415.0" cy="530.0" rx="4.7" ry="7.5" transform="rotate(-11.3 415.0 530.0)" fill="#b4b4c6"/><ellipse cx="415.5" cy="529.9" rx="2.7" ry="4.7" transform="rotate(-11.3 415.0 530.0)" fill="#8b8ba0"/><path d="M330.9 539.1 L341.3 531.4 L338.9 528.4 L329.1 536.9 Z" fill="#b4b4c6"/><path d="M341.3 531.4 Q347.7 526.8 355.5 528.8 L344.5 515.2 Q344.8 523.2 338.9 528.4 Z" fill="#b4b4c6"/><ellipse cx="350.0" cy="522.0" rx="5.4" ry="8.8" transform="rotate(-38.7 350.0 522.0)" fill="#b4b4c6"/><ellipse cx="350.4" cy="521.7" rx="3.1" ry="5.4" transform="rotate(-38.7 350.0 522.0)" fill="#8b8ba0"/><path d="M25.3 517.4 L22.9 510.8 L19.4 512.4 L22.7 518.6 Z" fill="#b4b4c6"/><path d="M22.9 510.8 Q20.0 503.5 24.0 496.4 L8.0 503.6 Q15.9 505.3 19.4 512.4 Z" fill="#b4b4c6"/><ellipse cx="16.0" cy="500.0" rx="5.4" ry="8.8" transform="rotate(-114.0 16.0 500.0)" fill="#b4b4c6"/><ellipse cx="15.8" cy="499.5" rx="3.1" ry="5.4" transform="rotate(-114.0 16.0 500.0)" fill="#8b8ba0"/><path d="M101.3 537.6 L100.7 533.5 L97.1 534.5 L98.7 538.4 Z" fill="#b4b4c6"/><path d="M100.7 533.5 Q98.7 524.7 104.6 517.3 L85.4 522.7 Q94.3 525.9 97.1 534.5 Z" fill="#b4b4c6"/><ellipse cx="95.0" cy="520.0" rx="6.2" ry="10.0" transform="rotate(-105.5 95.0 520.0)" fill="#b4b4c6"/><ellipse cx="94.9" cy="519.5" rx="3.6" ry="6.2" transform="rotate(-105.5 95.0 520.0)" fill="#8b8ba0"/><path d="M126.4 537.7 L126.4 535.1 L122.6 535.8 L123.6 538.3 Z" fill="#b4b4c6"/><path d="M126.4 535.1 Q125.2 527.3 130.6 521.3 L113.4 524.7 Q120.7 528.2 122.6 535.8 Z" fill="#b4b4c6"/><ellipse cx="122.0" cy="523.0" rx="5.4" ry="8.8" transform="rotate(-101.3 122.0 523.0)" fill="#b4b4c6"/><ellipse cx="121.9" cy="522.5" rx="3.1" ry="5.4" transform="rotate(-101.3 122.0 523.0)" fill="#8b8ba0"/><path d="M176.4 537.8 L175.8 530.1 L172.1 530.6 L173.6 538.2 Z" fill="#b4b4c6"/><path d="M175.8 530.1 Q175.0 521.1 181.9 514.6 L162.1 517.4 Q170.5 521.8 172.1 530.6 Z" fill="#b4b4c6"/><ellipse cx="172.0" cy="516.0" rx="6.2" ry="10.0" transform="rotate(-97.8 172.0 516.0)" fill="#b4b4c6"/><ellipse cx="171.9" cy="515.5" rx="3.6" ry="6.2" transform="rotate(-97.8 172.0 516.0)" fill="#8b8ba0"/><path d="M216.4 537.9 L216.7 535.4 L213.0 535.6 L213.6 538.1 Z" fill="#b4b4c6"/><path d="M216.7 535.4 Q216.6 526.4 224.0 520.4 L204.0 521.6 Q212.0 526.6 213.0 535.6 Z" fill="#b4b4c6"/><ellipse cx="214.0" cy="521.0" rx="6.2" ry="10.0" transform="rotate(-93.4 214.0 521.0)" fill="#b4b4c6"/><ellipse cx="214.0" cy="520.5" rx="3.6" ry="6.2" transform="rotate(-93.4 214.0 521.0)" fill="#8b8ba0"/><path d="M251.4 538.0 L251.9 535.7 L248.1 535.7 L248.6 538.0 Z" fill="#b4b4c6"/><path d="M251.9 535.7 Q252.3 527.8 258.8 523.0 L241.2 523.0 Q247.7 527.8 248.1 535.7 Z" fill="#b4b4c6"/><ellipse cx="250.0" cy="523.0" rx="5.4" ry="8.8" transform="rotate(-90.0 250.0 523.0)" fill="#b4b4c6"/><ellipse cx="250.0" cy="522.5" rx="3.1" ry="5.4" transform="rotate(-90.0 250.0 523.0)" fill="#8b8ba0"/><path d="M311.2 538.7 L313.4 536.0 L310.1 534.1 L308.8 537.3 Z" fill="#b4b4c6"/><path d="M313.4 536.0 Q317.6 529.3 325.6 528.3 L310.4 519.7 Q313.6 527.0 310.1 534.1 Z" fill="#b4b4c6"/><ellipse cx="318.0" cy="524.0" rx="5.4" ry="8.8" transform="rotate(-60.3 318.0 524.0)" fill="#b4b4c6"/><ellipse cx="318.2" cy="523.6" rx="3.1" ry="5.4" transform="rotate(-60.3 318.0 524.0)" fill="#8b8ba0"/><path d="M41.1 499.2 L38.9 495.2 L35.8 497.4 L38.9 500.8 Z" fill="#b4b4c6"/><path d="M38.9 495.2 Q34.7 488.6 37.1 480.9 L22.9 491.1 Q30.9 491.2 35.8 497.4 Z" fill="#b4b4c6"/><ellipse cx="30.0" cy="486.0" rx="5.4" ry="8.8" transform="rotate(-125.5 30.0 486.0)" fill="#b4b4c6"/><ellipse cx="29.7" cy="485.6" rx="3.1" ry="5.4" transform="rotate(-125.5 30.0 486.0)" fill="#8b8ba0"/><path d="M67.2 491.3 L65.9 488.1 L62.6 490.0 L64.8 492.7 Z" fill="#b4b4c6"/><path d="M65.9 488.1 Q62.4 481.0 65.6 473.7 L50.4 482.3 Q58.4 483.3 62.6 490.0 Z" fill="#b4b4c6"/><ellipse cx="58.0" cy="478.0" rx="5.4" ry="8.8" transform="rotate(-119.7 58.0 478.0)" fill="#b4b4c6"/><ellipse cx="57.8" cy="477.6" rx="3.1" ry="5.4" transform="rotate(-119.7 58.0 478.0)" fill="#8b8ba0"/><path d="M123.9 454.8h1.0M117.3 434.7h1.5M128.6 449.1h1.2M119.9 447.8h1.2M129.1 455.5h1.5M116.4 433.7h1.3M119.2 434.0h1.1M131.9 485.5h1.3M129.8 454.7h1.8M125.0 463.6h1.0M120.1 437.6h1.7M117.2 437.9h1.3M114.4 431.4h0.9M123.9 461.7h1.3M133.9 466.2h1.0M128.9 468.4h1.2M125.3 436.7h1.7M125.5 446.3h1.2M129.5 473.5h1.0M129.2 473.6h1.6M122.5 430.3h1.6M127.0 469.0h1.4M131.2 478.3h1.6M126.2 456.6h0.9M121.6 430.1h1.2M124.2 456.2h1.5M132.5 464.8h1.0M120.6 430.6h1.1M115.8 435.7h1.8M129.9 469.6h1.7M119.6 437.4h1.1M116.5 429.5h1.4M131.1 465.6h1.8M121.1 440.4h1.7M129.8 462.5h1.8M132.8 467.6h1.4M124.3 444.8h1.0M116.2 428.7h0.9M119.4 448.0h1.5M116.7 438.7h1.2M133.4 471.4h1.3M125.6 450.7h1.6M116.6 431.3h0.9M129.7 466.9h1.2M128.2 463.1h1.4M131.7 467.9h1.6M123.8 457.4h0.9M131.9 476.8h1.5M131.2 453.9h1.1M130.3 468.4h1.2M122.8 431.4h1.7M117.0 425.1h0.9M129.8 463.5h1.1M123.5 453.7h1.4M125.7 450.1h1.2M132.6 468.3h0.8M125.5 463.2h1.0M128.2 454.6h1.6M129.4 473.1h1.2M120.8 448.3h1.5M153.9 431.6h1.5M153.6 428.9h0.9M151.7 427.4h1.7M151.6 434.1h1.4M147.8 448.1h1.4M149.9 453.2h1.3M151.5 416.6h1.2M146.6 436.0h1.0M154.7 447.6h0.9M153.7 430.1h1.6M150.3 444.2h1.2M149.1 454.7h1.7M147.9 424.7h1.2M152.2 462.5h1.1M150.6 452.2h0.8M151.0 427.9h1.5M157.5 462.5h1.2M155.5 439.3h1.3M146.2 420.6h1.0M150.5 439.4h0.8M157.0 453.1h1.1M146.6 420.1h1.2M155.4 464.9h1.7M144.9 420.8h1.1M157.5 455.7h1.3M172.9 454.3h1.7M172.9 449.0h0.9M178.8 434.6h1.1M181.4 436.1h1.7M175.1 441.6h1.5M175.8 444.0h1.1M180.2 427.9h1.6M163.9 463.0h1.0M166.8 463.7h1.7M173.4 453.9h1.5M168.5 459.5h1.1M172.2 458.8h0.8M173.3 459.3h1.2M172.6 449.4h1.3M177.3 427.2h1.0M181.8 434.1h0.8M169.4 464.0h1.8M173.9 452.9h1.6M181.9 425.4h1.6M170.4 458.1h1.0M169.9 455.0h1.4M171.8 455.6h0.8M177.2 430.6h1.5M175.7 457.4h1.5M180.0 445.7h1.8M179.2 441.3h0.9M175.9 450.5h1.7M176.1 449.7h0.9M169.0 468.1h1.7M175.3 459.8h1.4M72.1 502.1h1.5M19.4 473.6h1.7M60.2 498.7h1.5M26.1 470.9h1.6M34.3 478.5h1.1M43.3 492.6h1.0M53.6 498.5h1.6M57.4 500.3h1.4M65.0 500.4h1.1M49.4 492.2h1.3M61.4 497.4h1.3M42.8 482.5h1.4M34.8 479.5h1.6M54.6 488.7h0.9M44.8 488.4h1.7M32.3 477.8h1.5M34.2 483.5h1.4M62.0 498.4h1.6M54.7 492.1h1.4M58.9 496.0h1.1M66.3 507.0h1.7M31.5 479.2h1.4M44.4 489.9h1.4M46.6 490.5h1.3M70.1 503.1h0.9M68.2 507.2h1.4M28.4 477.8h1.8M40.6 482.0h1.5M51.2 491.6h1.0M64.7 505.1h1.3M302.8 492.9h1.1M321.5 462.6h0.9M314.3 473.9h1.1M293.9 497.2h1.1M316.2 460.2h1.5M314.8 464.6h1.5M317.0 471.3h1.3M294.1 500.7h1.1M302.0 489.3h1.1M313.4 466.1h1.3M302.2 496.7h0.9M309.4 467.7h1.8M322.3 460.5h1.5M314.0 463.7h1.5M316.6 464.3h1.6M307.1 481.4h0.8M302.0 496.1h1.7M322.3 461.8h1.1M310.7 480.2h0.8M287.9 502.3h1.2M304.0 491.7h1.1M304.7 492.1h0.8M303.5 491.8h1.0M304.4 484.9h1.1M313.4 466.8h1.8M351.2 469.8h1.0M356.0 470.9h1.7M351.8 473.3h1.3M319.1 503.8h1.2M348.8 474.2h1.0M329.7 497.2h1.4M340.2 483.8h1.5M313.1 513.3h1.0M350.3 470.7h1.5M357.1 472.9h1.1M316.9 502.7h1.4M327.5 500.9h1.0M334.1 495.6h1.0M339.0 483.3h1.0M353.3 473.1h1.8M345.0 486.0h1.7M328.5 499.4h1.4M318.9 509.5h0.9M332.2 491.2h1.5M333.9 493.8h1.4M109.8 491.5h1.7M106.2 484.5h1.2M108.1 485.4h1.0M106.2 492.1h1.2M112.5 488.3h0.9M106.9 489.5h1.6M108.5 486.3h1.8M105.4 485.4h1.4M110.2 478.1h1.3M113.3 483.5h1.7M105.2 482.1h1.0M113.2 493.0h1.0M114.1 487.0h1.6M106.9 485.1h1.1M111.4 484.2h0.8M110.4 477.0h0.9M114.5 491.0h1.7M114.3 482.9h1.2M108.4 481.8h1.1M114.5 490.8h1.2" stroke="#3a3f58" stroke-width="1.1" fill="none"/></g></svg>
<div class="r" style="left:858px;top:44.5px;width:308.5px;height:217.5px;background:#474747;box-shadow:0 1px 9px 1px rgba(0,0,0,.6);"></div>
<div class="r" style="left:858px;top:44.5px;width:308.5px;height:25px;background:#fff;"></div>
<svg style="left:865px;top:50px" width="12" height="13" viewBox="0 0 12 13"><rect width="12" height="13" fill="#d9f0f0"/></svg><div class="t" style="left:867.6px;top:49.4px;font-size:11px;line-height:14px;color:#1a8aa0;font-weight:bold;">3</div>
<div class="t" style="left:882.7px;top:49.3px;font-size:11.5px;line-height:15px;color:#8a8a8a;transform:scaleX(0.8197);transform-origin:0 50%;">Rendering</div>
<svg style="left:1148px;top:51px" width="11" height="11" viewBox="0 0 11 11"><path d="M1 1l9 9M10 1l-9 9" stroke="#777" stroke-width="1.1"/></svg><div class="t" style="left:864.5px;top:82.1px;font-size:10px;line-height:13px;color:#f0f0f0;transform:scaleX(0.9064);transform-origin:0 50%;">Total Animation:</div>
<div class="r" style="left:1053px;top:76px;width:45px;height:15.5px;background:#606060;border-radius:2px;"></div>
<div class="t" style="left:1065.5px;top:78.0px;font-size:10px;line-height:13px;color:#f0f0f0;transform:scaleX(0.8992);transform-origin:0 50%;">Stop</div>
<div class="r" style="left:1109px;top:76px;width:45px;height:15.5px;background:#606060;border-radius:2px;"></div>
<div class="t" style="left:1117.0px;top:78.0px;font-size:10px;line-height:13px;color:#f0f0f0;transform:scaleX(0.8833);transform-origin:0 50%;">Cancel</div>
<div class="r" style="left:864.5px;top:98px;width:295.5px;height:12.7px;background:#e6e6e6;"></div>
<div class="t" style="left:864.5px;top:116.2px;font-size:10px;line-height:13px;color:#f0f0f0;transform:scaleX(0.9107);transform-origin:0 50%;">Current Task:</div>
<div class="t" style="left:928.6px;top:116.2px;font-size:10px;line-height:13px;color:#f0f0f0;transform:scaleX(0.9219);transform-origin:0 50%;">Rendering image (pass 1) [00:00:45,5] [00:00:52,4 est]</div>
<div class="r" style="left:864.5px;top:131.5px;width:295.5px;height:13px;background:#e6e6e6;"></div>
<div class="r" style="left:864.5px;top:131.5px;width:253.5px;height:13px;background:#12a224;background:linear-gradient(90deg,#0c8f1c 0%,#14a828 30%,#6fe07a 47%,#1cb030 60%,#12a224 100%);"></div>
<div class="r" style="left:864.5px;top:131.5px;width:253.5px;height:13px;background:transparent;background:linear-gradient(180deg,rgba(255,255,255,.25) 0%,rgba(255,255,255,0) 45%,rgba(0,0,0,.12) 100%);"></div>
<div class="r" style="left:866px;top:158.5px;width:287.5px;height:87px;background:#4e4e4e;border:1px solid #565656;border-bottom:none;box-sizing:border-box;"></div>
<svg style="left:869.5px;top:163px" width="7" height="5" viewBox="0 0 7 5"><path d="M.5 .5h6L3.500 4.500z" fill="#e6e6e6"/></svg><div class="t" style="left:881.3px;top:159.3px;font-size:10.5px;line-height:14px;color:#f4f4f4;transform:scaleX(0.9420);transform-origin:0 50%;font-weight:bold;">Common Parameters</div>
<svg style="left:1141px;top:163px" width="5" height="5" viewBox="0 0 5 5"><path d="M0 .5h2v1.500H0zM3 .5h2v1.500H3zM0 3h2v1.500H0zM3 3h2v1.500H3z" fill="#707070"/></svg><div class="r" style="left:878px;top:181px;width:263px;height:53px;background:transparent;border:1px solid #3b3b3b;box-sizing:border-box;"></div>
<div class="r" style="left:881px;top:176px;width:84px;height:11px;background:#4e4e4e;"></div>
<div class="t" style="left:882.4px;top:175.0px;font-size:10px;line-height:13px;color:#f0f0f0;transform:scaleX(0.8831);transform-origin:0 50%;">Rendering Progress:</div>
<div class="t" style="left:883.6px;top:190.0px;font-size:10px;line-height:13px;color:#f0f0f0;transform:scaleX(0.8997);transform-origin:0 50%;">Frame #</div>
<div class="t" style="left:922.0px;top:188.5px;font-size:10px;line-height:13px;color:#f0f0f0;transform:scaleX(0.8989);transform-origin:0 50%;">0</div>
<div class="t" style="left:906.0px;top:204.0px;font-size:10px;line-height:13px;color:#f0f0f0;transform:scaleX(1.0339);transform-origin:0 50%;">1of 1</div>
<div class="t" style="left:964.7px;top:203.2px;font-size:10px;line-height:13px;color:#f0f0f0;transform:scaleX(0.9466);transform-origin:0 50%;">Total</div>
<div class="t" style="left:883.6px;top:218.5px;font-size:10px;line-height:13px;color:#f0f0f0;transform:scaleX(0.8831);transform-origin:0 50%;">Pass #</div>
<div class="t" style="left:916.5px;top:218.5px;font-size:10px;line-height:13px;color:#f0f0f0;transform:scaleX(0.9350);transform-origin:0 50%;">1/1</div>
<div class="t" style="left:1022.8px;top:188.5px;font-size:10px;line-height:13px;color:#f0f0f0;transform:scaleX(0.8701);transform-origin:0 50%;">Last Frame Time:</div>
<div class="t" style="left:1096.0px;top:188.5px;font-size:10px;line-height:13px;color:#f0f0f0;transform:scaleX(0.9499);transform-origin:0 50%;">0:01:00</div>
<div class="t" style="left:1036.0px;top:203.8px;font-size:10px;line-height:13px;color:#f0f0f0;transform:scaleX(0.8600);transform-origin:0 50%;">Elapsed Time:</div>
<div class="t" style="left:1096.0px;top:203.8px;font-size:10px;line-height:13px;color:#f0f0f0;transform:scaleX(0.9499);transform-origin:0 50%;">0:00:00</div>
<div class="t" style="left:1026.7px;top:217.9px;font-size:10px;line-height:13px;color:#f0f0f0;transform:scaleX(0.8481);transform-origin:0 50%;">Time Remaining:</div>
<div class="t" style="left:1093.8px;top:217.9px;font-size:10px;line-height:13px;color:#f0f0f0;transform:scaleX(0.8116);transform-origin:0 50%;">??:??:??</div>
<div class="r" style="left:866px;top:236px;width:288px;height:9.500px;overflow:hidden"><div class="r" style="left:12px;top:6.5px;width:263px;height:13.5px;background:transparent;border:1px solid #3b3b3b;box-sizing:border-box;"></div>
<div class="r" style="left:15px;top:1px;width:85px;height:11px;background:#4e4e4e;"></div>
<div class="t" style="left:16.4px;top:1.5px;font-size:10px;line-height:13px;color:#f0f0f0;transform:scaleX(0.8993);transform-origin:0 50%;">Render Settings:</div>
</div><div class="r" style="left:1155px;top:158.5px;width:5.5px;height:87.5px;background:#3e3e3e;"></div>
<div class="r" style="left:1156px;top:158.5px;width:3.5px;height:31.5px;background:#626262;"></div>
